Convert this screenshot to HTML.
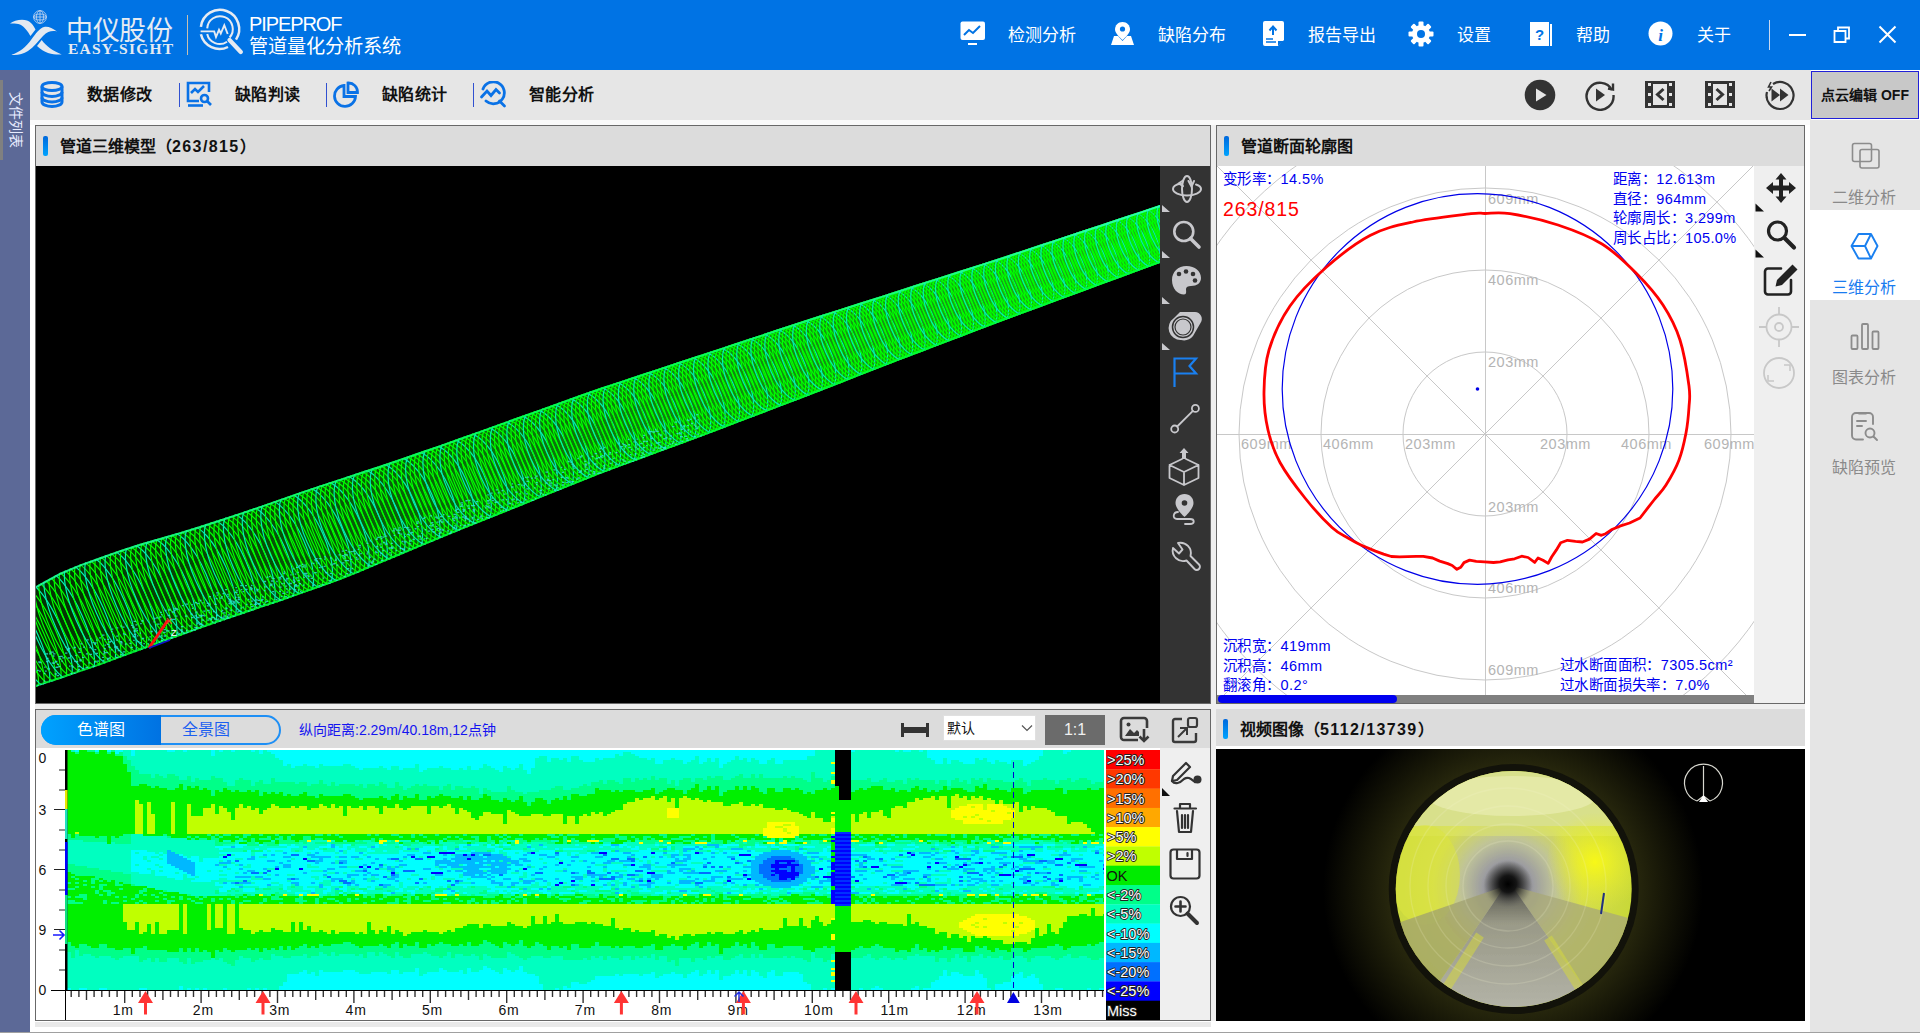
<!DOCTYPE html>
<html lang="zh-CN"><head><meta charset="utf-8">
<style>
*{margin:0;padding:0;box-sizing:border-box}
html,body{width:1920px;height:1033px;overflow:hidden;background:#ffffff;font-family:"Liberation Sans",sans-serif}
.a{position:absolute}
#hdr{left:0;top:0;width:1920px;height:70px;background:#0073e4}
.ht{color:#fff;font-size:17px;line-height:20px;top:25.5px;margin-left:1px}
#side{left:0;top:70px;width:30px;height:962px;background:#5c6997}
#tb{left:30px;top:70px;width:1781px;height:50px;background:#e6e6e6}
.tt{font-size:16px;font-weight:bold;color:#111;top:85px;line-height:20px;letter-spacing:0.3px}
.sep{width:1px;height:24px;top:83px;background:#3050d0}
.pnl{border:1px solid #686868}
.ttl{background:#dcdcdc}
.acc{width:5px;height:20px;border-radius:2px;background:linear-gradient(#0068dc,#00a4ff)}
.pt{font-size:16px;font-weight:bold;color:#111;line-height:20px}
.bl{color:#0000f0;font-size:14.5px;line-height:19.5px;letter-spacing:0.4px}
.gl{color:#b0b0b0;font-size:14px;line-height:16px}
#rs{left:1810px;top:120px;width:110px;height:912px;background:#e5e5e5}
.ri{color:#8a8a8a;font-size:16px;line-height:20px;width:110px;text-align:center}
</style></head><body>
<!-- header -->
<div id="hdr" class="a"></div>

<!-- logo -->
<svg class="a" style="left:0;top:0" width="70" height="60" viewBox="0 0 70 60">
 <g fill="#e3e9f1">
  <path d="M10 23.6 C15 19.5 26 17.5 31 23 C33 25 34.5 27.5 35.5 29.5 L30.5 36 C28 32 25 27 20 24.5 C17 23.5 13 23.3 10 23.6Z"/>
  <path d="M41.7 40 C46 46 53 51 61.7 54.5 C55 55 45 54 37 46 Z"/>
  <path d="M11.4 54.8 C20 52 26 47 31 40 C36 33 40 28 44 27 C48 26 52 28 57 31.4 C52 30.5 48 31 43 36 C38 41 34 47 28 51 C23 54 17 55.5 11.4 54.8Z" stroke="#0073e4" stroke-width="1.4" paint-order="stroke"/>
 </g>
 <g fill="none" stroke="#c8d8f0" stroke-width="0.8">
  <circle cx="40" cy="17" r="6.4"/>
  <ellipse cx="40" cy="17" rx="3.5" ry="6.4"/>
  <ellipse cx="40" cy="17" rx="6.4" ry="3"/>
  <path d="M34 17 H46 M40 11 V23"/>
 </g>
</svg>
<div class="a" style="left:66px;top:15px;font-size:27px;line-height:32px;color:#e6ebf2;letter-spacing:-0.3px">中仪股份</div>
<div class="a" style="left:68px;top:42px;font-family:'Liberation Serif',serif;font-weight:bold;font-size:15.5px;line-height:14px;color:#e6ebf2;letter-spacing:1.2px">EASY-SIGHT</div>
<div class="a" style="left:187px;top:15px;width:1px;height:40px;background:#c8c0b0"></div>
<svg class="a" style="left:195px;top:5px" width="55" height="55" viewBox="0 0 55 55">
 <g fill="none" stroke="#e6ebf2" stroke-linecap="butt">
  <path d="M5.9 21.8 A19.2 19.2 0 1 1 41 34.6" stroke-width="2.5"/>
  <path d="M5.9 29.3 A19.2 19.2 0 0 0 33 42" stroke-width="2.5"/>
  <path d="M12.2 23.4 A12.8 12.8 0 1 1 34.6 32.5" stroke-width="2"/>
  <path d="M12.2 29 A12.8 12.8 0 0 0 32 36.7" stroke-width="2"/>
  <path d="M5.6 26.4 H19.2 L21 32 L24 24.8 L25.8 28.5 L29.3 20.2 L32.7 29" stroke-width="1.9" stroke-linejoin="miter"/>
  <path d="M34.5 35 L45.8 46.9" stroke-width="4.3" stroke-linecap="round"/>
 </g>
</svg>
<div class="a" style="left:249px;top:13px;font-size:20px;line-height:22px;color:#fff;letter-spacing:-1.1px">PIPEPROF</div>
<div class="a" style="left:249px;top:35.5px;font-size:19.2px;line-height:22px;color:#fff">管道量化分析系统</div>

<!-- header menu -->
<svg class="a" style="left:960px;top:21px" width="26" height="25" viewBox="0 0 26 25"><rect x="0.5" y="0.5" width="24.5" height="18.5" rx="2" fill="#fff"/><path d="M4 14 L9 9 L13 12 L20 5" fill="none" stroke="#0073e4" stroke-width="2"/><rect x="8" y="22" width="9" height="2" fill="#fff"/></svg>
<div class="a ht" style="left:1007px">检测分析</div>
<svg class="a" style="left:1110px;top:21px" width="25" height="25" viewBox="0 0 25 25"><path d="M12.5 1 C8 1 5 4.5 5 8.5 C5 13 12.5 19 12.5 19 C12.5 19 20 13 20 8.5 C20 4.5 17 1 12.5 1Z" fill="#fff"/><circle cx="12.5" cy="8" r="2.6" fill="#0073e4"/><path d="M4 15 L8 15 L12.5 20 L17 15 L21 15 L24 24 L1 24Z" fill="#fff"/></svg>
<div class="a ht" style="left:1157px">缺陷分布</div>
<svg class="a" style="left:1263px;top:21px" width="21" height="25" viewBox="0 0 21 25"><path d="M2 0 H19 A2 2 0 0 1 21 2 V19 L15 25 H2 A2 2 0 0 1 0 23 V2 A2 2 0 0 1 2 0Z" fill="#fff"/><path d="M10 14 V6 M6.5 9.5 L10 5.5 L13.5 9.5" fill="none" stroke="#0073e4" stroke-width="2"/><path d="M3 18 H10 M3 21 H13" stroke="#0073e4" stroke-width="1.5"/><path d="M15 25 V20 H21" fill="#0073e4"/></svg>
<div class="a ht" style="left:1307px">报告导出</div>
<svg class="a" style="left:1408px;top:21px" width="26" height="26" viewBox="0 0 26 26"><g fill="#fff"><circle cx="13" cy="13" r="9"/><g id="teeth"><rect x="10.5" y="0.5" width="5" height="6" rx="1"/><rect x="10.5" y="19.5" width="5" height="6" rx="1"/></g><use href="#teeth" transform="rotate(45 13 13)"/><use href="#teeth" transform="rotate(90 13 13)"/><use href="#teeth" transform="rotate(135 13 13)"/></g><circle cx="13" cy="13" r="4" fill="#0073e4"/></svg>
<div class="a ht" style="left:1456px">设置</div>
<svg class="a" style="left:1529px;top:21px" width="24" height="26" viewBox="0 0 24 26"><path d="M1 1 H20 V25 H1Z" fill="#fff"/><path d="M21 3 H23 V25 H21" fill="#fff"/><text x="10.5" y="19" font-size="15" font-weight="bold" text-anchor="middle" fill="#0073e4" font-family="Liberation Sans">?</text></svg>
<div class="a ht" style="left:1575px">帮助</div>
<svg class="a" style="left:1648px;top:21px" width="25" height="25" viewBox="0 0 25 25"><circle cx="12.5" cy="12.5" r="12" fill="#fff"/><text x="12.5" y="19.5" font-size="17" font-weight="bold" font-style="italic" text-anchor="middle" fill="#0073e4" font-family="Liberation Serif">i</text></svg>
<div class="a ht" style="left:1696px">关于</div>
<div class="a" style="left:1769px;top:20px;width:1px;height:30px;background:#c8d8f0"></div>
<div class="a" style="left:1789px;top:34px;width:17px;height:2px;background:#fff"></div>
<svg class="a" style="left:1833px;top:26px" width="18" height="18" viewBox="0 0 18 18"><path d="M1.5 5 H12.5 V16 H1.5Z M5 5 V1.5 H16 V12.5 H12.5" fill="none" stroke="#fff" stroke-width="1.8"/></svg>
<svg class="a" style="left:1878px;top:25px" width="19" height="19" viewBox="0 0 19 19"><path d="M1.5 1.5 L17.5 17.5 M17.5 1.5 L1.5 17.5" stroke="#fff" stroke-width="2"/></svg>

<div id="side" class="a"></div>
<div class="a" style="left:0;top:80px;width:3px;height:80px;background:#808080"></div>
<div class="a" style="left:-14px;top:112px;width:60px;height:16px;color:#e8ecff;font-size:14px;line-height:16px;transform:rotate(90deg);text-align:center">文件列表</div>
<div class="a" style="left:0;top:1032px;width:1920px;height:1px;background:#a0a0a0"></div>

<!-- toolbar -->
<div id="tb" class="a"></div>
<div class="a" style="left:30px;top:120px;width:1780px;height:5px;background:#fafafa"></div>
<!-- toolbar items -->
<svg class="a" style="left:40px;top:81px" width="25" height="27" viewBox="0 0 25 27"><g fill="none" stroke="#0a72e6" stroke-width="3"><ellipse cx="12" cy="5.5" rx="10" ry="4"/><path d="M2 5.5 V21 C2 23.5 6.5 25.5 12 25.5 C17.5 25.5 22 23.5 22 21 V5.5"/><path d="M2 11 C2 13.5 6.5 15.5 12 15.5 C17.5 15.5 22 13.5 22 11 M2 16.5 C2 19 6.5 21 12 21 C17.5 21 22 19 22 16.5"/></g></svg>
<div class="a tt" style="left:87px">数据修改</div>
<div class="a sep" style="left:179px"></div>
<svg class="a" style="left:186px;top:81px" width="28" height="27" viewBox="0 0 28 27"><g fill="none" stroke="#0a72e6" stroke-width="2.6"><path d="M13 20 H2 V2 H23 V11"/><path d="M5 12 L9 8 L12 11 L18 5"/><circle cx="18.5" cy="17.5" r="3.5"/><path d="M21 20 L25 24"/><path d="M2 24.5 H17"/></g></svg>
<div class="a tt" style="left:235px">缺陷判读</div>
<div class="a sep" style="left:326px"></div>
<svg class="a" style="left:333px;top:81px" width="27" height="27" viewBox="0 0 27 27"><g fill="none" stroke="#0a72e6" stroke-width="2.8"><path d="M11 4.5 A10.5 10.5 0 1 0 22.5 15.5 H11Z"/><path d="M15 2 A9 9 0 0 1 24.5 11.5 H15Z"/></g></svg>
<div class="a tt" style="left:382px">缺陷统计</div>
<div class="a sep" style="left:473px"></div>
<svg class="a" style="left:479px;top:81px" width="28" height="27" viewBox="0 0 28 27"><g fill="none" stroke="#0a72e6" stroke-width="2.8" stroke-linecap="round"><path d="M4 8 A11 11 0 1 1 7 20"/><path d="M2.5 16 L8 10 L12 14.5 L17 8.5 L20.5 12"/><path d="M20.5 20 L25.5 25"/></g></svg>
<div class="a tt" style="left:529px">智能分析</div>

<svg class="a" style="left:1524px;top:79px" width="32" height="32" viewBox="0 0 32 32"><circle cx="16" cy="16" r="15.3" fill="#333"/><path d="M12 9.5 L22.5 16 L12 22.5Z" fill="#e6e6e6"/></svg>
<svg class="a" style="left:1584px;top:79px" width="32" height="32" viewBox="0 0 32 32"><path d="M28 11 A13.5 13.5 0 1 0 29.5 16" fill="none" stroke="#333" stroke-width="2.4"/><path d="M24 9.5 L29 10.5 L29 4.5" fill="none" stroke="#333" stroke-width="2.4"/><path d="M12 9.5 L21 16 L12 22.5Z" fill="#333"/></svg>
<svg class="a" style="left:1645px;top:81px" width="30" height="27" viewBox="0 0 30 27"><path d="M0 0 H30 V27 H0Z M3 2 V5 H6 V2Z M3 12 V15 H6 V12Z M3 22 V25 H6 V22Z M24 2 V5 H27 V2Z M24 12 V15 H27 V12Z M24 22 V25 H27 V22Z M8 3 V24 H22 V3Z" fill="#333" fill-rule="evenodd"/><path d="M18.5 8 L12.5 13.5 L18.5 19" fill="none" stroke="#333" stroke-width="3"/></svg>
<svg class="a" style="left:1705px;top:81px" width="30" height="27" viewBox="0 0 30 27"><path d="M0 0 H30 V27 H0Z M3 2 V5 H6 V2Z M3 12 V15 H6 V12Z M3 22 V25 H6 V22Z M24 2 V5 H27 V2Z M24 12 V15 H27 V12Z M24 22 V25 H27 V22Z M8 3 V24 H22 V3Z" fill="#333" fill-rule="evenodd"/><path d="M11.5 8 L17.5 13.5 L11.5 19" fill="none" stroke="#333" stroke-width="3"/></svg>
<svg class="a" style="left:1764px;top:79px" width="32" height="32" viewBox="0 0 32 32"><path d="M9 5 A13.5 13.5 0 1 1 3 13" fill="none" stroke="#333" stroke-width="2.2"/><path d="M2.5 18 A13.5 13.5 0 0 0 3 19" fill="none" stroke="#333" stroke-width="2"/><path d="M7 3 L4.5 8 L7.5 8 L5 12" fill="none" stroke="#333" stroke-width="1.6"/><path d="M7.5 9.5 L16 16 L7.5 22.5Z M16 9.5 L24.5 16 L16 22.5Z" fill="#333"/></svg>
<div class="a" style="left:1811px;top:71px;width:108px;height:48px;background:#c8c8c8;border:1px solid #2020d8;font-size:14px;font-weight:bold;color:#111;text-align:center;line-height:46px">点云编辑 OFF</div>



<!-- ===== 3D panel ===== -->
<div class="a" style="left:35px;top:704px;width:1770px;height:5px;background:#efefef"></div>
<div class="a" style="left:1211px;top:125px;width:5px;height:896px;background:#efefef"></div>
<div class="a pnl" style="left:35px;top:125px;width:1176px;height:579px;background:#000"></div>
<div class="a ttl" style="left:36px;top:126px;width:1174px;height:40px"></div>
<div class="a acc" style="left:43px;top:136px"></div>
<div class="a pt" style="left:60px;top:137px">管道三维模型（<span style="letter-spacing:1.4px">263/815</span>）</div>
<!--PIPE--><svg class="a" style="left:36px;top:166px" width="1124" height="537" viewBox="36 166 1124 537">
<defs><clipPath id="pc"><polygon points="20,594.8 40,583.8 60,572.8 80,564.4 100,557.3 120,550.2 140,543.8 160,538.0 180,532.2 200,526.0 220,519.5 240,512.9 260,506.2 280,499.2 300,492.2 320,485.4 340,478.9 360,472.3 380,465.8 400,458.9 420,452.1 440,445.2 460,438.0 480,430.9 500,423.7 520,416.6 540,409.4 560,402.3 580,395.1 600,388.0 620,381.4 640,374.8 660,368.2 680,361.6 700,355.0 720,348.4 740,341.8 760,335.2 780,328.6 800,322.0 820,315.6 840,309.2 860,302.8 880,296.4 900,290.0 920,283.6 940,277.2 960,270.8 980,264.4 1000,258.0 1020,251.4 1040,244.8 1060,238.2 1080,231.6 1100,225.0 1120,218.3 1140,211.7 1160,205.0 1180,198.3 1180,255.7 1160,263.0 1140,270.3 1120,277.7 1100,285.0 1080,292.4 1060,299.8 1040,307.2 1020,314.6 1000,322.0 980,329.6 960,337.2 940,344.8 920,352.4 900,360.0 880,367.8 860,375.6 840,383.4 820,391.2 800,399.0 780,406.6 760,414.2 740,421.8 720,429.4 700,437.0 680,444.4 660,451.8 640,459.2 620,466.6 600,474.0 580,482.0 560,490.1 540,498.1 520,506.2 500,514.2 480,522.3 460,530.3 440,538.4 420,546.8 400,555.2 380,563.6 360,572.1 340,580.1 320,587.2 300,594.3 280,601.4 260,608.1 240,614.9 220,621.7 200,628.8 180,635.9 160,643.0 140,650.4 120,657.8 100,665.3 80,672.1 60,678.9 40,685.6 20,692.4"/></clipPath></defs>
<g clip-path="url(#pc)">
<defs><linearGradient id="pg" x1="36" y1="0" x2="1160" y2="0" gradientUnits="userSpaceOnUse"><stop offset="0" stop-color="#043004"/><stop offset="0.4" stop-color="#0c6c0c"/><stop offset="1" stop-color="#18b818"/></linearGradient></defs><rect x="0" y="150" width="1200" height="600" fill="url(#pg)"/>
<g fill="none" stroke="#00ff00" stroke-width="1.2" stroke-opacity="1"><ellipse cx="0.0" cy="652.5" rx="11.2" ry="46.6" transform="rotate(-23.7 0.0 652.5)"/><ellipse stroke="#00f0b0" cx="5.4" cy="650.1" rx="11.4" ry="47.2" transform="rotate(-23.7 5.4 650.1)"/><ellipse cx="10.8" cy="647.7" rx="11.7" ry="47.8" transform="rotate(-23.7 10.8 647.7)"/><ellipse cx="16.2" cy="645.3" rx="11.9" ry="48.3" transform="rotate(-23.7 16.2 645.3)"/><ellipse cx="21.5" cy="642.9" rx="12.2" ry="48.9" transform="rotate(-23.7 21.5 642.9)"/><ellipse stroke="#00f0b0" cx="26.9" cy="640.6" rx="12.4" ry="49.4" transform="rotate(-23.7 26.9 640.6)"/><ellipse cx="32.2" cy="638.2" rx="12.6" ry="50.0" transform="rotate(-23.7 32.2 638.2)"/><ellipse cx="37.5" cy="635.8" rx="12.9" ry="50.6" transform="rotate(-23.7 37.5 635.8)"/><ellipse cx="42.8" cy="633.5" rx="13.1" ry="51.1" transform="rotate(-23.7 42.8 633.5)"/><ellipse stroke="#00f0b0" cx="48.1" cy="631.1" rx="13.4" ry="51.7" transform="rotate(-23.7 48.1 631.1)"/><ellipse cx="53.4" cy="628.8" rx="13.6" ry="52.2" transform="rotate(-23.7 53.4 628.8)"/><ellipse cx="58.7" cy="626.4" rx="13.9" ry="52.8" transform="rotate(-23.7 58.7 626.4)"/><ellipse cx="63.9" cy="624.1" rx="14.2" ry="53.3" transform="rotate(-23.7 63.9 624.1)"/><ellipse stroke="#00f0b0" cx="69.2" cy="622.0" rx="14.4" ry="53.7" transform="rotate(-23.7 69.2 622.0)"/><ellipse cx="74.4" cy="620.2" rx="14.5" ry="53.7" transform="rotate(-23.7 74.4 620.2)"/><ellipse cx="79.6" cy="618.4" rx="14.6" ry="53.7" transform="rotate(-23.7 79.6 618.4)"/><ellipse cx="84.8" cy="616.6" rx="14.7" ry="53.8" transform="rotate(-23.7 84.8 616.6)"/><ellipse stroke="#00f0b0" cx="90.0" cy="614.8" rx="14.9" ry="53.8" transform="rotate(-23.7 90.0 614.8)"/><ellipse cx="95.2" cy="613.0" rx="15.0" ry="53.9" transform="rotate(-23.7 95.2 613.0)"/><ellipse cx="100.3" cy="611.2" rx="15.1" ry="53.9" transform="rotate(-23.7 100.3 611.2)"/><ellipse cx="105.5" cy="609.3" rx="15.2" ry="53.8" transform="rotate(-23.7 105.5 609.3)"/><ellipse stroke="#00f0b0" cx="110.6" cy="607.4" rx="15.3" ry="53.8" transform="rotate(-23.7 110.6 607.4)"/><ellipse cx="115.7" cy="605.6" rx="15.4" ry="53.8" transform="rotate(-23.7 115.7 605.6)"/><ellipse cx="120.8" cy="603.7" rx="15.5" ry="53.7" transform="rotate(-23.7 120.8 603.7)"/><ellipse cx="125.9" cy="601.9" rx="15.6" ry="53.7" transform="rotate(-23.7 125.9 601.9)"/><ellipse stroke="#00f0b0" cx="131.0" cy="600.1" rx="15.7" ry="53.6" transform="rotate(-23.7 131.0 600.1)"/><ellipse cx="136.1" cy="598.4" rx="15.7" ry="53.4" transform="rotate(-23.7 136.1 598.4)"/><ellipse cx="141.2" cy="596.7" rx="15.8" ry="53.2" transform="rotate(-23.7 141.2 596.7)"/><ellipse cx="146.2" cy="595.1" rx="15.8" ry="53.0" transform="rotate(-23.7 146.2 595.1)"/><ellipse stroke="#00f0b0" cx="151.2" cy="593.4" rx="15.9" ry="52.8" transform="rotate(-23.7 151.2 593.4)"/><ellipse cx="156.3" cy="591.7" rx="15.9" ry="52.5" transform="rotate(-23.7 156.3 591.7)"/><ellipse cx="161.3" cy="590.1" rx="15.9" ry="52.4" transform="rotate(-23.7 161.3 590.1)"/><ellipse cx="166.3" cy="588.5" rx="16.0" ry="52.2" transform="rotate(-23.7 166.3 588.5)"/><ellipse stroke="#00f0b0" cx="171.3" cy="586.9" rx="16.1" ry="52.0" transform="rotate(-23.7 171.3 586.9)"/><ellipse cx="176.2" cy="585.3" rx="16.1" ry="51.9" transform="rotate(-23.7 176.2 585.3)"/><ellipse cx="181.2" cy="583.7" rx="16.2" ry="51.7" transform="rotate(-23.7 181.2 583.7)"/><ellipse cx="186.1" cy="582.1" rx="16.2" ry="51.6" transform="rotate(-23.7 186.1 582.1)"/><ellipse stroke="#00f0b0" cx="191.1" cy="580.5" rx="16.3" ry="51.4" transform="rotate(-23.7 191.1 580.5)"/><ellipse cx="196.0" cy="578.8" rx="16.3" ry="51.3" transform="rotate(-23.7 196.0 578.8)"/><ellipse cx="200.9" cy="577.1" rx="16.4" ry="51.3" transform="rotate(-23.7 200.9 577.1)"/><ellipse cx="205.8" cy="575.4" rx="16.5" ry="51.2" transform="rotate(-23.7 205.8 575.4)"/><ellipse stroke="#00f0b0" cx="210.7" cy="573.8" rx="16.6" ry="51.1" transform="rotate(-23.7 210.7 573.8)"/><ellipse cx="215.6" cy="572.1" rx="16.7" ry="51.1" transform="rotate(-23.7 215.6 572.1)"/><ellipse cx="220.4" cy="570.4" rx="16.7" ry="51.0" transform="rotate(-23.7 220.4 570.4)"/><ellipse cx="225.3" cy="568.8" rx="16.8" ry="51.0" transform="rotate(-23.7 225.3 568.8)"/><ellipse stroke="#00f0b0" cx="230.1" cy="567.2" rx="16.9" ry="51.0" transform="rotate(-23.7 230.1 567.2)"/><ellipse cx="234.9" cy="565.6" rx="17.0" ry="50.9" transform="rotate(-23.7 234.9 565.6)"/><ellipse cx="239.7" cy="564.0" rx="17.1" ry="50.9" transform="rotate(-23.7 239.7 564.0)"/><ellipse cx="244.5" cy="562.4" rx="17.2" ry="50.9" transform="rotate(-23.7 244.5 562.4)"/><ellipse stroke="#00f0b0" cx="249.3" cy="560.8" rx="17.3" ry="50.9" transform="rotate(-23.7 249.3 560.8)"/><ellipse cx="254.1" cy="559.2" rx="17.4" ry="50.9" transform="rotate(-23.7 254.1 559.2)"/><ellipse cx="258.9" cy="557.5" rx="17.5" ry="50.9" transform="rotate(-23.7 258.9 557.5)"/><ellipse cx="263.6" cy="555.9" rx="17.6" ry="50.9" transform="rotate(-23.7 263.6 555.9)"/><ellipse stroke="#00f0b0" cx="268.4" cy="554.3" rx="17.7" ry="50.9" transform="rotate(-23.7 268.4 554.3)"/><ellipse cx="273.1" cy="552.6" rx="17.8" ry="50.9" transform="rotate(-23.7 273.1 552.6)"/><ellipse cx="277.8" cy="551.0" rx="17.9" ry="51.0" transform="rotate(-23.7 277.8 551.0)"/><ellipse cx="282.5" cy="549.4" rx="18.0" ry="51.0" transform="rotate(-23.7 282.5 549.4)"/><ellipse stroke="#00f0b0" cx="287.2" cy="547.8" rx="18.1" ry="51.0" transform="rotate(-23.7 287.2 547.8)"/><ellipse cx="291.9" cy="546.1" rx="18.2" ry="51.0" transform="rotate(-23.7 291.9 546.1)"/><ellipse cx="296.6" cy="544.5" rx="18.3" ry="51.0" transform="rotate(-23.7 296.6 544.5)"/><ellipse cx="301.2" cy="542.8" rx="18.4" ry="50.9" transform="rotate(-23.7 301.2 542.8)"/><ellipse stroke="#00f0b0" cx="305.9" cy="541.2" rx="18.5" ry="50.9" transform="rotate(-23.7 305.9 541.2)"/><ellipse cx="310.5" cy="539.6" rx="18.5" ry="50.9" transform="rotate(-23.7 310.5 539.6)"/><ellipse cx="315.1" cy="538.0" rx="18.6" ry="50.9" transform="rotate(-23.7 315.1 538.0)"/><ellipse cx="319.7" cy="536.4" rx="18.7" ry="50.8" transform="rotate(-23.7 319.7 536.4)"/><ellipse stroke="#00f0b0" cx="324.3" cy="534.8" rx="18.8" ry="50.8" transform="rotate(-23.7 324.3 534.8)"/><ellipse cx="328.9" cy="533.3" rx="18.8" ry="50.7" transform="rotate(-23.7 328.9 533.3)"/><ellipse cx="333.5" cy="531.7" rx="18.9" ry="50.6" transform="rotate(-23.7 333.5 531.7)"/><ellipse cx="338.1" cy="530.1" rx="19.0" ry="50.6" transform="rotate(-23.7 338.1 530.1)"/><ellipse stroke="#00f0b0" cx="342.6" cy="528.6" rx="19.0" ry="50.5" transform="rotate(-23.7 342.6 528.6)"/><ellipse cx="347.2" cy="527.0" rx="19.1" ry="50.4" transform="rotate(-23.7 347.2 527.0)"/><ellipse cx="351.7" cy="525.3" rx="19.1" ry="50.2" transform="rotate(-23.7 351.7 525.3)"/><ellipse cx="356.2" cy="523.6" rx="19.1" ry="50.0" transform="rotate(-23.7 356.2 523.6)"/><ellipse stroke="#00f0b0" cx="360.7" cy="521.9" rx="19.1" ry="49.7" transform="rotate(-23.7 360.7 521.9)"/><ellipse cx="365.2" cy="520.3" rx="19.1" ry="49.5" transform="rotate(-23.7 365.2 520.3)"/><ellipse cx="369.7" cy="518.6" rx="19.1" ry="49.3" transform="rotate(-23.7 369.7 518.6)"/><ellipse cx="374.2" cy="516.9" rx="19.1" ry="49.1" transform="rotate(-23.7 374.2 516.9)"/><ellipse stroke="#00f0b0" cx="378.7" cy="515.2" rx="19.1" ry="48.9" transform="rotate(-23.7 378.7 515.2)"/><ellipse cx="383.1" cy="513.5" rx="19.2" ry="48.7" transform="rotate(-23.7 383.1 513.5)"/><ellipse cx="387.6" cy="511.8" rx="19.2" ry="48.5" transform="rotate(-23.7 387.6 511.8)"/><ellipse cx="392.0" cy="510.1" rx="19.2" ry="48.4" transform="rotate(-23.7 392.0 510.1)"/><ellipse stroke="#00f0b0" cx="396.4" cy="508.4" rx="19.2" ry="48.2" transform="rotate(-23.7 396.4 508.4)"/><ellipse cx="400.8" cy="506.8" rx="19.2" ry="48.0" transform="rotate(-23.7 400.8 506.8)"/><ellipse cx="405.2" cy="505.1" rx="19.2" ry="47.8" transform="rotate(-23.7 405.2 505.1)"/><ellipse cx="409.6" cy="503.4" rx="19.2" ry="47.7" transform="rotate(-23.7 409.6 503.4)"/><ellipse stroke="#00f0b0" cx="414.0" cy="501.7" rx="19.3" ry="47.5" transform="rotate(-23.7 414.0 501.7)"/><ellipse cx="418.3" cy="500.1" rx="19.3" ry="47.3" transform="rotate(-23.7 418.3 500.1)"/><ellipse cx="422.7" cy="498.4" rx="19.3" ry="47.1" transform="rotate(-23.7 422.7 498.4)"/><ellipse cx="427.0" cy="496.7" rx="19.3" ry="47.0" transform="rotate(-23.7 427.0 496.7)"/><ellipse stroke="#00f0b0" cx="431.4" cy="495.1" rx="19.3" ry="46.8" transform="rotate(-23.7 431.4 495.1)"/><ellipse cx="435.7" cy="493.4" rx="19.3" ry="46.6" transform="rotate(-23.7 435.7 493.4)"/><ellipse cx="440.0" cy="491.8" rx="19.4" ry="46.5" transform="rotate(-23.7 440.0 491.8)"/><ellipse cx="444.3" cy="490.1" rx="19.4" ry="46.4" transform="rotate(-23.7 444.3 490.1)"/><ellipse stroke="#00f0b0" cx="448.6" cy="488.5" rx="19.4" ry="46.3" transform="rotate(-23.7 448.6 488.5)"/><ellipse cx="452.9" cy="486.9" rx="19.5" ry="46.2" transform="rotate(-23.7 452.9 486.9)"/><ellipse cx="457.1" cy="485.3" rx="19.5" ry="46.1" transform="rotate(-23.7 457.1 485.3)"/><ellipse cx="461.4" cy="483.7" rx="19.5" ry="46.0" transform="rotate(-23.7 461.4 483.7)"/><ellipse stroke="#00f0b0" cx="465.6" cy="482.0" rx="19.6" ry="45.9" transform="rotate(-23.7 465.6 482.0)"/><ellipse cx="469.9" cy="480.4" rx="19.6" ry="45.8" transform="rotate(-23.7 469.9 480.4)"/><ellipse cx="474.1" cy="478.8" rx="19.7" ry="45.8" transform="rotate(-23.7 474.1 478.8)"/><ellipse cx="478.3" cy="477.2" rx="19.7" ry="45.7" transform="rotate(-23.7 478.3 477.2)"/><ellipse stroke="#00f0b0" cx="482.5" cy="475.6" rx="19.7" ry="45.6" transform="rotate(-23.7 482.5 475.6)"/><ellipse cx="486.7" cy="474.0" rx="19.8" ry="45.5" transform="rotate(-23.7 486.7 474.0)"/><ellipse cx="490.9" cy="472.4" rx="19.8" ry="45.4" transform="rotate(-23.7 490.9 472.4)"/><ellipse cx="495.1" cy="470.9" rx="19.8" ry="45.3" transform="rotate(-23.7 495.1 470.9)"/><ellipse stroke="#00f0b0" cx="499.2" cy="469.3" rx="19.9" ry="45.2" transform="rotate(-23.7 499.2 469.3)"/><ellipse cx="503.4" cy="467.7" rx="19.8" ry="45.1" transform="rotate(-23.7 503.4 467.7)"/><ellipse cx="507.5" cy="466.1" rx="19.8" ry="45.0" transform="rotate(-23.7 507.5 466.1)"/><ellipse cx="511.7" cy="464.6" rx="19.8" ry="44.9" transform="rotate(-23.7 511.7 464.6)"/><ellipse stroke="#00f0b0" cx="515.8" cy="463.0" rx="19.7" ry="44.8" transform="rotate(-23.7 515.8 463.0)"/><ellipse cx="519.9" cy="461.4" rx="19.7" ry="44.7" transform="rotate(-23.7 519.9 461.4)"/><ellipse cx="524.0" cy="459.9" rx="19.6" ry="44.6" transform="rotate(-23.7 524.0 459.9)"/><ellipse cx="528.1" cy="458.3" rx="19.6" ry="44.5" transform="rotate(-23.7 528.1 458.3)"/><ellipse stroke="#00f0b0" cx="532.2" cy="456.8" rx="19.6" ry="44.4" transform="rotate(-23.7 532.2 456.8)"/><ellipse cx="536.2" cy="455.2" rx="19.5" ry="44.4" transform="rotate(-23.7 536.2 455.2)"/><ellipse cx="540.3" cy="453.7" rx="19.5" ry="44.3" transform="rotate(-23.7 540.3 453.7)"/><ellipse cx="544.3" cy="452.1" rx="19.4" ry="44.2" transform="rotate(-23.7 544.3 452.1)"/><ellipse stroke="#00f0b0" cx="548.4" cy="450.6" rx="19.4" ry="44.1" transform="rotate(-23.7 548.4 450.6)"/><ellipse cx="552.4" cy="449.1" rx="19.4" ry="44.0" transform="rotate(-23.7 552.4 449.1)"/><ellipse cx="556.4" cy="447.6" rx="19.3" ry="43.9" transform="rotate(-23.7 556.4 447.6)"/><ellipse cx="560.4" cy="446.0" rx="19.3" ry="43.8" transform="rotate(-23.7 560.4 446.0)"/><ellipse stroke="#00f0b0" cx="564.4" cy="444.5" rx="19.2" ry="43.7" transform="rotate(-23.7 564.4 444.5)"/><ellipse cx="568.4" cy="443.0" rx="19.2" ry="43.6" transform="rotate(-23.7 568.4 443.0)"/><ellipse cx="572.4" cy="441.5" rx="19.2" ry="43.5" transform="rotate(-23.7 572.4 441.5)"/><ellipse cx="576.4" cy="440.0" rx="19.1" ry="43.4" transform="rotate(-23.7 576.4 440.0)"/><ellipse stroke="#00f0b0" cx="580.3" cy="438.5" rx="19.1" ry="43.4" transform="rotate(-23.7 580.3 438.5)"/><ellipse cx="584.3" cy="437.0" rx="19.0" ry="43.3" transform="rotate(-23.7 584.3 437.0)"/><ellipse cx="588.2" cy="435.5" rx="19.0" ry="43.2" transform="rotate(-23.7 588.2 435.5)"/><ellipse cx="592.1" cy="434.0" rx="19.0" ry="43.1" transform="rotate(-23.7 592.1 434.0)"/><ellipse stroke="#00f0b0" cx="596.1" cy="432.5" rx="18.9" ry="43.0" transform="rotate(-23.7 596.1 432.5)"/><ellipse cx="600.0" cy="431.0" rx="18.9" ry="42.9" transform="rotate(-23.7 600.0 431.0)"/><ellipse cx="603.9" cy="429.6" rx="18.8" ry="42.8" transform="rotate(-23.7 603.9 429.6)"/><ellipse cx="607.8" cy="428.3" rx="18.8" ry="42.8" transform="rotate(-23.7 607.8 428.3)"/><ellipse stroke="#00f0b0" cx="611.6" cy="426.9" rx="18.8" ry="42.7" transform="rotate(-23.7 611.6 426.9)"/><ellipse cx="615.5" cy="425.6" rx="18.7" ry="42.6" transform="rotate(-23.7 615.5 425.6)"/><ellipse cx="619.4" cy="424.2" rx="18.7" ry="42.5" transform="rotate(-23.7 619.4 424.2)"/><ellipse cx="623.2" cy="422.9" rx="18.7" ry="42.5" transform="rotate(-23.7 623.2 422.9)"/><ellipse stroke="#00f0b0" cx="627.1" cy="421.5" rx="18.6" ry="42.4" transform="rotate(-23.7 627.1 421.5)"/><ellipse cx="630.9" cy="420.2" rx="18.6" ry="42.3" transform="rotate(-23.7 630.9 420.2)"/><ellipse cx="634.7" cy="418.8" rx="18.6" ry="42.2" transform="rotate(-23.7 634.7 418.8)"/><ellipse cx="638.5" cy="417.5" rx="18.5" ry="42.1" transform="rotate(-23.7 638.5 417.5)"/><ellipse stroke="#00f0b0" cx="642.3" cy="416.2" rx="18.5" ry="42.1" transform="rotate(-23.7 642.3 416.2)"/><ellipse cx="646.1" cy="414.9" rx="18.5" ry="42.0" transform="rotate(-23.7 646.1 414.9)"/><ellipse cx="649.9" cy="413.5" rx="18.4" ry="41.9" transform="rotate(-23.7 649.9 413.5)"/><ellipse cx="653.7" cy="412.2" rx="18.4" ry="41.8" transform="rotate(-23.7 653.7 412.2)"/><ellipse stroke="#00f0b0" cx="657.5" cy="410.9" rx="18.4" ry="41.8" transform="rotate(-23.7 657.5 410.9)"/><ellipse cx="661.2" cy="409.6" rx="18.3" ry="41.7" transform="rotate(-23.7 661.2 409.6)"/><ellipse cx="665.0" cy="408.3" rx="18.3" ry="41.6" transform="rotate(-23.7 665.0 408.3)"/><ellipse cx="668.7" cy="407.0" rx="18.3" ry="41.5" transform="rotate(-23.7 668.7 407.0)"/><ellipse stroke="#00f0b0" cx="672.4" cy="405.6" rx="18.2" ry="41.5" transform="rotate(-23.7 672.4 405.6)"/><ellipse cx="676.2" cy="404.3" rx="18.2" ry="41.4" transform="rotate(-23.7 676.2 404.3)"/><ellipse cx="679.9" cy="403.0" rx="18.2" ry="41.3" transform="rotate(-23.7 679.9 403.0)"/><ellipse cx="683.6" cy="401.8" rx="18.1" ry="41.2" transform="rotate(-23.7 683.6 401.8)"/><ellipse stroke="#00f0b0" cx="687.3" cy="400.5" rx="18.1" ry="41.2" transform="rotate(-23.7 687.3 400.5)"/><ellipse cx="690.9" cy="399.2" rx="18.1" ry="41.1" transform="rotate(-23.7 690.9 399.2)"/><ellipse cx="694.6" cy="397.9" rx="18.1" ry="41.0" transform="rotate(-23.7 694.6 397.9)"/><ellipse cx="698.3" cy="396.6" rx="18.0" ry="41.0" transform="rotate(-23.7 698.3 396.6)"/><ellipse stroke="#00f0b0" cx="701.9" cy="395.3" rx="18.0" ry="40.9" transform="rotate(-23.7 701.9 395.3)"/><ellipse cx="705.6" cy="394.0" rx="17.9" ry="40.8" transform="rotate(-23.7 705.6 394.0)"/><ellipse cx="709.2" cy="392.7" rx="17.9" ry="40.7" transform="rotate(-23.7 709.2 392.7)"/><ellipse cx="712.8" cy="391.4" rx="17.9" ry="40.6" transform="rotate(-23.7 712.8 391.4)"/><ellipse stroke="#00f0b0" cx="716.5" cy="390.2" rx="17.8" ry="40.5" transform="rotate(-23.7 716.5 390.2)"/><ellipse cx="720.1" cy="388.9" rx="17.8" ry="40.4" transform="rotate(-23.7 720.1 388.9)"/><ellipse cx="723.7" cy="387.6" rx="17.7" ry="40.3" transform="rotate(-23.7 723.7 387.6)"/><ellipse cx="727.3" cy="386.3" rx="17.7" ry="40.2" transform="rotate(-23.7 727.3 386.3)"/><ellipse stroke="#00f0b0" cx="730.8" cy="385.1" rx="17.7" ry="40.2" transform="rotate(-23.7 730.8 385.1)"/><ellipse cx="734.4" cy="383.8" rx="17.6" ry="40.1" transform="rotate(-23.7 734.4 383.8)"/><ellipse cx="738.0" cy="382.5" rx="17.6" ry="40.0" transform="rotate(-23.7 738.0 382.5)"/><ellipse cx="741.5" cy="381.3" rx="17.5" ry="39.9" transform="rotate(-23.7 741.5 381.3)"/><ellipse stroke="#00f0b0" cx="745.1" cy="380.0" rx="17.5" ry="39.8" transform="rotate(-23.7 745.1 380.0)"/><ellipse cx="748.6" cy="378.7" rx="17.5" ry="39.7" transform="rotate(-23.7 748.6 378.7)"/><ellipse cx="752.1" cy="377.5" rx="17.4" ry="39.6" transform="rotate(-23.7 752.1 377.5)"/><ellipse cx="755.7" cy="376.2" rx="17.4" ry="39.5" transform="rotate(-23.7 755.7 376.2)"/><ellipse stroke="#00f0b0" cx="759.2" cy="375.0" rx="17.4" ry="39.4" transform="rotate(-23.7 759.2 375.0)"/><ellipse cx="762.7" cy="373.8" rx="17.3" ry="39.4" transform="rotate(-23.7 762.7 373.8)"/><ellipse cx="766.2" cy="372.5" rx="17.3" ry="39.3" transform="rotate(-23.7 766.2 372.5)"/><ellipse cx="769.6" cy="371.3" rx="17.2" ry="39.2" transform="rotate(-23.7 769.6 371.3)"/><ellipse stroke="#00f0b0" cx="773.1" cy="370.0" rx="17.2" ry="39.1" transform="rotate(-23.7 773.1 370.0)"/><ellipse cx="776.6" cy="368.8" rx="17.2" ry="39.0" transform="rotate(-23.7 776.6 368.8)"/><ellipse cx="780.0" cy="367.6" rx="17.1" ry="38.9" transform="rotate(-23.7 780.0 367.6)"/><ellipse cx="783.5" cy="366.4" rx="17.1" ry="38.8" transform="rotate(-23.7 783.5 366.4)"/><ellipse stroke="#00f0b0" cx="786.9" cy="365.1" rx="17.1" ry="38.8" transform="rotate(-23.7 786.9 365.1)"/><ellipse cx="790.4" cy="363.9" rx="17.0" ry="38.7" transform="rotate(-23.7 790.4 363.9)"/><ellipse cx="793.8" cy="362.7" rx="17.0" ry="38.6" transform="rotate(-23.7 793.8 362.7)"/><ellipse cx="797.2" cy="361.5" rx="16.9" ry="38.5" transform="rotate(-23.7 797.2 361.5)"/><ellipse stroke="#00f0b0" cx="800.6" cy="360.3" rx="16.9" ry="38.4" transform="rotate(-23.7 800.6 360.3)"/><ellipse cx="804.0" cy="359.1" rx="16.8" ry="38.3" transform="rotate(-23.7 804.0 359.1)"/><ellipse cx="807.4" cy="357.9" rx="16.8" ry="38.2" transform="rotate(-23.7 807.4 357.9)"/><ellipse cx="810.8" cy="356.7" rx="16.7" ry="38.0" transform="rotate(-23.7 810.8 356.7)"/><ellipse stroke="#00f0b0" cx="814.2" cy="355.5" rx="16.7" ry="37.9" transform="rotate(-23.7 814.2 355.5)"/><ellipse cx="817.5" cy="354.3" rx="16.6" ry="37.8" transform="rotate(-23.7 817.5 354.3)"/><ellipse cx="820.9" cy="353.1" rx="16.6" ry="37.7" transform="rotate(-23.7 820.9 353.1)"/><ellipse cx="824.2" cy="351.9" rx="16.5" ry="37.6" transform="rotate(-23.7 824.2 351.9)"/><ellipse stroke="#00f0b0" cx="827.6" cy="350.7" rx="16.5" ry="37.5" transform="rotate(-23.7 827.6 350.7)"/><ellipse cx="830.9" cy="349.5" rx="16.4" ry="37.3" transform="rotate(-23.7 830.9 349.5)"/><ellipse cx="834.2" cy="348.4" rx="16.4" ry="37.2" transform="rotate(-23.7 834.2 348.4)"/><ellipse cx="837.5" cy="347.2" rx="16.3" ry="37.1" transform="rotate(-23.7 837.5 347.2)"/><ellipse stroke="#00f0b0" cx="840.8" cy="346.0" rx="16.3" ry="37.0" transform="rotate(-23.7 840.8 346.0)"/><ellipse cx="844.1" cy="344.8" rx="16.2" ry="36.9" transform="rotate(-23.7 844.1 344.8)"/><ellipse cx="847.4" cy="343.7" rx="16.2" ry="36.8" transform="rotate(-23.7 847.4 343.7)"/><ellipse cx="850.7" cy="342.5" rx="16.1" ry="36.7" transform="rotate(-23.7 850.7 342.5)"/><ellipse stroke="#00f0b0" cx="854.0" cy="341.3" rx="16.1" ry="36.5" transform="rotate(-23.7 854.0 341.3)"/><ellipse cx="857.3" cy="340.2" rx="16.0" ry="36.4" transform="rotate(-23.7 857.3 340.2)"/><ellipse cx="860.5" cy="339.0" rx="16.0" ry="36.3" transform="rotate(-23.7 860.5 339.0)"/><ellipse cx="863.8" cy="337.9" rx="15.9" ry="36.2" transform="rotate(-23.7 863.8 337.9)"/><ellipse stroke="#00f0b0" cx="867.0" cy="336.7" rx="15.9" ry="36.1" transform="rotate(-23.7 867.0 336.7)"/><ellipse cx="870.2" cy="335.6" rx="15.8" ry="36.0" transform="rotate(-23.7 870.2 335.6)"/><ellipse cx="873.5" cy="334.4" rx="15.8" ry="35.9" transform="rotate(-23.7 873.5 334.4)"/><ellipse cx="876.7" cy="333.3" rx="15.7" ry="35.7" transform="rotate(-23.7 876.7 333.3)"/><ellipse stroke="#00f0b0" cx="879.9" cy="332.1" rx="15.7" ry="35.6" transform="rotate(-23.7 879.9 332.1)"/><ellipse cx="883.1" cy="331.0" rx="15.6" ry="35.5" transform="rotate(-23.7 883.1 331.0)"/><ellipse cx="886.3" cy="329.9" rx="15.6" ry="35.4" transform="rotate(-23.7 886.3 329.9)"/><ellipse cx="889.5" cy="328.7" rx="15.5" ry="35.3" transform="rotate(-23.7 889.5 328.7)"/><ellipse stroke="#00f0b0" cx="892.6" cy="327.6" rx="15.5" ry="35.2" transform="rotate(-23.7 892.6 327.6)"/><ellipse cx="895.8" cy="326.5" rx="15.4" ry="35.1" transform="rotate(-23.7 895.8 326.5)"/><ellipse cx="899.0" cy="325.4" rx="15.4" ry="35.0" transform="rotate(-23.7 899.0 325.4)"/><ellipse cx="902.1" cy="324.3" rx="15.3" ry="34.9" transform="rotate(-23.7 902.1 324.3)"/><ellipse stroke="#00f0b0" cx="905.3" cy="323.2" rx="15.3" ry="34.8" transform="rotate(-23.7 905.3 323.2)"/><ellipse cx="908.4" cy="322.1" rx="15.3" ry="34.7" transform="rotate(-23.7 908.4 322.1)"/><ellipse cx="911.5" cy="321.0" rx="15.2" ry="34.6" transform="rotate(-23.7 911.5 321.0)"/><ellipse cx="914.6" cy="319.9" rx="15.2" ry="34.5" transform="rotate(-23.7 914.6 319.9)"/><ellipse stroke="#00f0b0" cx="917.8" cy="318.8" rx="15.1" ry="34.4" transform="rotate(-23.7 917.8 318.8)"/><ellipse cx="920.9" cy="317.7" rx="15.1" ry="34.3" transform="rotate(-23.7 920.9 317.7)"/><ellipse cx="924.0" cy="316.6" rx="15.1" ry="34.2" transform="rotate(-23.7 924.0 316.6)"/><ellipse cx="927.1" cy="315.5" rx="15.0" ry="34.1" transform="rotate(-23.7 927.1 315.5)"/><ellipse stroke="#00f0b0" cx="930.1" cy="314.5" rx="15.0" ry="34.0" transform="rotate(-23.7 930.1 314.5)"/><ellipse cx="933.2" cy="313.4" rx="14.9" ry="33.9" transform="rotate(-23.7 933.2 313.4)"/><ellipse cx="936.3" cy="312.3" rx="14.9" ry="33.8" transform="rotate(-23.7 936.3 312.3)"/><ellipse cx="939.3" cy="311.2" rx="14.9" ry="33.8" transform="rotate(-23.7 939.3 311.2)"/><ellipse stroke="#00f0b0" cx="942.4" cy="310.2" rx="14.8" ry="33.7" transform="rotate(-23.7 942.4 310.2)"/><ellipse cx="945.4" cy="309.1" rx="14.8" ry="33.6" transform="rotate(-23.7 945.4 309.1)"/><ellipse cx="948.5" cy="308.0" rx="14.7" ry="33.5" transform="rotate(-23.7 948.5 308.0)"/><ellipse cx="951.5" cy="307.0" rx="14.7" ry="33.4" transform="rotate(-23.7 951.5 307.0)"/><ellipse stroke="#00f0b0" cx="954.5" cy="305.9" rx="14.7" ry="33.3" transform="rotate(-23.7 954.5 305.9)"/><ellipse cx="957.5" cy="304.9" rx="14.6" ry="33.2" transform="rotate(-23.7 957.5 304.9)"/><ellipse cx="960.5" cy="303.8" rx="14.6" ry="33.1" transform="rotate(-23.7 960.5 303.8)"/><ellipse cx="963.5" cy="302.8" rx="14.5" ry="33.0" transform="rotate(-23.7 963.5 302.8)"/><ellipse stroke="#00f0b0" cx="966.5" cy="301.7" rx="14.5" ry="32.9" transform="rotate(-23.7 966.5 301.7)"/><ellipse cx="969.5" cy="300.7" rx="14.5" ry="32.9" transform="rotate(-23.7 969.5 300.7)"/><ellipse cx="972.5" cy="299.6" rx="14.4" ry="32.8" transform="rotate(-23.7 972.5 299.6)"/><ellipse cx="975.5" cy="298.6" rx="14.4" ry="32.7" transform="rotate(-23.7 975.5 298.6)"/><ellipse stroke="#00f0b0" cx="978.4" cy="297.6" rx="14.3" ry="32.6" transform="rotate(-23.7 978.4 297.6)"/><ellipse cx="981.4" cy="296.5" rx="14.3" ry="32.5" transform="rotate(-23.7 981.4 296.5)"/><ellipse cx="984.3" cy="295.5" rx="14.3" ry="32.4" transform="rotate(-23.7 984.3 295.5)"/><ellipse cx="987.3" cy="294.5" rx="14.2" ry="32.3" transform="rotate(-23.7 987.3 294.5)"/><ellipse stroke="#00f0b0" cx="990.2" cy="293.4" rx="14.2" ry="32.2" transform="rotate(-23.7 990.2 293.4)"/><ellipse cx="993.1" cy="292.4" rx="14.1" ry="32.1" transform="rotate(-23.7 993.1 292.4)"/><ellipse cx="996.0" cy="291.4" rx="14.1" ry="32.1" transform="rotate(-23.7 996.0 291.4)"/><ellipse cx="998.9" cy="290.4" rx="14.1" ry="32.0" transform="rotate(-23.7 998.9 290.4)"/><ellipse stroke="#00f0b0" cx="1001.8" cy="289.4" rx="14.0" ry="31.9" transform="rotate(-23.7 1001.8 289.4)"/><ellipse cx="1004.7" cy="288.3" rx="14.0" ry="31.8" transform="rotate(-23.7 1004.7 288.3)"/><ellipse cx="1007.6" cy="287.3" rx="14.0" ry="31.8" transform="rotate(-23.7 1007.6 287.3)"/><ellipse cx="1010.5" cy="286.3" rx="14.0" ry="31.7" transform="rotate(-23.7 1010.5 286.3)"/><ellipse stroke="#00f0b0" cx="1013.4" cy="285.3" rx="13.9" ry="31.7" transform="rotate(-23.7 1013.4 285.3)"/><ellipse cx="1016.2" cy="284.3" rx="13.9" ry="31.6" transform="rotate(-23.7 1016.2 284.3)"/><ellipse cx="1019.1" cy="283.3" rx="13.9" ry="31.6" transform="rotate(-23.7 1019.1 283.3)"/><ellipse cx="1022.0" cy="282.3" rx="13.9" ry="31.5" transform="rotate(-23.7 1022.0 282.3)"/><ellipse stroke="#00f0b0" cx="1024.8" cy="281.3" rx="13.8" ry="31.4" transform="rotate(-23.7 1024.8 281.3)"/><ellipse cx="1027.6" cy="280.3" rx="13.8" ry="31.4" transform="rotate(-23.7 1027.6 280.3)"/><ellipse cx="1030.5" cy="279.3" rx="13.8" ry="31.3" transform="rotate(-23.7 1030.5 279.3)"/><ellipse cx="1033.3" cy="278.3" rx="13.8" ry="31.3" transform="rotate(-23.7 1033.3 278.3)"/><ellipse stroke="#00f0b0" cx="1036.1" cy="277.4" rx="13.7" ry="31.2" transform="rotate(-23.7 1036.1 277.4)"/><ellipse cx="1038.9" cy="276.4" rx="13.7" ry="31.2" transform="rotate(-23.7 1038.9 276.4)"/><ellipse cx="1041.7" cy="275.4" rx="13.7" ry="31.1" transform="rotate(-23.7 1041.7 275.4)"/><ellipse cx="1044.5" cy="274.4" rx="13.7" ry="31.0" transform="rotate(-23.7 1044.5 274.4)"/><ellipse stroke="#00f0b0" cx="1047.3" cy="273.4" rx="13.6" ry="31.0" transform="rotate(-23.7 1047.3 273.4)"/><ellipse cx="1050.1" cy="272.5" rx="13.6" ry="30.9" transform="rotate(-23.7 1050.1 272.5)"/><ellipse cx="1052.9" cy="271.5" rx="13.6" ry="30.9" transform="rotate(-23.7 1052.9 271.5)"/><ellipse cx="1055.6" cy="270.5" rx="13.6" ry="30.8" transform="rotate(-23.7 1055.6 270.5)"/><ellipse stroke="#00f0b0" cx="1058.4" cy="269.6" rx="13.5" ry="30.8" transform="rotate(-23.7 1058.4 269.6)"/><ellipse cx="1061.2" cy="268.6" rx="13.5" ry="30.7" transform="rotate(-23.7 1061.2 268.6)"/><ellipse cx="1063.9" cy="267.6" rx="13.5" ry="30.7" transform="rotate(-23.7 1063.9 267.6)"/><ellipse cx="1066.6" cy="266.7" rx="13.5" ry="30.6" transform="rotate(-23.7 1066.6 266.7)"/><ellipse stroke="#00f0b0" cx="1069.4" cy="265.7" rx="13.4" ry="30.6" transform="rotate(-23.7 1069.4 265.7)"/><ellipse cx="1072.1" cy="264.8" rx="13.4" ry="30.5" transform="rotate(-23.7 1072.1 264.8)"/><ellipse cx="1074.8" cy="263.8" rx="13.4" ry="30.4" transform="rotate(-23.7 1074.8 263.8)"/><ellipse cx="1077.5" cy="262.9" rx="13.4" ry="30.4" transform="rotate(-23.7 1077.5 262.9)"/><ellipse stroke="#00f0b0" cx="1080.2" cy="261.9" rx="13.3" ry="30.3" transform="rotate(-23.7 1080.2 261.9)"/><ellipse cx="1082.9" cy="261.0" rx="13.3" ry="30.3" transform="rotate(-23.7 1082.9 261.0)"/><ellipse cx="1085.6" cy="260.0" rx="13.3" ry="30.2" transform="rotate(-23.7 1085.6 260.0)"/><ellipse cx="1088.3" cy="259.1" rx="13.3" ry="30.2" transform="rotate(-23.7 1088.3 259.1)"/><ellipse stroke="#00f0b0" cx="1091.0" cy="258.2" rx="13.3" ry="30.1" transform="rotate(-23.7 1091.0 258.2)"/><ellipse cx="1093.7" cy="257.2" rx="13.2" ry="30.1" transform="rotate(-23.7 1093.7 257.2)"/><ellipse cx="1096.3" cy="256.3" rx="13.2" ry="30.0" transform="rotate(-23.7 1096.3 256.3)"/><ellipse cx="1099.0" cy="255.4" rx="13.2" ry="30.0" transform="rotate(-23.7 1099.0 255.4)"/><ellipse stroke="#00f0b0" cx="1101.6" cy="254.4" rx="13.2" ry="29.9" transform="rotate(-23.7 1101.6 254.4)"/><ellipse cx="1104.3" cy="253.5" rx="13.1" ry="29.9" transform="rotate(-23.7 1104.3 253.5)"/><ellipse cx="1106.9" cy="252.6" rx="13.1" ry="29.8" transform="rotate(-23.7 1106.9 252.6)"/><ellipse cx="1109.6" cy="251.7" rx="13.1" ry="29.8" transform="rotate(-23.7 1109.6 251.7)"/><ellipse stroke="#00f0b0" cx="1112.2" cy="250.7" rx="13.1" ry="29.7" transform="rotate(-23.7 1112.2 250.7)"/><ellipse cx="1114.8" cy="249.8" rx="13.1" ry="29.7" transform="rotate(-23.7 1114.8 249.8)"/><ellipse cx="1117.4" cy="248.9" rx="13.0" ry="29.7" transform="rotate(-23.7 1117.4 248.9)"/><ellipse cx="1120.0" cy="248.0" rx="13.0" ry="29.6" transform="rotate(-23.7 1120.0 248.0)"/><ellipse stroke="#00f0b0" cx="1122.6" cy="247.1" rx="13.0" ry="29.6" transform="rotate(-23.7 1122.6 247.1)"/><ellipse cx="1125.2" cy="246.2" rx="13.0" ry="29.5" transform="rotate(-23.7 1125.2 246.2)"/><ellipse cx="1127.8" cy="245.3" rx="13.0" ry="29.5" transform="rotate(-23.7 1127.8 245.3)"/><ellipse cx="1130.4" cy="244.4" rx="13.0" ry="29.4" transform="rotate(-23.7 1130.4 244.4)"/><ellipse stroke="#00f0b0" cx="1133.0" cy="243.5" rx="12.9" ry="29.4" transform="rotate(-23.7 1133.0 243.5)"/><ellipse cx="1135.5" cy="242.6" rx="12.9" ry="29.4" transform="rotate(-23.7 1135.5 242.6)"/><ellipse cx="1138.1" cy="241.7" rx="12.9" ry="29.3" transform="rotate(-23.7 1138.1 241.7)"/><ellipse cx="1140.6" cy="240.8" rx="12.9" ry="29.3" transform="rotate(-23.7 1140.6 240.8)"/><ellipse stroke="#00f0b0" cx="1143.2" cy="239.9" rx="12.9" ry="29.2" transform="rotate(-23.7 1143.2 239.9)"/><ellipse cx="1145.7" cy="239.0" rx="12.8" ry="29.2" transform="rotate(-23.7 1145.7 239.0)"/><ellipse cx="1148.3" cy="238.1" rx="12.8" ry="29.1" transform="rotate(-23.7 1148.3 238.1)"/><ellipse cx="1150.8" cy="237.2" rx="12.8" ry="29.1" transform="rotate(-23.7 1150.8 237.2)"/><ellipse stroke="#00f0b0" cx="1153.3" cy="236.3" rx="12.8" ry="29.1" transform="rotate(-23.7 1153.3 236.3)"/><ellipse cx="1155.8" cy="235.5" rx="12.8" ry="29.0" transform="rotate(-23.7 1155.8 235.5)"/><ellipse cx="1158.4" cy="234.6" rx="12.7" ry="29.0" transform="rotate(-23.7 1158.4 234.6)"/><ellipse cx="1160.9" cy="233.7" rx="12.7" ry="28.9" transform="rotate(-23.7 1160.9 233.7)"/><ellipse stroke="#00f0b0" cx="1163.4" cy="232.8" rx="12.7" ry="28.9" transform="rotate(-23.7 1163.4 232.8)"/><ellipse cx="1165.8" cy="232.0" rx="12.7" ry="28.8" transform="rotate(-23.7 1165.8 232.0)"/><ellipse cx="1168.3" cy="231.1" rx="12.7" ry="28.8" transform="rotate(-23.7 1168.3 231.1)"/><ellipse cx="1170.8" cy="230.2" rx="12.7" ry="28.8" transform="rotate(-23.7 1170.8 230.2)"/><ellipse stroke="#00f0b0" cx="1173.3" cy="229.4" rx="12.6" ry="28.7" transform="rotate(-23.7 1173.3 229.4)"/><ellipse cx="1175.7" cy="228.5" rx="12.6" ry="28.7" transform="rotate(-23.7 1175.7 228.5)"/><ellipse cx="1178.2" cy="227.6" rx="12.6" ry="28.6" transform="rotate(-23.7 1178.2 227.6)"/><ellipse cx="1180.7" cy="226.8" rx="12.6" ry="28.6" transform="rotate(-23.7 1180.7 226.8)"/><ellipse stroke="#00f0b0" cx="1183.1" cy="225.9" rx="12.6" ry="28.6" transform="rotate(-23.7 1183.1 225.9)"/><ellipse cx="1185.6" cy="225.1" rx="12.5" ry="28.5" transform="rotate(-23.7 1185.6 225.1)"/><ellipse cx="1188.0" cy="224.2" rx="12.5" ry="28.5" transform="rotate(-23.7 1188.0 224.2)"/><ellipse cx="1190.4" cy="223.4" rx="12.5" ry="28.4" transform="rotate(-23.7 1190.4 223.4)"/><ellipse stroke="#00f0b0" cx="1192.8" cy="222.5" rx="12.5" ry="28.4" transform="rotate(-23.7 1192.8 222.5)"/><ellipse cx="1195.3" cy="221.7" rx="12.5" ry="28.4" transform="rotate(-23.7 1195.3 221.7)"/><ellipse cx="1197.7" cy="220.8" rx="12.5" ry="28.3" transform="rotate(-23.7 1197.7 220.8)"/></g>
<defs><linearGradient id="tg" x1="36" y1="0" x2="1160" y2="0" gradientUnits="userSpaceOnUse"><stop offset="0" stop-color="#20ffa0"/><stop offset="0.5" stop-color="#00ff50"/><stop offset="1" stop-color="#30ffc0"/></linearGradient></defs>
<polyline points="20,594.8 40,583.8 60,572.8 80,564.4 100,557.3 120,550.2 140,543.8 160,538.0 180,532.2 200,526.0 220,519.5 240,512.9 260,506.2 280,499.2 300,492.2 320,485.4 340,478.9 360,472.3 380,465.8 400,458.9 420,452.1 440,445.2 460,438.0 480,430.9 500,423.7 520,416.6 540,409.4 560,402.3 580,395.1 600,388.0 620,381.4 640,374.8 660,368.2 680,361.6 700,355.0 720,348.4 740,341.8 760,335.2 780,328.6 800,322.0 820,315.6 840,309.2 860,302.8 880,296.4 900,290.0 920,283.6 940,277.2 960,270.8 980,264.4 1000,258.0 1020,251.4 1040,244.8 1060,238.2 1080,231.6 1100,225.0 1120,218.3 1140,211.7 1160,205.0 1180,198.3" fill="none" stroke="url(#tg)" stroke-width="4" stroke-opacity="0.9"/>
<polyline points="1180,255.7 1160,263.0 1140,270.3 1120,277.7 1100,285.0 1080,292.4 1060,299.8 1040,307.2 1020,314.6 1000,322.0 980,329.6 960,337.2 940,344.8 920,352.4 900,360.0 880,367.8 860,375.6 840,383.4 820,391.2 800,399.0 780,406.6 760,414.2 740,421.8 720,429.4 700,437.0 680,444.4 660,451.8 640,459.2 620,466.6 600,474.0 580,482.0 560,490.1 540,498.1 520,506.2 500,514.2 480,522.3 460,530.3 440,538.4 420,546.8 400,555.2 380,563.6 360,572.1 340,580.1 320,587.2 300,594.3 280,601.4 260,608.1 240,614.9 220,621.7 200,628.8 180,635.9 160,643.0 140,650.4 120,657.8 100,665.3 80,672.1 60,678.9 40,685.6 20,692.4" fill="none" stroke="#00ff40" stroke-width="4" stroke-opacity="0.8"/>
<path d="M251.0 606.6h2.5M68.1 649.6h1.5M278.8 600.0h2.5M178.6 633.7h2M82.4 668.4h2M75.2 655.4h1.5M454.7 516.3h1.5M419.2 535.8h1.5M66.9 648.8h2M314.3 572.7h2.5M240.8 589.6h1.5M104.4 645.1h1.5M283.3 583.5h1.5M410.7 532.9h2M487.8 507.5h2M345.2 550.3h2M235.0 592.3h2.5M553.8 490.4h2M384.7 536.1h2.5M334.0 563.7h1.5M114.4 646.4h2M136.9 635.9h1.5M674.8 444.4h2.5M416.5 523.3h2M261.8 596.8h2M421.1 533.4h1.5M663.3 438.7h2.5M79.2 648.8h2M465.7 500.6h2M225.0 608.2h2.5M266.4 577.2h2M147.6 643.9h1.5M180.9 626.6h2.5M200.4 616.6h2M89.5 654.3h2.5M220.5 617.3h2M609.7 463.3h2M691.0 423.5h2M671.9 443.6h1.5M136.5 630.6h1.5M358.0 555.3h2M223.2 616.1h2.5M281.2 583.6h1.5M494.5 502.4h2.5M470.9 505.6h2M633.3 441.9h2.5M565.8 477.5h2M297.7 580.4h2M77.3 670.8h1.5M328.6 580.8h2.5M70.9 675.2h1.5M392.3 530.9h2.5M52.9 653.8h2.5M285.8 579.9h2M435.9 526.7h1.5M599.7 448.5h2M355.0 564.8h1.5M103.9 652.7h2M353.8 553.9h2.5M51.3 652.1h2.5M276.2 581.5h1.5M539.4 490.4h2.5M609.2 452.7h2M380.2 536.9h2M548.6 480.6h2.5M254.9 603.0h1.5M571.2 464.1h2.5M569.4 481.1h2M272.1 603.1h1.5M560.6 477.4h1.5M495.8 489.9h2M572.9 466.0h2M670.1 439.0h1.5M103.8 648.6h2M171.7 619.3h2.5M594.0 464.0h2.5M264.4 586.9h2.5M115.6 646.9h2.5M534.1 487.8h1.5M324.1 566.4h1.5M567.7 461.5h2M343.5 556.3h1.5M517.3 502.7h1.5M54.3 662.2h2M571.5 481.6h2.5M686.9 425.6h2M139.5 633.1h1.5M45.5 653.8h2.5M104.2 639.4h1.5M324.0 559.2h1.5M54.6 674.0h2.5M195.7 612.2h2M397.5 532.1h1.5M640.3 450.2h2M475.9 501.6h2.5M315.3 560.8h2.5M122.8 651.9h2.5M48.4 669.1h1.5M440.1 516.7h1.5M150.4 631.5h2.5M115.9 657.4h2.5M380.2 547.3h1.5M622.5 464.2h1.5M219.9 598.1h2.5M336.2 580.6h1.5M330.3 564.9h2.5M438.5 533.4h2M336.4 565.2h2M373.1 559.2h2.5M618.0 443.2h2M648.7 433.5h1.5M593.8 473.0h1.5M296.5 585.9h2.5M195.8 628.0h2.5M237.0 612.2h1.5M659.8 435.7h2M130.9 625.4h2M181.8 605.7h2M623.6 461.1h2.5M588.7 474.3h2M696.1 428.5h2M166.0 630.9h2.5M279.0 591.3h2M328.5 583.7h2M379.6 555.1h1.5M110.9 631.5h1.5M681.2 441.4h2M216.6 595.1h1.5M215.6 619.3h2M600.1 456.5h2M305.5 575.9h2.5M414.9 528.9h1.5M221.3 596.7h1.5M318.4 585.6h1.5M457.3 509.2h1.5M439.8 532.2h2M608.9 459.1h2M696.2 428.1h2M448.8 533.6h2.5M194.3 627.4h1.5M209.9 619.7h2M453.4 518.2h1.5M228.5 603.5h1.5M215.6 598.6h2M60.5 678.1h2.5M401.9 548.9h2M199.1 615.3h2.5M579.8 470.9h2M398.5 530.1h2.5M240.4 608.2h1.5M263.6 581.5h2.5M520.0 502.5h2M688.0 420.7h1.5M83.0 647.1h2M322.0 584.8h2.5M594.6 453.6h2.5M680.7 429.3h2.5M230.6 604.0h1.5M214.6 623.5h2M674.6 422.2h2.5M250.8 610.2h2M180.7 630.0h2M289.4 583.5h2.5M471.6 518.8h1.5M96.3 640.1h1.5M301.3 592.6h1.5M235.0 597.3h1.5M424.8 529.7h1.5M472.6 505.6h2.5M294.6 586.2h2M135.2 628.9h2.5M132.1 626.8h2.5M628.2 447.6h2.5M501.5 499.9h2.5M535.9 484.6h1.5M584.7 465.0h2.5M489.4 499.6h1.5M92.5 666.5h2.5M275.5 599.7h2M406.9 534.3h2.5M388.9 552.8h2M38.2 662.0h2.5M655.2 431.0h1.5M473.8 523.0h2.5M350.6 551.6h2M191.9 608.3h1.5M527.2 477.1h2M597.4 473.1h2.5M226.8 617.9h2.5M462.8 527.1h1.5M256.3 589.5h2.5M238.1 598.2h1.5M356.3 559.1h2.5M102.1 657.4h2M229.1 602.8h2M345.4 555.0h2.5M168.3 609.4h2M47.6 668.8h2.5M678.8 433.7h2M292.9 568.8h1.5M85.5 667.3h2.5M384.0 534.1h1.5M436.6 522.1h2M624.9 446.9h1.5M366.6 543.3h2M52.5 681.3h2M488.6 507.8h2.5M129.4 643.3h2M116.3 648.5h2M534.5 478.0h1.5M660.1 446.9h1.5M634.6 453.8h2M79.1 659.8h2.5M86.7 639.9h2M603.2 465.6h1.5M590.2 470.5h1.5M201.6 620.1h2.5M245.6 589.4h2M623.2 444.7h2.5M301.6 566.9h2.5M400.7 534.1h1.5M655.8 443.0h2.5M535.8 482.7h2M358.4 545.4h2.5M120.5 642.4h2M223.1 612.8h2.5M684.3 436.4h2.5M194.5 615.9h2.5M297.9 590.0h1.5M85.9 653.9h2M401.5 541.5h2M697.7 426.8h1.5M399.7 548.3h1.5M263.1 604.3h1.5M280.6 576.4h1.5M625.1 445.6h2M290.2 574.9h1.5M286.2 588.8h1.5M366.8 552.2h2M119.6 641.7h2.5M560.8 467.4h1.5M216.0 615.5h2M464.8 516.5h2M599.5 451.7h1.5M120.5 643.9h2M678.9 432.6h1.5M296.0 567.4h2.5M604.0 447.5h1.5M556.0 485.8h1.5M382.9 542.5h2.5M501.5 490.7h2M92.4 642.7h1.5M555.4 485.8h1.5M464.6 520.1h1.5M452.0 518.9h2M499.9 511.3h1.5M235.4 587.6h1.5M293.7 589.7h2.5M36.8 670.4h2M221.0 611.7h1.5M351.6 568.6h1.5M55.4 667.4h2.5M240.1 614.2h2M623.5 448.8h1.5M206.8 605.8h2M186.6 632.5h2M513.0 499.2h2M167.5 615.3h2.5M597.2 473.4h2M680.0 436.7h1.5M189.3 625.8h2M108.4 642.0h2.5M160.4 635.8h2M640.5 457.6h2.5M133.2 640.3h1.5M51.7 663.0h2M70.4 673.4h2M334.6 560.4h2M522.5 478.4h1.5M254.6 604.3h2.5M531.5 500.7h2.5M517.7 484.6h2M329.8 580.4h1.5M221.8 610.3h1.5M408.6 529.8h2M272.8 578.6h2M94.3 644.4h1.5M283.5 572.0h1.5M250.7 588.7h2M56.1 667.2h2.5M545.1 495.0h1.5M344.1 554.3h1.5M206.7 603.4h2.5M261.1 599.4h2.5M64.9 653.2h2.5M246.1 604.4h1.5M515.1 492.1h2.5M664.5 448.5h1.5M107.2 639.4h2M669.4 438.7h2M642.6 437.6h1.5M652.3 450.1h2.5M237.4 594.6h1.5M439.2 529.5h2M342.0 555.6h2.5M88.5 662.8h1.5M200.2 626.7h1.5M355.8 557.5h1.5M686.9 420.0h1.5M211.9 622.0h1.5M315.6 558.6h2M151.0 642.1h2M447.9 516.4h2.5M393.6 535.4h1.5M553.8 484.8h2M412.4 539.3h2.5M208.9 612.1h1.5M198.9 624.5h2.5M161.0 640.6h2M695.0 426.3h1.5M467.4 524.6h2M694.0 436.7h2M622.2 459.9h2M643.1 457.0h2M190.6 630.6h2.5M682.0 429.2h1.5M283.2 573.7h2M436.4 518.1h2.5M663.9 447.7h2.5M507.2 501.9h1.5M280.8 596.7h1.5M699.9 436.1h2.5M468.7 521.2h1.5M579.7 471.5h2M158.9 633.6h1.5M56.9 664.3h2M78.0 669.5h2M476.9 519.3h2.5M96.5 661.2h2.5M216.1 592.8h2.5M240.2 585.6h2M530.9 478.2h2M312.5 563.4h2M463.9 518.0h2M171.2 638.8h1.5M317.4 563.1h2M419.7 536.5h1.5M122.3 655.3h1.5M461.4 504.6h1.5M416.4 521.9h2.5M371.0 563.1h2M143.4 643.7h1.5M108.2 646.3h1.5M236.3 590.5h1.5M683.8 431.0h1.5M439.5 520.8h1.5M636.4 444.8h1.5M461.2 506.2h2.5M304.6 566.8h2M157.5 637.0h2M659.2 448.2h2M117.7 650.7h2.5M577.6 478.0h2.5M595.4 458.5h2.5M592.6 473.9h2.5M338.6 554.8h2M467.0 519.0h1.5M318.7 567.6h2M370.4 562.4h1.5M446.9 522.0h1.5M332.7 563.9h2M591.5 456.4h2M107.1 658.5h2M278.6 577.3h2.5M374.7 564.7h2.5M122.5 627.1h2M552.4 479.6h1.5M535.4 476.1h2.5M667.4 445.7h1.5M697.4 419.9h1.5M164.6 610.5h2M227.2 594.4h1.5M491.6 498.0h1.5M79.5 660.9h2M141.4 621.2h2M637.0 448.8h2M369.5 540.8h1.5M429.0 525.6h1.5M247.9 611.1h1.5M303.9 573.4h2M487.3 494.9h1.5M562.0 482.3h2.5M68.3 648.4h2M404.6 536.6h1.5M203.3 611.1h2M526.0 493.8h2M693.7 425.1h2M255.7 607.1h1.5M153.4 621.9h1.5M232.8 601.5h2M460.5 502.9h2.5M652.5 432.0h2.5M37.2 685.6h1.5M229.2 599.4h2M376.4 538.8h1.5M360.3 553.6h1.5M50.8 681.9h2M237.7 599.7h2.5M184.9 616.1h2.5M124.8 644.2h2M141.3 649.5h1.5M505.8 499.7h1.5M459.8 506.3h2M302.9 585.2h1.5M73.3 647.9h2M430.9 525.9h2.5M658.3 434.0h1.5M145.6 648.3h1.5M388.9 548.0h1.5M141.7 620.7h1.5M44.2 667.2h1.5M130.5 647.5h2.5M462.7 511.3h2M576.1 479.1h2M78.3 652.4h2.5M555.9 472.9h1.5M285.1 586.2h2M89.4 647.7h1.5M186.0 630.5h1.5M463.6 525.5h2.5M650.3 431.6h2M508.6 503.6h2.5M487.0 500.7h2.5M681.3 436.6h1.5M92.7 651.4h1.5M208.9 618.4h2.5M170.6 634.2h2M163.4 629.6h2.5M194.8 602.6h2.5M648.0 431.5h2.5M347.7 551.8h2.5M40.2 684.8h2.5M191.3 604.6h1.5M296.0 577.8h2.5M640.8 455.3h1.5M110.3 641.3h1.5M265.0 602.1h1.5M56.5 675.7h2.5M456.9 512.3h2.5M67.0 648.9h2M168.3 610.1h2.5M627.8 462.0h2.5M663.0 448.0h1.5M170.9 638.1h2.5M94.1 643.0h2.5M226.8 616.3h1.5M561.9 472.3h2M247.9 599.3h1.5M269.0 576.6h1.5M511.3 499.8h2M546.8 479.5h2M601.3 457.6h1.5M559.9 489.3h2.5M549.3 485.2h2.5M67.9 657.9h2.5M608.5 468.5h2M149.1 647.0h1.5M227.5 596.2h1.5M38.9 671.1h2M497.6 492.8h2M429.5 515.8h2.5M209.0 596.6h2M577.3 458.6h1.5M366.9 565.9h2.5M545.2 483.1h2.5M408.7 548.5h2M272.1 591.7h2M628.2 444.6h2M625.9 463.8h1.5M237.3 602.7h2.5M368.8 557.1h2.5M191.1 617.7h2.5M430.5 522.9h2.5M465.1 518.6h2M382.4 537.2h2M475.6 503.7h1.5M343.5 558.0h2M420.6 542.9h2M462.8 510.0h2.5M163.2 632.4h2.5M584.8 464.1h2.5M139.6 642.7h2M436.3 530.1h1.5M253.8 604.4h2.5M696.6 434.2h2.5M103.5 651.5h1.5M563.8 469.3h2M217.8 619.1h1.5M222.5 593.7h2M58.5 666.7h2M496.4 502.1h2.5M232.7 616.7h2M436.9 528.3h2.5M196.9 603.6h2.5M417.1 526.6h2M597.7 457.7h2.5M620.4 446.7h2.5M423.6 538.8h1.5M462.0 517.0h2M208.5 604.2h2M197.0 617.5h2.5M454.1 525.8h2M356.5 573.0h2M380.1 544.2h1.5M629.9 454.6h1.5M294.1 581.4h1.5M61.3 661.1h1.5M511.6 483.9h1.5M380.8 560.4h2.5M339.3 574.1h2M376.1 546.5h2M382.4 550.6h2M175.5 616.1h2M377.2 537.4h2.5M689.7 432.0h1.5M203.6 615.8h1.5M44.8 671.1h2M453.4 514.3h2.5M212.1 617.6h2.5M301.9 564.4h1.5M696.2 414.7h2M176.8 633.0h1.5M573.6 468.1h2M462.4 509.4h1.5M270.5 585.0h2M346.8 568.7h2.5M467.3 505.9h2M271.6 578.2h2M503.6 494.2h2M486.7 506.4h2.5M566.5 478.1h2.5M236.4 601.4h2M449.9 532.0h2M137.4 641.7h2M73.9 647.4h2M556.6 487.8h2M456.4 531.4h1.5M175.3 635.3h2M202.0 625.0h1.5M603.2 468.0h2M266.0 601.4h2M561.7 485.0h2.5M440.0 516.6h2.5M634.7 447.2h2.5M593.0 471.7h2.5M177.5 634.3h2M481.7 518.4h1.5M211.6 617.5h1.5M350.2 559.4h2M346.2 573.6h2M199.7 623.8h2.5M609.0 470.5h2M346.7 560.6h2.5M233.1 603.0h2M314.1 559.9h1.5M155.9 633.1h2.5M54.9 661.4h2.5M525.1 477.4h1.5M375.1 551.4h1.5M58.5 656.6h2.5M120.3 654.7h2.5M279.1 587.1h2.5M403.9 527.3h2M325.0 572.6h2.5M71.0 665.8h2M585.6 469.3h2.5M689.6 419.3h2M683.4 426.9h1.5M255.7 599.9h2M120.7 626.2h1.5M556.7 490.4h2.5M404.1 541.8h2.5M69.0 666.1h1.5M66.8 650.1h2M440.2 519.9h2.5M640.1 443.7h2.5M133.6 631.1h2.5M431.9 522.6h1.5M62.2 657.9h2.5M542.4 494.5h1.5M613.2 458.3h1.5M643.0 441.5h2M615.0 464.9h2M409.2 543.9h2M158.7 642.4h1.5M322.0 566.9h1.5M366.5 553.8h1.5M549.8 483.1h2.5M646.0 445.7h1.5M487.5 503.1h2.5M687.2 430.0h2M400.4 552.6h2M177.0 632.3h1.5M319.5 587.1h2.5M116.8 627.8h1.5M180.9 631.8h2M47.8 660.7h1.5M335.3 559.2h1.5M278.9 578.8h2.5M604.0 453.7h1.5M230.6 601.0h2M341.8 551.2h2M642.6 456.9h1.5M43.6 684.0h2.5M491.9 500.6h2M242.5 591.7h1.5M671.9 426.6h2.5M75.7 661.7h2.5M519.2 493.9h1.5M132.2 627.7h2M669.4 444.2h2M352.7 551.7h2M663.4 430.9h2.5M257.7 600.3h2.5M682.7 426.0h2.5M256.5 590.8h1.5M588.0 463.2h2M424.2 517.3h1.5M286.1 578.3h2.5M548.2 488.6h2M224.1 620.2h2M214.0 619.0h1.5M227.6 614.8h2.5M133.6 621.4h2.5M490.6 493.1h2M390.9 543.3h2M565.5 482.6h2.5M654.7 447.9h2.5M74.2 661.3h2.5M173.2 630.4h1.5M561.7 477.3h1.5M392.0 548.3h1.5M190.6 614.2h2M623.7 451.9h2M372.1 561.0h1.5M163.7 636.0h2.5M228.4 601.1h2M303.3 577.3h1.5M199.5 600.5h2M284.4 596.6h2.5M343.7 576.3h2M432.5 531.8h2.5M439.1 536.1h1.5M693.6 418.0h2M425.6 538.4h2M318.8 558.7h2.5M579.7 457.0h2M596.2 466.8h1.5M287.1 598.0h1.5M406.1 527.6h2M359.3 547.1h1.5M609.0 454.2h1.5M505.0 509.8h2M410.8 532.3h2.5M372.3 561.5h1.5M282.3 593.4h2.5M183.2 633.6h2M660.9 450.0h2.5M636.6 439.2h1.5M207.2 610.4h2.5M465.4 500.9h1.5M103.1 653.8h1.5M659.7 434.9h2M427.6 531.1h2.5M106.0 652.6h2M295.0 584.6h2M147.9 639.9h1.5M643.1 435.5h2M512.2 504.1h1.5M140.2 623.7h1.5M656.2 431.4h2.5M128.8 640.1h1.5M650.8 445.5h1.5M453.2 520.5h2M250.2 604.3h1.5M453.1 529.1h1.5M524.7 499.5h2M403.4 549.6h1.5M212.9 611.6h1.5M52.9 663.4h2M258.1 603.6h2M108.5 647.3h2M111.8 629.2h1.5M455.0 510.5h1.5M407.8 527.9h1.5M207.2 620.1h2M322.9 578.2h1.5M650.3 452.9h2M312.0 585.1h2.5M685.7 438.7h2.5M46.6 658.4h2M375.2 552.6h2.5M226.2 608.6h1.5M641.6 453.1h2.5M156.0 617.8h2.5M547.6 476.2h1.5M434.8 517.2h2.5M521.3 485.2h1.5M172.8 619.3h2.5M453.3 527.7h2M170.3 637.3h2.5M381.0 538.6h1.5M380.3 553.3h2M595.0 453.6h2M96.0 653.4h2M124.5 634.7h1.5M159.5 617.0h2M60.3 656.4h2.5M431.0 542.0h2.5M654.9 429.3h1.5M116.2 636.2h2M553.3 469.8h2.5M534.9 498.6h1.5M669.5 435.9h2.5M53.0 656.0h1.5M49.7 652.2h1.5M447.1 530.9h2M202.3 602.8h1.5M48.9 653.8h2.5M165.5 640.5h2.5M458.9 517.9h1.5M502.6 510.4h1.5M512.2 508.1h1.5M344.7 560.7h2M109.1 658.0h1.5M395.6 550.5h1.5M133.8 634.3h2.5M299.4 565.5h1.5M658.6 442.6h2M432.4 524.6h1.5M298.7 566.0h2M260.8 600.5h2M511.1 487.0h2.5M570.1 462.1h2M598.8 473.1h2.5M133.4 631.0h2M201.5 615.3h2.5M43.7 681.0h1.5M82.0 657.4h2.5M480.3 516.0h2M679.9 425.2h2M456.5 509.3h1.5M58.8 658.9h2M645.5 441.4h2.5M396.1 530.1h2.5M102.7 660.3h1.5M324.0 556.8h2M111.1 649.9h1.5M115.9 640.1h2.5M634.5 459.1h2.5M390.5 554.9h1.5M375.7 539.4h2M419.4 539.2h2.5M94.3 649.6h2M441.0 522.0h2.5M292.7 580.1h2M342.0 562.8h2.5M353.3 550.3h1.5M196.9 623.1h2.5M398.5 527.8h2M43.9 673.5h1.5M251.1 601.2h2M225.1 589.7h2M73.8 673.5h2.5M80.4 643.8h2M472.7 511.0h2M271.1 581.0h2.5M185.5 604.2h2.5M656.1 442.8h2.5M270.0 584.1h2.5M441.5 530.0h2.5M99.1 637.8h2M214.4 604.3h2.5M643.4 454.7h1.5M38.9 662.7h2.5M114.0 647.2h2.5M135.4 624.9h2M615.5 452.7h2M601.5 455.6h2M516.1 499.9h2M385.3 544.0h2.5M249.8 587.5h2M288.8 589.1h2.5M237.9 611.2h2.5M286.3 592.1h2M251.0 585.4h1.5M672.6 442.0h2M627.8 439.4h1.5M67.5 658.1h2M235.1 600.1h2M393.6 528.9h2.5M584.2 461.4h2M294.6 585.3h2.5M485.0 507.9h1.5M485.2 505.8h1.5M307.9 576.2h2.5M408.7 535.1h1.5M676.4 433.6h2M545.5 472.1h2.5M263.9 590.6h1.5M149.4 636.8h1.5M584.5 466.9h1.5M471.5 517.6h2M580.8 455.9h2M455.1 517.8h2.5M174.0 610.1h2M157.1 624.2h2.5M106.8 644.3h2.5M458.6 529.7h2M43.1 684.5h2.5M494.6 516.3h2M300.0 591.3h1.5M479.6 517.1h2M546.6 480.5h2.5M630.7 449.6h1.5M417.4 536.1h1.5M132.5 636.5h2.5M106.8 659.5h1.5M665.4 437.5h2M443.0 514.6h1.5M467.7 508.4h2.5M250.4 589.5h2M218.9 621.1h2.5M102.0 635.2h2.5M77.8 666.6h2.5M292.1 595.5h2M422.9 518.3h2M72.2 667.0h1.5M65.2 647.2h1.5M245.0 585.7h2M237.6 597.3h2M686.4 440.4h2.5M294.8 574.1h1.5M310.6 578.4h2.5M357.6 549.3h1.5M94.1 661.8h2M159.9 612.4h2M299.0 583.6h2M390.4 548.0h2M468.5 500.4h2M584.3 471.2h1.5M293.2 582.4h2M193.5 630.0h2.5M52.8 656.1h1.5M504.7 509.8h2M397.8 533.3h2.5M330.4 558.1h1.5M141.7 638.5h2.5M305.0 573.3h2.5M174.2 608.3h2.5M171.8 612.0h2.5M122.9 633.9h2M431.7 529.4h2M391.0 547.2h2.5M177.1 609.7h1.5M486.1 517.3h2M524.7 483.8h1.5M472.6 509.6h2M46.0 661.6h2.5M153.6 618.5h2M161.0 614.6h1.5M409.2 541.0h2.5M539.6 493.2h2.5M242.7 607.1h1.5M578.4 472.3h2M303.8 565.1h2.5M622.1 443.8h1.5M658.0 448.1h2M487.3 501.2h2M631.6 461.7h2.5M500.3 507.4h2M269.8 585.6h1.5M229.5 610.1h2.5M523.4 485.7h1.5M304.7 574.0h2M167.5 630.8h2M526.2 488.9h2.5M459.8 525.4h1.5M414.6 528.6h2M650.7 438.4h2.5M267.8 605.5h2.5M226.1 618.3h2.5M439.3 537.3h1.5M488.2 518.0h2M175.5 609.0h2.5M642.7 447.7h2.5M297.4 572.4h1.5M222.7 618.0h2M329.9 573.4h2.5M526.4 481.4h2.5" stroke="#30e0e0" stroke-width="1.3" opacity="0.8"/>
</g>
<path d="M149 648 L168 620" stroke="#ff1010" stroke-width="3"/><path d="M149 648 L170 640" stroke="#1010d0" stroke-width="1.5"/>
<text x="166" y="624" font-size="9" fill="#ff4040" font-family="Liberation Sans">X</text><text x="171" y="636" font-size="9" fill="#ffffff" font-family="Liberation Sans">Z</text>
</svg><!--/PIPE-->
<div class="a" style="left:1160px;top:166px;width:50px;height:537px;background:#333"></div>
<!--T3D-->
<svg class="a" style="left:1160px;top:166px" width="50" height="420" viewBox="1160 166 50 420">
 <g fill="none" stroke="#c8c8cc" stroke-width="2" stroke-linecap="round" stroke-linejoin="round">
  <ellipse cx="1187" cy="189" rx="5" ry="13"/>
  <path d="M1181 183.5 C1176 184.5 1173 186.5 1173 189 C1173 192.5 1179.5 195.5 1187 195.5 C1194.5 195.5 1201 192.5 1201 189 C1201 187 1199 185.5 1196 184.5"/>
  <path d="M1188.5 181 L1191.5 186.5 L1194 181"/><path d="M1183 186 L1178.5 183.5 L1183 180.5"/>
  <circle cx="1183.8" cy="231.5" r="9.5" stroke-width="2.6"/><path d="M1190.5 238.5 L1199 247" stroke-width="3.6"/>
  <path d="M1182 459 L1169.5 465 V478 L1184 485 L1198.5 478 V465 L1186 459 M1169.5 465 L1184 472 L1198.5 465 M1184 472 V485" stroke-width="1.8"/>
  <path d="M1177.2 426.5 L1192.9 410.9" stroke-width="1.8"/>
  <circle cx="1174.7" cy="429" r="3.5" stroke-width="1.8"/><circle cx="1195.4" cy="408.4" r="3.5" stroke-width="1.8"/>
  <path d="M1178 512 C1173 512 1172 519 1177 519 H1190 C1195 519 1195 524 1190 524 H1185" stroke-width="1.8"/>
  <path d="M1173 548 A10.5 10.5 0 0 0 1186.5 560.5 L1194.5 569 A3 3 0 0 0 1199 564.5 L1190.5 556 A10.5 10.5 0 0 0 1178 543 L1182.5 549.5 L1179 553.5 Z" stroke-width="1.9"/>
 </g>
 <g fill="#c8c8cc">
  <path d="M1186.5 266 C1178 266 1172 272 1172 280 C1172 289 1178 294.5 1184 294.5 C1187 294.5 1186 291 1186 289 C1186 287 1188 286 1191 286 C1197 286 1201 283 1201 278 C1201 271 1195 266 1186.5 266Z"/>
  <path d="M1180 312 H1195 A7 7 0 0 1 1200.5 323 L1193 336 A12 12 0 0 1 1181 340 A12 12 0 0 1 1174 318Z"/>
  <path d="M1184.5 494 C1179 494 1175.5 498 1175.5 503 C1175.5 509 1184.5 517 1184.5 517 C1184.5 517 1193.5 509 1193.5 503 C1193.5 498 1190 494 1184.5 494Z"/>
  <path d="M1179.5 453 L1184 448 L1188.5 453 H1186 V459 H1182 V453Z"/>
  <path d="M1162 205 L1170 212 H1162Z M1162 251 L1170 258 H1162Z M1162 297 L1170 304 H1162Z M1162 343 L1170 350 H1162Z"/>
 </g>
 <g fill="#333">
  <circle cx="1179" cy="274" r="2.3"/><circle cx="1186" cy="271.5" r="2.3"/><circle cx="1193" cy="274" r="2.3"/><circle cx="1195" cy="280.5" r="2.3"/>
  <circle cx="1184.5" cy="503" r="2.8"/>
 </g>
 <circle cx="1183" cy="327" r="10.5" fill="#c8c8cc" stroke="#333" stroke-width="1.5"/>
 <circle cx="1183" cy="327" r="8" fill="#c8c8cc" stroke="#333" stroke-width="1.2"/>
 <path d="M1174.5 387 V358.5 H1196 L1189.5 366 L1196 373.5 H1174.5" fill="none" stroke="#1a80f0" stroke-width="2.2" stroke-linejoin="miter"/>
</svg>
<!--/T3D-->

<!-- ===== profile panel ===== -->
<div class="a pnl" style="left:1216px;top:125px;width:589px;height:579px;background:#fff"></div>
<div class="a ttl" style="left:1217px;top:126px;width:587px;height:40px"></div>
<div class="a acc" style="left:1224px;top:136px"></div>
<div class="a pt" style="left:1241px;top:137px">管道断面轮廓图</div>

<svg class="a" style="left:1217px;top:166px" width="537" height="529" viewBox="1217 166 537 529">
 <g fill="none" stroke="#c8c8c8" stroke-width="1">
  <circle cx="1485" cy="434" r="82"/><circle cx="1485" cy="434" r="164"/><circle cx="1485" cy="434" r="246"/><circle cx="1485" cy="434" r="328"/>
  <path d="M1217 434.5 H1754 M1485.5 166 V695 M1185 134 L1785 734 M1185 734 L1785 134"/>
 </g>
 <g font-family="Liberation Sans" font-size="14.5" fill="#b4b4b4" letter-spacing="0.5">
  <text x="1241" y="449">609mm</text><text x="1323" y="449">406mm</text><text x="1405" y="449">203mm</text>
  <text x="1540" y="449">203mm</text><text x="1621" y="449">406mm</text><text x="1704" y="449">609mm</text>
  <text x="1488" y="204">609mm</text><text x="1488" y="285">406mm</text><text x="1488" y="367">203mm</text>
  <text x="1488" y="512">203mm</text><text x="1488" y="593">406mm</text><text x="1488" y="675">609mm</text>
 </g>
 <circle cx="1477.5" cy="389" r="195.3" fill="none" stroke="#0000e8" stroke-width="1.2"/>
 <circle cx="1477.5" cy="389" r="1.8" fill="#0000e8"/>
 <path d="M1471 213.7 C1483.0 212.3 1478.5 213.5 1485.0 213.5 C1491.5 213.5 1497.8 211.8 1510.0 213.7 C1522.2 215.6 1542.7 219.9 1558.0 225.0 C1573.3 230.1 1589.0 236.0 1602.0 244.0 C1615.0 252.0 1625.8 262.8 1636.0 273.0 C1646.2 283.2 1655.7 293.8 1663.0 305.0 C1670.3 316.2 1675.7 326.5 1680.0 340.0 C1684.3 353.5 1687.5 374.8 1689.0 386.0 C1690.5 397.2 1689.5 399.2 1689.0 407.0 C1688.5 414.8 1687.7 424.2 1686.0 433.0 C1684.3 441.8 1682.3 451.3 1679.0 460.0 C1675.7 468.7 1670.2 478.3 1666.0 485.0 C1661.8 491.7 1658.3 494.5 1654.0 500.0 C1649.7 505.5 1642.3 515.0 1640.0 518.0 L1629.6 523.0 L1619.8 526.2 L1611.3 529.8 L1605.7 533.7 L1601.4 535.3 L1596.1 533.5 L1589.5 539.1 L1582.5 542.0 L1575.5 541.3 L1567.5 540.3 L1560.7 542.8 L1556.4 549.9 L1551.6 557.0 L1548.2 563.4 L1543.0 560.2 L1538.0 558.0 L1534.7 562.4 L1528.1 557.5 L1521.7 556.2 L1514.6 558.8 L1508.0 559.8 L1500.2 561.8 L1493.5 562.5 L1484.5 561.9 L1476.3 561.3 L1469.6 560.1 L1464.0 562.6 L1460.8 567.3 L1456.9 569.3 L1452.2 565.5 L1447.8 563.6 L1439.7 561.1 L1432.6 558.0 L1423.3 556.3 L1416.4 556.3 L1407.6 556.6 L1399.5 556.9 L1391.3 556.5 L1383.6 554.1 L1375.4 551.1 L1363.2 546.0 C1359.5 544.5 1353.3 541.1 1348.0 538.0 C1342.7 534.9 1339.2 534.3 1332.0 527.6 C1324.8 520.9 1313.7 508.9 1305.0 498.0 C1296.3 487.1 1286.2 473.8 1280.0 462.5 C1273.8 451.2 1270.7 441.8 1268.0 430.0 C1265.3 418.2 1263.8 405.3 1264.0 392.0 C1264.2 378.7 1264.7 364.3 1269.0 350.0 C1273.3 335.7 1280.5 319.8 1290.0 306.0 C1299.5 292.2 1312.7 279.2 1326.0 267.5 C1339.3 255.8 1355.5 243.1 1370.0 235.5 C1384.5 227.9 1396.2 225.6 1413.0 222.0 C1429.8 218.4 1461.3 215.1 1471.0 213.7Z" fill="none" stroke="#ff0000" stroke-width="2.8" stroke-linejoin="round"/>
</svg>
<div class="a bl" style="left:1223px;top:170px">变形率：14.5%</div>
<div class="a" style="left:1223px;top:197px;color:#ff0000;font-size:19.5px;line-height:24px;letter-spacing:0.9px">263/815</div>
<div class="a bl" style="left:1613px;top:170px">距离：12.613m<br>直径：964mm<br>轮廓周长：3.299m<br>周长占比：105.0%</div>
<div class="a bl" style="left:1223px;top:637px">沉积宽：419mm<br>沉积高：46mm<br>翻滚角：0.2°</div>
<div class="a bl" style="left:1560px;top:656px">过水断面面积：7305.5cm²<br>过水断面损失率：7.0%</div>
<div class="a" style="left:1754px;top:166px;width:50px;height:537px;background:#efefef"></div>
<!--PTOOLS-->
<svg class="a" style="left:1754px;top:166px" width="50" height="230" viewBox="1754 166 50 230">
 <path d="M1781 173 L1786.5 179.5 H1783 V185.5 H1789 V182 L1796 188 L1789 194 V190.5 H1783 V196.5 H1786.5 L1781 203 L1775.5 196.5 H1779 V190.5 H1773 V194 L1766 188 L1773 182 V185.5 H1779 V179.5 H1775.5Z" fill="#222"/>
 <g fill="none" stroke="#222" stroke-linecap="round">
  <circle cx="1777.5" cy="231" r="9" stroke-width="3.2"/><path d="M1784.5 238 L1794 247.5" stroke-width="4.2"/>
  <path d="M1781 268.5 H1768 A3 3 0 0 0 1765 271.5 V291.5 A3 3 0 0 0 1768 294.5 H1788 A3 3 0 0 0 1791 291.5 V280" stroke-width="2.6"/>
 </g>
 <path d="M1792.5 264.5 L1797.5 269.5 L1782 285 L1775.5 286.5 L1777 280Z" fill="#222"/>
 <path d="M1755.5 203.5 L1764 211.5 H1755.5Z M1755.5 249.5 L1764 257.5 H1755.5Z" fill="#111"/>
 <g fill="none" stroke="#c8c8c8" stroke-width="1.8">
  <circle cx="1779" cy="327" r="12.5"/><circle cx="1779" cy="327" r="4"/><path d="M1779 307 V315 M1779 339 V347 M1759 327 H1767 M1791 327 H1799"/>
  <circle cx="1779" cy="373" r="15"/><path d="M1784 365 H1790 V371 M1768 375 V381 H1774" stroke-width="1.5"/>
 </g>
</svg>
<!--/PTOOLS-->
<div class="a" style="left:1217px;top:695px;width:537px;height:8px;background:#808080"></div>
<div class="a" style="left:1218px;top:695px;width:179px;height:8px;background:#0000f0;border-radius:4px"></div>

<!-- ===== colormap panel ===== -->
<div class="a pnl" style="left:35px;top:709px;width:1176px;height:312px;background:#fff"></div>
<div class="a ttl" style="left:36px;top:710px;width:1174px;height:38px"></div>
<div class="a" style="left:1160px;top:748px;width:50px;height:272px;background:#efefef"></div>
<!--CMAP--><!--HEAT--><svg class="a" style="left:36px;top:748px" width="1124" height="272" viewBox="36 748 1124 272" shape-rendering="crispEdges">
<rect x="67" y="750" width="1037" height="240" fill="#00ffc0"/>
<path fill="#00f000" d="M67 750h4v2h-4zM79 750h8v2h-8zM99 750h8v2h-8zM67 752h8v2h-8zM79 752h16v2h-16zM99 752h8v2h-8zM111 752h4v2h-4zM67 754h48v2h-48zM67 756h56v2h-56zM67 758h56v2h-56zM67 760h56v2h-56zM67 762h56v2h-56zM67 764h60v2h-60zM67 766h60v2h-60zM67 768h60v2h-60zM67 770h60v2h-60zM67 772h64v2h-64zM67 774h64v2h-64zM67 776h64v2h-64zM67 778h64v2h-64zM67 780h64v2h-64zM67 782h64v2h-64zM67 784h64v2h-64zM139 784h8v2h-8zM179 784h4v2h-4zM695 784h4v2h-4zM983 784h4v2h-4zM67 786h84v2h-84zM155 786h4v2h-4zM179 786h4v2h-4zM187 786h4v2h-4zM195 786h4v2h-4zM695 786h4v2h-4zM707 786h4v2h-4zM715 786h4v2h-4zM735 786h4v2h-4zM743 786h4v2h-4zM751 786h4v2h-4zM835 786h4v2h-4zM871 786h12v2h-12zM915 786h4v2h-4zM943 786h4v2h-4zM975 786h4v2h-4zM983 786h4v2h-4zM67 788h100v2h-100zM175 788h8v2h-8zM187 788h12v2h-12zM203 788h4v2h-4zM223 788h4v2h-4zM595 788h4v2h-4zM651 788h4v2h-4zM667 788h8v2h-8zM691 788h8v2h-8zM707 788h4v2h-4zM715 788h4v2h-4zM735 788h4v2h-4zM743 788h4v2h-4zM751 788h8v2h-8zM767 788h8v2h-8zM783 788h8v2h-8zM795 788h4v2h-4zM823 788h4v2h-4zM831 788h8v2h-8zM859 788h4v2h-4zM867 788h16v2h-16zM891 788h4v2h-4zM911 788h8v2h-8zM923 788h4v2h-4zM943 788h4v2h-4zM951 788h12v2h-12zM975 788h12v2h-12zM995 788h4v2h-4zM1011 788h12v2h-12zM1055 788h8v2h-8zM1087 788h4v2h-4zM1099 788h5v2h-5zM67 790h144v2h-144zM215 790h4v2h-4zM223 790h8v2h-8zM235 790h4v2h-4zM247 790h4v2h-4zM255 790h4v2h-4zM595 790h16v2h-16zM615 790h4v2h-4zM623 790h12v2h-12zM643 790h12v2h-12zM663 790h20v2h-20zM687 790h12v2h-12zM703 790h16v2h-16zM727 790h32v2h-32zM767 790h8v2h-8zM783 790h20v2h-20zM815 790h24v2h-24zM855 790h40v2h-40zM899 790h8v2h-8zM911 790h16v2h-16zM931 790h4v2h-4zM939 790h28v2h-28zM975 790h32v2h-32zM1011 790h12v2h-12zM1031 790h32v2h-32zM1067 790h37v2h-37zM67 792h144v2h-144zM215 792h44v2h-44zM263 792h4v2h-4zM271 792h4v2h-4zM279 792h4v2h-4zM303 792h4v2h-4zM595 792h60v2h-60zM659 792h24v2h-24zM687 792h32v2h-32zM723 792h40v2h-40zM767 792h36v2h-36zM807 792h4v2h-4zM815 792h24v2h-24zM851 792h172v2h-172zM1027 792h36v2h-36zM1067 792h37v2h-37zM67 794h144v2h-144zM215 794h44v2h-44zM263 794h20v2h-20zM287 794h4v2h-4zM299 794h8v2h-8zM319 794h4v2h-4zM343 794h8v2h-8zM395 794h4v2h-4zM415 794h4v2h-4zM439 794h4v2h-4zM483 794h4v2h-4zM571 794h8v2h-8zM587 794h132v2h-132zM723 794h116v2h-116zM851 794h104v2h-104zM959 794h145v2h-145zM67 796h248v2h-248zM319 796h36v2h-36zM379 796h4v2h-4zM391 796h8v2h-8zM403 796h4v2h-4zM415 796h4v2h-4zM427 796h4v2h-4zM435 796h16v2h-16zM459 796h4v2h-4zM467 796h4v2h-4zM483 796h8v2h-8zM519 796h4v2h-4zM563 796h4v2h-4zM571 796h80v2h-80zM655 796h8v2h-8zM667 796h16v2h-16zM687 796h152v2h-152zM851 796h80v2h-80zM935 796h4v2h-4zM947 796h4v2h-4zM959 796h4v2h-4zM967 796h4v2h-4zM975 796h4v2h-4zM983 796h121v2h-121zM67 798h292v2h-292zM363 798h24v2h-24zM391 798h8v2h-8zM403 798h16v2h-16zM427 798h36v2h-36zM467 798h4v2h-4zM479 798h12v2h-12zM503 798h4v2h-4zM519 798h4v2h-4zM535 798h8v2h-8zM555 798h4v2h-4zM563 798h4v2h-4zM571 798h64v2h-64zM639 798h4v2h-4zM655 798h4v2h-4zM667 798h4v2h-4zM675 798h4v2h-4zM691 798h4v2h-4zM699 798h140v2h-140zM851 798h64v2h-64zM919 798h4v2h-4zM935 798h4v2h-4zM947 798h4v2h-4zM967 798h4v2h-4zM983 798h4v2h-4zM991 798h113v2h-113zM67 800h68v2h-68zM139 800h360v2h-360zM503 800h8v2h-8zM515 800h8v2h-8zM535 800h12v2h-12zM551 800h84v2h-84zM667 800h4v2h-4zM675 800h4v2h-4zM703 800h4v2h-4zM711 800h204v2h-204zM947 800h4v2h-4zM995 800h4v2h-4zM1003 800h101v2h-101zM67 802h68v2h-68zM139 802h8v2h-8zM151 802h20v2h-20zM175 802h352v2h-352zM531 802h16v2h-16zM551 802h76v2h-76zM675 802h4v2h-4zM723 802h16v2h-16zM743 802h164v2h-164zM947 802h4v2h-4zM995 802h4v2h-4zM1003 802h12v2h-12zM1019 802h85v2h-85zM67 804h68v2h-68zM143 804h4v2h-4zM151 804h20v2h-20zM175 804h12v2h-12zM191 804h20v2h-20zM215 804h24v2h-24zM243 804h28v2h-28zM275 804h44v2h-44zM323 804h8v2h-8zM335 804h60v2h-60zM399 804h48v2h-48zM451 804h76v2h-76zM531 804h92v2h-92zM675 804h4v2h-4zM723 804h8v2h-8zM743 804h8v2h-8zM755 804h4v2h-4zM763 804h144v2h-144zM947 804h4v2h-4zM1019 804h85v2h-85zM67 806h68v2h-68zM143 806h4v2h-4zM151 806h20v2h-20zM175 806h12v2h-12zM191 806h20v2h-20zM215 806h4v2h-4zM223 806h16v2h-16zM243 806h4v2h-4zM251 806h20v2h-20zM279 806h12v2h-12zM295 806h4v2h-4zM307 806h12v2h-12zM327 806h4v2h-4zM335 806h4v2h-4zM343 806h4v2h-4zM351 806h8v2h-8zM363 806h4v2h-4zM375 806h8v2h-8zM387 806h8v2h-8zM399 806h12v2h-12zM427 806h4v2h-4zM439 806h4v2h-4zM451 806h172v2h-172zM675 806h4v2h-4zM763 806h132v2h-132zM903 806h4v2h-4zM947 806h4v2h-4zM1019 806h4v2h-4zM1027 806h4v2h-4zM1035 806h69v2h-69zM67 808h68v2h-68zM143 808h4v2h-4zM151 808h20v2h-20zM175 808h12v2h-12zM191 808h12v2h-12zM215 808h4v2h-4zM227 808h8v2h-8zM251 808h4v2h-4zM259 808h8v2h-8zM307 808h4v2h-4zM343 808h4v2h-4zM363 808h4v2h-4zM379 808h4v2h-4zM403 808h4v2h-4zM427 808h4v2h-4zM455 808h4v2h-4zM463 808h160v2h-160zM775 808h8v2h-8zM787 808h104v2h-104zM1019 808h4v2h-4zM1027 808h4v2h-4zM1047 808h57v2h-57zM67 810h68v2h-68zM143 810h4v2h-4zM151 810h20v2h-20zM175 810h12v2h-12zM191 810h12v2h-12zM215 810h4v2h-4zM227 810h8v2h-8zM259 810h4v2h-4zM343 810h4v2h-4zM379 810h4v2h-4zM427 810h4v2h-4zM455 810h4v2h-4zM467 810h40v2h-40zM511 810h104v2h-104zM791 810h88v2h-88zM883 810h8v2h-8zM1019 810h4v2h-4zM1051 810h53v2h-53zM67 812h68v2h-68zM143 812h4v2h-4zM151 812h20v2h-20zM175 812h12v2h-12zM191 812h12v2h-12zM215 812h4v2h-4zM231 812h4v2h-4zM259 812h4v2h-4zM343 812h4v2h-4zM379 812h4v2h-4zM427 812h4v2h-4zM455 812h4v2h-4zM471 812h12v2h-12zM491 812h16v2h-16zM515 812h76v2h-76zM595 812h4v2h-4zM603 812h8v2h-8zM799 812h12v2h-12zM815 812h16v2h-16zM835 812h28v2h-28zM867 812h4v2h-4zM883 812h8v2h-8zM1055 812h49v2h-49zM67 814h68v2h-68zM143 814h4v2h-4zM155 814h16v2h-16zM175 814h12v2h-12zM191 814h12v2h-12zM231 814h4v2h-4zM343 814h4v2h-4zM471 814h12v2h-12zM503 814h4v2h-4zM519 814h12v2h-12zM543 814h8v2h-8zM563 814h20v2h-20zM587 814h4v2h-4zM603 814h4v2h-4zM803 814h8v2h-8zM815 814h36v2h-36zM855 814h4v2h-4zM867 814h4v2h-4zM883 814h8v2h-8zM1055 814h49v2h-49zM67 816h68v2h-68zM143 816h4v2h-4zM155 816h16v2h-16zM175 816h12v2h-12zM231 816h4v2h-4zM471 816h8v2h-8zM503 816h4v2h-4zM563 816h4v2h-4zM575 816h4v2h-4zM807 816h4v2h-4zM815 816h16v2h-16zM835 816h16v2h-16zM855 816h4v2h-4zM867 816h4v2h-4zM887 816h4v2h-4zM1067 816h37v2h-37zM67 818h68v2h-68zM143 818h4v2h-4zM155 818h16v2h-16zM175 818h12v2h-12zM231 818h4v2h-4zM475 818h4v2h-4zM503 818h4v2h-4zM563 818h4v2h-4zM575 818h4v2h-4zM823 818h8v2h-8zM835 818h16v2h-16zM855 818h4v2h-4zM1067 818h37v2h-37zM67 820h68v2h-68zM143 820h4v2h-4zM155 820h16v2h-16zM175 820h12v2h-12zM503 820h4v2h-4zM563 820h4v2h-4zM575 820h4v2h-4zM823 820h8v2h-8zM835 820h16v2h-16zM855 820h4v2h-4zM1067 820h37v2h-37zM67 822h68v2h-68zM143 822h4v2h-4zM155 822h16v2h-16zM175 822h12v2h-12zM503 822h4v2h-4zM563 822h4v2h-4zM575 822h4v2h-4zM835 822h16v2h-16zM1067 822h4v2h-4zM1083 822h21v2h-21zM67 824h68v2h-68zM143 824h4v2h-4zM155 824h16v2h-16zM175 824h12v2h-12zM835 824h16v2h-16zM1087 824h17v2h-17zM67 826h68v2h-68zM143 826h4v2h-4zM155 826h16v2h-16zM175 826h12v2h-12zM835 826h16v2h-16zM1087 826h17v2h-17zM67 828h68v2h-68zM143 828h4v2h-4zM155 828h16v2h-16zM175 828h12v2h-12zM835 828h16v2h-16zM1091 828h13v2h-13zM67 830h68v2h-68zM143 830h4v2h-4zM155 830h16v2h-16zM175 830h12v2h-12zM835 830h16v2h-16zM1091 830h13v2h-13zM67 832h8v2h-8zM79 832h56v2h-56zM143 832h4v2h-4zM155 832h16v2h-16zM175 832h12v2h-12zM1095 832h9v2h-9zM71 834h4v2h-4zM79 834h44v2h-44zM143 834h20v2h-20zM167 834h40v2h-40zM211 834h4v2h-4zM219 834h4v2h-4zM231 834h12v2h-12zM251 834h8v2h-8zM263 834h12v2h-12zM279 834h12v2h-12zM295 834h20v2h-20zM323 834h4v2h-4zM331 834h4v2h-4zM339 834h28v2h-28zM371 834h4v2h-4zM379 834h12v2h-12zM399 834h12v2h-12zM415 834h4v2h-4zM423 834h12v2h-12zM439 834h24v2h-24zM467 834h28v2h-28zM499 834h4v2h-4zM507 834h12v2h-12zM523 834h24v2h-24zM555 834h4v2h-4zM563 834h4v2h-4zM579 834h12v2h-12zM595 834h20v2h-20zM619 834h40v2h-40zM667 834h24v2h-24zM695 834h16v2h-16zM715 834h16v2h-16zM735 834h20v2h-20zM759 834h4v2h-4zM799 834h12v2h-12zM815 834h4v2h-4zM827 834h4v2h-4zM851 834h4v2h-4zM859 834h20v2h-20zM883 834h8v2h-8zM895 834h8v2h-8zM907 834h20v2h-20zM931 834h4v2h-4zM947 834h4v2h-4zM955 834h8v2h-8zM967 834h28v2h-28zM999 834h8v2h-8zM1011 834h12v2h-12zM1027 834h4v2h-4zM1035 834h4v2h-4zM1051 834h4v2h-4zM1059 834h12v2h-12zM1079 834h12v2h-12zM1095 834h4v2h-4zM1103 834h1v2h-1zM71 836h4v2h-4zM95 836h4v2h-4zM107 836h4v2h-4zM115 836h4v2h-4zM171 836h16v2h-16zM191 836h4v2h-4zM199 836h12v2h-12zM215 836h4v2h-4zM223 836h12v2h-12zM239 836h4v2h-4zM247 836h20v2h-20zM271 836h8v2h-8zM283 836h4v2h-4zM291 836h12v2h-12zM311 836h28v2h-28zM343 836h56v2h-56zM403 836h8v2h-8zM415 836h8v2h-8zM427 836h20v2h-20zM451 836h4v2h-4zM459 836h12v2h-12zM479 836h8v2h-8zM491 836h8v2h-8zM503 836h4v2h-4zM511 836h40v2h-40zM559 836h4v2h-4zM567 836h48v2h-48zM627 836h4v2h-4zM635 836h8v2h-8zM651 836h12v2h-12zM667 836h12v2h-12zM691 836h12v2h-12zM707 836h4v2h-4zM715 836h20v2h-20zM739 836h24v2h-24zM799 836h4v2h-4zM807 836h24v2h-24zM855 836h4v2h-4zM863 836h8v2h-8zM875 836h20v2h-20zM899 836h4v2h-4zM907 836h44v2h-44zM955 836h8v2h-8zM967 836h8v2h-8zM979 836h20v2h-20zM1003 836h8v2h-8zM1019 836h12v2h-12zM1039 836h4v2h-4zM1047 836h12v2h-12zM1063 836h41v2h-41zM107 838h4v2h-4zM187 838h4v2h-4zM195 838h4v2h-4zM207 838h4v2h-4zM219 838h20v2h-20zM243 838h8v2h-8zM255 838h4v2h-4zM271 838h4v2h-4zM283 838h4v2h-4zM291 838h12v2h-12zM311 838h4v2h-4zM323 838h48v2h-48zM375 838h4v2h-4zM383 838h60v2h-60zM447 838h12v2h-12zM463 838h12v2h-12zM479 838h8v2h-8zM491 838h12v2h-12zM507 838h8v2h-8zM523 838h12v2h-12zM539 838h4v2h-4zM547 838h16v2h-16zM567 838h4v2h-4zM575 838h16v2h-16zM595 838h8v2h-8zM615 838h4v2h-4zM627 838h8v2h-8zM639 838h4v2h-4zM647 838h4v2h-4zM655 838h16v2h-16zM683 838h12v2h-12zM699 838h12v2h-12zM715 838h24v2h-24zM747 838h4v2h-4zM755 838h16v2h-16zM775 838h4v2h-4zM783 838h12v2h-12zM803 838h20v2h-20zM831 838h4v2h-4zM851 838h12v2h-12zM867 838h8v2h-8zM879 838h8v2h-8zM891 838h24v2h-24zM919 838h56v2h-56zM979 838h4v2h-4zM991 838h12v2h-12zM1019 838h4v2h-4zM1031 838h20v2h-20zM1055 838h44v2h-44zM1103 838h1v2h-1zM107 840h4v2h-4zM219 840h4v2h-4zM231 840h4v2h-4zM247 840h4v2h-4zM255 840h16v2h-16zM275 840h4v2h-4zM295 840h4v2h-4zM335 840h8v2h-8zM347 840h8v2h-8zM375 840h4v2h-4zM411 840h4v2h-4zM419 840h8v2h-8zM435 840h4v2h-4zM443 840h4v2h-4zM479 840h8v2h-8zM495 840h4v2h-4zM527 840h4v2h-4zM559 840h4v2h-4zM579 840h8v2h-8zM615 840h12v2h-12zM631 840h4v2h-4zM671 840h12v2h-12zM695 840h4v2h-4zM707 840h4v2h-4zM723 840h4v2h-4zM731 840h4v2h-4zM775 840h4v2h-4zM787 840h4v2h-4zM827 840h4v2h-4zM863 840h8v2h-8zM887 840h8v2h-8zM923 840h4v2h-4zM939 840h4v2h-4zM947 840h4v2h-4zM967 840h4v2h-4zM983 840h4v2h-4zM999 840h4v2h-4zM1055 840h4v2h-4zM1075 840h4v2h-4zM1083 840h4v2h-4zM1091 840h4v2h-4zM1103 840h1v2h-1zM107 842h4v2h-4zM239 842h8v2h-8zM259 842h4v2h-4zM275 842h4v2h-4zM399 842h4v2h-4zM427 842h4v2h-4zM435 842h4v2h-4zM467 842h4v2h-4zM495 842h4v2h-4zM507 842h4v2h-4zM555 842h8v2h-8zM567 842h4v2h-4zM591 842h4v2h-4zM599 842h4v2h-4zM611 842h12v2h-12zM671 842h4v2h-4zM683 842h8v2h-8zM723 842h4v2h-4zM763 842h4v2h-4zM795 842h8v2h-8zM831 842h4v2h-4zM875 842h4v2h-4zM927 842h4v2h-4zM951 842h4v2h-4zM967 842h4v2h-4zM975 842h4v2h-4zM1035 842h4v2h-4zM1071 842h8v2h-8zM831 844h4v2h-4zM831 846h4v2h-4zM831 848h4v2h-4zM831 852h4v2h-4zM831 854h4v2h-4zM831 858h4v2h-4zM831 860h4v2h-4zM831 870h4v2h-4zM67 872h4v2h-4zM67 874h8v2h-8zM67 876h4v2h-4zM75 876h20v2h-20zM67 878h8v2h-8zM79 878h12v2h-12zM99 878h4v2h-4zM67 880h16v2h-16zM87 880h4v2h-4zM95 880h4v2h-4zM103 880h4v2h-4zM111 880h4v2h-4zM71 882h4v2h-4zM79 882h12v2h-12zM95 882h20v2h-20zM119 882h4v2h-4zM67 884h16v2h-16zM87 884h12v2h-12zM107 884h8v2h-8zM123 884h8v2h-8zM67 886h8v2h-8zM79 886h12v2h-12zM95 886h4v2h-4zM103 886h44v2h-44zM831 886h4v2h-4zM75 888h24v2h-24zM103 888h16v2h-16zM123 888h20v2h-20zM147 888h8v2h-8zM831 888h4v2h-4zM67 890h28v2h-28zM99 890h4v2h-4zM111 890h28v2h-28zM147 890h16v2h-16zM67 892h28v2h-28zM99 892h8v2h-8zM115 892h24v2h-24zM143 892h16v2h-16zM163 892h16v2h-16zM67 894h12v2h-12zM87 894h12v2h-12zM103 894h4v2h-4zM111 894h24v2h-24zM139 894h4v2h-4zM147 894h4v2h-4zM155 894h8v2h-8zM167 894h20v2h-20zM243 894h4v2h-4zM255 894h4v2h-4zM271 894h4v2h-4zM339 894h4v2h-4zM347 894h8v2h-8zM359 894h4v2h-4zM375 894h8v2h-8zM403 894h4v2h-4zM415 894h8v2h-8zM427 894h4v2h-4zM499 894h4v2h-4zM515 894h4v2h-4zM531 894h4v2h-4zM539 894h8v2h-8zM555 894h4v2h-4zM575 894h8v2h-8zM599 894h4v2h-4zM623 894h4v2h-4zM699 894h4v2h-4zM719 894h4v2h-4zM791 894h8v2h-8zM811 894h4v2h-4zM851 894h4v2h-4zM927 894h4v2h-4zM987 894h4v2h-4zM1015 894h4v2h-4zM1039 894h4v2h-4zM1079 894h4v2h-4zM1095 894h8v2h-8zM71 896h4v2h-4zM87 896h28v2h-28zM119 896h4v2h-4zM127 896h8v2h-8zM139 896h16v2h-16zM159 896h12v2h-12zM175 896h4v2h-4zM183 896h12v2h-12zM199 896h4v2h-4zM207 896h28v2h-28zM239 896h4v2h-4zM247 896h24v2h-24zM279 896h20v2h-20zM303 896h16v2h-16zM323 896h40v2h-40zM367 896h4v2h-4zM375 896h8v2h-8zM387 896h16v2h-16zM411 896h4v2h-4zM419 896h12v2h-12zM435 896h48v2h-48zM495 896h8v2h-8zM511 896h4v2h-4zM523 896h12v2h-12zM539 896h8v2h-8zM551 896h4v2h-4zM559 896h16v2h-16zM583 896h4v2h-4zM599 896h4v2h-4zM607 896h8v2h-8zM619 896h8v2h-8zM631 896h12v2h-12zM647 896h16v2h-16zM671 896h8v2h-8zM683 896h12v2h-12zM699 896h16v2h-16zM719 896h4v2h-4zM727 896h24v2h-24zM763 896h4v2h-4zM779 896h48v2h-48zM851 896h8v2h-8zM863 896h4v2h-4zM871 896h12v2h-12zM887 896h16v2h-16zM907 896h12v2h-12zM923 896h20v2h-20zM947 896h12v2h-12zM967 896h8v2h-8zM979 896h16v2h-16zM999 896h16v2h-16zM1019 896h16v2h-16zM1039 896h12v2h-12zM1059 896h12v2h-12zM1075 896h4v2h-4zM1087 896h16v2h-16zM67 898h16v2h-16zM87 898h44v2h-44zM135 898h28v2h-28zM167 898h12v2h-12zM183 898h4v2h-4zM191 898h8v2h-8zM203 898h8v2h-8zM215 898h4v2h-4zM223 898h4v2h-4zM231 898h32v2h-32zM267 898h4v2h-4zM283 898h12v2h-12zM303 898h12v2h-12zM319 898h8v2h-8zM335 898h12v2h-12zM351 898h4v2h-4zM359 898h20v2h-20zM383 898h12v2h-12zM399 898h8v2h-8zM411 898h4v2h-4zM419 898h12v2h-12zM439 898h4v2h-4zM447 898h8v2h-8zM459 898h12v2h-12zM475 898h36v2h-36zM515 898h8v2h-8zM527 898h32v2h-32zM571 898h36v2h-36zM615 898h4v2h-4zM623 898h40v2h-40zM667 898h8v2h-8zM679 898h24v2h-24zM707 898h4v2h-4zM715 898h8v2h-8zM731 898h12v2h-12zM751 898h16v2h-16zM771 898h8v2h-8zM783 898h20v2h-20zM815 898h16v2h-16zM851 898h12v2h-12zM867 898h4v2h-4zM875 898h40v2h-40zM919 898h12v2h-12zM935 898h4v2h-4zM943 898h16v2h-16zM963 898h32v2h-32zM1011 898h16v2h-16zM1031 898h4v2h-4zM1043 898h8v2h-8zM1063 898h16v2h-16zM1087 898h8v2h-8zM1103 898h1v2h-1zM75 900h28v2h-28zM107 900h16v2h-16zM127 900h12v2h-12zM143 900h12v2h-12zM159 900h8v2h-8zM175 900h16v2h-16zM195 900h16v2h-16zM215 900h16v2h-16zM235 900h8v2h-8zM251 900h12v2h-12zM267 900h28v2h-28zM307 900h8v2h-8zM319 900h16v2h-16zM339 900h8v2h-8zM351 900h20v2h-20zM375 900h20v2h-20zM399 900h4v2h-4zM411 900h12v2h-12zM431 900h28v2h-28zM463 900h4v2h-4zM475 900h8v2h-8zM487 900h4v2h-4zM495 900h4v2h-4zM503 900h4v2h-4zM511 900h4v2h-4zM519 900h4v2h-4zM527 900h36v2h-36zM567 900h16v2h-16zM591 900h8v2h-8zM603 900h8v2h-8zM615 900h4v2h-4zM623 900h8v2h-8zM647 900h4v2h-4zM667 900h4v2h-4zM675 900h4v2h-4zM683 900h12v2h-12zM699 900h4v2h-4zM707 900h4v2h-4zM715 900h20v2h-20zM739 900h24v2h-24zM767 900h4v2h-4zM779 900h4v2h-4zM787 900h28v2h-28zM819 900h12v2h-12zM851 900h4v2h-4zM859 900h4v2h-4zM867 900h4v2h-4zM875 900h20v2h-20zM899 900h8v2h-8zM911 900h32v2h-32zM951 900h8v2h-8zM963 900h4v2h-4zM971 900h20v2h-20zM999 900h8v2h-8zM1011 900h8v2h-8zM1023 900h20v2h-20zM1047 900h12v2h-12zM1067 900h4v2h-4zM1075 900h4v2h-4zM1083 900h4v2h-4zM1095 900h4v2h-4zM1103 900h1v2h-1zM83 902h20v2h-20zM107 902h4v2h-4zM119 902h16v2h-16zM139 902h4v2h-4zM147 902h20v2h-20zM171 902h24v2h-24zM203 902h28v2h-28zM235 902h4v2h-4zM243 902h16v2h-16zM263 902h16v2h-16zM283 902h16v2h-16zM303 902h12v2h-12zM319 902h4v2h-4zM327 902h12v2h-12zM343 902h20v2h-20zM367 902h20v2h-20zM399 902h8v2h-8zM411 902h32v2h-32zM451 902h16v2h-16zM471 902h4v2h-4zM479 902h4v2h-4zM487 902h4v2h-4zM499 902h8v2h-8zM511 902h12v2h-12zM527 902h52v2h-52zM587 902h40v2h-40zM631 902h4v2h-4zM643 902h8v2h-8zM659 902h12v2h-12zM675 902h8v2h-8zM687 902h4v2h-4zM695 902h4v2h-4zM703 902h20v2h-20zM731 902h4v2h-4zM739 902h28v2h-28zM771 902h4v2h-4zM791 902h16v2h-16zM823 902h8v2h-8zM851 902h4v2h-4zM863 902h4v2h-4zM871 902h4v2h-4zM879 902h8v2h-8zM891 902h20v2h-20zM915 902h20v2h-20zM939 902h8v2h-8zM955 902h8v2h-8zM967 902h4v2h-4zM975 902h8v2h-8zM991 902h8v2h-8zM1003 902h8v2h-8zM1015 902h28v2h-28zM1047 902h16v2h-16zM1067 902h8v2h-8zM1079 902h16v2h-16zM67 904h56v2h-56zM179 904h4v2h-4zM187 904h20v2h-20zM211 904h4v2h-4zM223 904h4v2h-4zM235 904h4v2h-4zM67 906h56v2h-56zM179 906h4v2h-4zM187 906h20v2h-20zM211 906h4v2h-4zM223 906h4v2h-4zM235 906h4v2h-4zM835 906h16v2h-16zM67 908h56v2h-56zM179 908h4v2h-4zM187 908h20v2h-20zM211 908h4v2h-4zM223 908h4v2h-4zM235 908h4v2h-4zM835 908h16v2h-16zM1091 908h4v2h-4zM67 910h56v2h-56zM179 910h4v2h-4zM187 910h20v2h-20zM211 910h4v2h-4zM223 910h4v2h-4zM235 910h4v2h-4zM835 910h16v2h-16zM1091 910h4v2h-4zM67 912h56v2h-56zM179 912h4v2h-4zM187 912h20v2h-20zM211 912h4v2h-4zM223 912h4v2h-4zM235 912h4v2h-4zM835 912h16v2h-16zM1091 912h4v2h-4zM67 914h56v2h-56zM179 914h4v2h-4zM187 914h20v2h-20zM211 914h4v2h-4zM223 914h4v2h-4zM235 914h4v2h-4zM555 914h4v2h-4zM835 914h16v2h-16zM907 914h4v2h-4zM1079 914h8v2h-8zM1091 914h4v2h-4zM1103 914h1v2h-1zM67 916h56v2h-56zM179 916h4v2h-4zM187 916h20v2h-20zM211 916h4v2h-4zM223 916h4v2h-4zM235 916h4v2h-4zM531 916h4v2h-4zM543 916h4v2h-4zM555 916h4v2h-4zM815 916h4v2h-4zM835 916h16v2h-16zM907 916h4v2h-4zM1067 916h37v2h-37zM67 918h56v2h-56zM179 918h4v2h-4zM187 918h20v2h-20zM211 918h4v2h-4zM223 918h4v2h-4zM235 918h4v2h-4zM531 918h4v2h-4zM543 918h4v2h-4zM555 918h4v2h-4zM611 918h4v2h-4zM783 918h4v2h-4zM799 918h4v2h-4zM815 918h4v2h-4zM835 918h16v2h-16zM907 918h4v2h-4zM1067 918h37v2h-37zM67 920h56v2h-56zM179 920h4v2h-4zM187 920h20v2h-20zM211 920h4v2h-4zM223 920h4v2h-4zM235 920h4v2h-4zM531 920h4v2h-4zM543 920h4v2h-4zM555 920h4v2h-4zM611 920h4v2h-4zM783 920h4v2h-4zM799 920h4v2h-4zM811 920h8v2h-8zM831 920h20v2h-20zM863 920h8v2h-8zM907 920h4v2h-4zM1067 920h37v2h-37zM67 922h60v2h-60zM135 922h4v2h-4zM155 922h4v2h-4zM179 922h4v2h-4zM187 922h20v2h-20zM211 922h4v2h-4zM223 922h4v2h-4zM235 922h4v2h-4zM291 922h4v2h-4zM299 922h4v2h-4zM367 922h4v2h-4zM507 922h4v2h-4zM531 922h4v2h-4zM543 922h4v2h-4zM551 922h12v2h-12zM575 922h12v2h-12zM591 922h4v2h-4zM611 922h4v2h-4zM783 922h4v2h-4zM799 922h4v2h-4zM811 922h12v2h-12zM831 922h44v2h-44zM879 922h8v2h-8zM907 922h4v2h-4zM915 922h4v2h-4zM1063 922h41v2h-41zM67 924h60v2h-60zM135 924h4v2h-4zM147 924h4v2h-4zM155 924h4v2h-4zM179 924h4v2h-4zM187 924h20v2h-20zM211 924h4v2h-4zM223 924h4v2h-4zM235 924h4v2h-4zM291 924h4v2h-4zM299 924h4v2h-4zM367 924h4v2h-4zM467 924h12v2h-12zM483 924h8v2h-8zM507 924h8v2h-8zM531 924h72v2h-72zM611 924h4v2h-4zM783 924h4v2h-4zM799 924h4v2h-4zM811 924h12v2h-12zM827 924h76v2h-76zM907 924h12v2h-12zM1047 924h4v2h-4zM1063 924h41v2h-41zM67 926h60v2h-60zM135 926h4v2h-4zM147 926h4v2h-4zM155 926h4v2h-4zM179 926h4v2h-4zM187 926h20v2h-20zM211 926h4v2h-4zM223 926h4v2h-4zM235 926h4v2h-4zM291 926h4v2h-4zM299 926h4v2h-4zM307 926h4v2h-4zM367 926h4v2h-4zM387 926h4v2h-4zM463 926h16v2h-16zM483 926h40v2h-40zM527 926h88v2h-88zM783 926h24v2h-24zM811 926h116v2h-116zM1047 926h4v2h-4zM1063 926h41v2h-41zM67 928h60v2h-60zM135 928h4v2h-4zM147 928h4v2h-4zM155 928h4v2h-4zM179 928h4v2h-4zM187 928h20v2h-20zM211 928h16v2h-16zM235 928h8v2h-8zM271 928h4v2h-4zM291 928h4v2h-4zM299 928h4v2h-4zM307 928h4v2h-4zM367 928h4v2h-4zM387 928h4v2h-4zM455 928h164v2h-164zM623 928h8v2h-8zM759 928h4v2h-4zM779 928h156v2h-156zM1035 928h4v2h-4zM1047 928h4v2h-4zM1059 928h45v2h-45zM67 930h72v2h-72zM147 930h4v2h-4zM155 930h4v2h-4zM167 930h16v2h-16zM187 930h40v2h-40zM235 930h16v2h-16zM259 930h4v2h-4zM271 930h12v2h-12zM291 930h4v2h-4zM299 930h12v2h-12zM319 930h4v2h-4zM331 930h4v2h-4zM367 930h8v2h-8zM379 930h4v2h-4zM387 930h4v2h-4zM395 930h4v2h-4zM423 930h4v2h-4zM447 930h4v2h-4zM455 930h176v2h-176zM635 930h4v2h-4zM651 930h4v2h-4zM739 930h4v2h-4zM751 930h4v2h-4zM759 930h176v2h-176zM1035 930h4v2h-4zM1047 930h4v2h-4zM1059 930h45v2h-45zM67 932h72v2h-72zM143 932h8v2h-8zM155 932h4v2h-4zM167 932h16v2h-16zM187 932h40v2h-40zM235 932h16v2h-16zM255 932h72v2h-72zM331 932h4v2h-4zM339 932h16v2h-16zM359 932h4v2h-4zM367 932h8v2h-8zM379 932h12v2h-12zM395 932h8v2h-8zM411 932h28v2h-28zM443 932h212v2h-212zM707 932h4v2h-4zM715 932h8v2h-8zM735 932h8v2h-8zM747 932h188v2h-188zM939 932h8v2h-8zM1035 932h4v2h-4zM1047 932h8v2h-8zM1059 932h45v2h-45zM67 934h336v2h-336zM407 934h248v2h-248zM659 934h8v2h-8zM683 934h8v2h-8zM695 934h136v2h-136zM835 934h112v2h-112zM951 934h8v2h-8zM1035 934h4v2h-4zM1043 934h61v2h-61zM67 936h600v2h-600zM671 936h4v2h-4zM679 936h152v2h-152zM835 936h112v2h-112zM951 936h8v2h-8zM963 936h4v2h-4zM971 936h4v2h-4zM983 936h4v2h-4zM1035 936h69v2h-69zM67 938h608v2h-608zM679 938h152v2h-152zM835 938h132v2h-132zM971 938h20v2h-20zM1031 938h73v2h-73zM67 940h416v2h-416zM487 940h32v2h-32zM523 940h444v2h-444zM971 940h32v2h-32zM1031 940h73v2h-73zM71 942h272v2h-272zM351 942h44v2h-44zM399 942h16v2h-16zM419 942h20v2h-20zM443 942h24v2h-24zM471 942h12v2h-12zM491 942h12v2h-12zM507 942h12v2h-12zM523 942h12v2h-12zM539 942h56v2h-56zM599 942h96v2h-96zM699 942h8v2h-8zM711 942h24v2h-24zM739 942h12v2h-12zM755 942h248v2h-248zM1015 942h12v2h-12zM1031 942h68v2h-68zM71 944h8v2h-8zM87 944h12v2h-12zM107 944h196v2h-196zM307 944h12v2h-12zM323 944h8v2h-8zM355 944h24v2h-24zM383 944h8v2h-8zM399 944h4v2h-4zM407 944h8v2h-8zM419 944h8v2h-8zM431 944h4v2h-4zM451 944h8v2h-8zM463 944h4v2h-4zM471 944h8v2h-8zM495 944h8v2h-8zM511 944h4v2h-4zM523 944h12v2h-12zM543 944h28v2h-28zM579 944h16v2h-16zM599 944h52v2h-52zM655 944h16v2h-16zM675 944h16v2h-16zM699 944h8v2h-8zM711 944h4v2h-4zM719 944h16v2h-16zM739 944h4v2h-4zM747 944h4v2h-4zM755 944h12v2h-12zM775 944h100v2h-100zM879 944h36v2h-36zM919 944h136v2h-136zM1059 944h28v2h-28zM1091 944h4v2h-4zM75 946h4v2h-4zM91 946h8v2h-8zM107 946h36v2h-36zM147 946h132v2h-132zM283 946h4v2h-4zM291 946h8v2h-8zM307 946h4v2h-4zM315 946h4v2h-4zM359 946h4v2h-4zM387 946h4v2h-4zM399 946h4v2h-4zM419 946h8v2h-8zM499 946h4v2h-4zM527 946h4v2h-4zM547 946h4v2h-4zM559 946h4v2h-4zM567 946h4v2h-4zM579 946h12v2h-12zM611 946h4v2h-4zM619 946h4v2h-4zM635 946h8v2h-8zM655 946h8v2h-8zM683 946h4v2h-4zM699 946h4v2h-4zM719 946h12v2h-12zM747 946h4v2h-4zM759 946h8v2h-8zM775 946h8v2h-8zM803 946h20v2h-20zM827 946h4v2h-4zM835 946h24v2h-24zM863 946h8v2h-8zM883 946h32v2h-32zM919 946h24v2h-24zM947 946h28v2h-28zM979 946h4v2h-4zM987 946h60v2h-60zM1063 946h8v2h-8zM115 948h8v2h-8zM131 948h4v2h-4zM147 948h32v2h-32zM183 948h4v2h-4zM191 948h4v2h-4zM199 948h24v2h-24zM227 948h20v2h-20zM251 948h4v2h-4zM259 948h4v2h-4zM267 948h4v2h-4zM275 948h4v2h-4zM283 948h4v2h-4zM291 948h4v2h-4zM547 948h4v2h-4zM567 948h4v2h-4zM655 948h8v2h-8zM683 948h4v2h-4zM719 948h4v2h-4zM759 948h8v2h-8zM803 948h12v2h-12zM835 948h20v2h-20zM895 948h16v2h-16zM919 948h4v2h-4zM927 948h16v2h-16zM947 948h4v2h-4zM963 948h12v2h-12zM987 948h8v2h-8zM999 948h12v2h-12zM1023 948h8v2h-8zM1063 948h4v2h-4zM131 950h4v2h-4zM167 950h12v2h-12zM183 950h4v2h-4zM191 950h4v2h-4zM199 950h4v2h-4zM207 950h8v2h-8zM219 950h4v2h-4zM231 950h4v2h-4zM259 950h4v2h-4zM719 950h4v2h-4zM811 950h4v2h-4zM835 950h16v2h-16zM895 950h4v2h-4zM907 950h4v2h-4zM927 950h4v2h-4zM935 950h4v2h-4zM963 950h12v2h-12zM991 950h4v2h-4zM1007 950h4v2h-4zM1023 950h4v2h-4zM131 952h4v2h-4zM211 952h4v2h-4zM719 952h4v2h-4zM211 954h4v2h-4zM211 956h4v2h-4z"/>
<path fill="#00ffff" d="M75 750h4v2h-4zM95 750h4v2h-4zM107 750h4v2h-4zM115 750h8v2h-8zM131 750h4v2h-4zM167 750h8v2h-8zM183 750h4v2h-4zM211 750h4v2h-4zM219 750h4v2h-4zM231 750h4v2h-4zM251 750h4v2h-4zM259 750h4v2h-4zM267 750h548v2h-548zM851 750h4v2h-4zM895 750h4v2h-4zM903 750h8v2h-8zM919 750h4v2h-4zM927 750h116v2h-116zM1063 750h8v2h-8zM115 752h4v2h-4zM131 752h4v2h-4zM211 752h4v2h-4zM259 752h4v2h-4zM271 752h352v2h-352zM631 752h184v2h-184zM927 752h116v2h-116zM1063 752h4v2h-4zM131 754h4v2h-4zM211 754h4v2h-4zM275 754h340v2h-340zM619 754h4v2h-4zM635 754h180v2h-180zM927 754h116v2h-116zM275 756h264v2h-264zM547 756h24v2h-24zM579 756h36v2h-36zM639 756h56v2h-56zM699 756h36v2h-36zM739 756h68v2h-68zM927 756h112v2h-112zM279 758h256v2h-256zM547 758h4v2h-4zM559 758h4v2h-4zM567 758h4v2h-4zM579 758h16v2h-16zM599 758h4v2h-4zM647 758h4v2h-4zM655 758h16v2h-16zM675 758h20v2h-20zM699 758h8v2h-8zM711 758h4v2h-4zM719 758h16v2h-16zM739 758h4v2h-4zM747 758h4v2h-4zM755 758h16v2h-16zM775 758h32v2h-32zM931 758h12v2h-12zM947 758h28v2h-28zM979 758h4v2h-4zM987 758h52v2h-52zM283 760h252v2h-252zM547 760h4v2h-4zM567 760h4v2h-4zM583 760h12v2h-12zM655 760h8v2h-8zM683 760h8v2h-8zM699 760h8v2h-8zM711 760h4v2h-4zM719 760h12v2h-12zM747 760h4v2h-4zM759 760h8v2h-8zM775 760h8v2h-8zM935 760h8v2h-8zM947 760h4v2h-4zM959 760h16v2h-16zM987 760h8v2h-8zM999 760h12v2h-12zM1023 760h12v2h-12zM283 762h252v2h-252zM655 762h8v2h-8zM683 762h4v2h-4zM699 762h4v2h-4zM719 762h8v2h-8zM759 762h8v2h-8zM775 762h8v2h-8zM935 762h8v2h-8zM947 762h4v2h-4zM963 762h12v2h-12zM991 762h4v2h-4zM1007 762h4v2h-4zM1023 762h8v2h-8zM283 764h4v2h-4zM291 764h12v2h-12zM307 764h12v2h-12zM323 764h20v2h-20zM351 764h64v2h-64zM419 764h64v2h-64zM487 764h32v2h-32zM523 764h12v2h-12zM719 764h4v2h-4zM1023 764h4v2h-4zM291 766h4v2h-4zM315 766h4v2h-4zM355 766h24v2h-24zM383 766h8v2h-8zM399 766h16v2h-16zM419 766h20v2h-20zM443 766h24v2h-24zM471 766h12v2h-12zM491 766h12v2h-12zM507 766h12v2h-12zM523 766h12v2h-12zM719 766h4v2h-4zM359 768h4v2h-4zM387 768h4v2h-4zM399 768h4v2h-4zM419 768h8v2h-8zM451 768h8v2h-8zM463 768h4v2h-4zM471 768h8v2h-8zM495 768h8v2h-8zM511 768h4v2h-4zM523 768h8v2h-8zM419 770h4v2h-4zM499 770h4v2h-4zM527 770h4v2h-4zM527 772h4v2h-4zM235 844h12v2h-12zM259 844h4v2h-4zM279 844h8v2h-8zM291 844h4v2h-4zM327 844h4v2h-4zM343 844h8v2h-8zM375 844h4v2h-4zM383 844h4v2h-4zM399 844h4v2h-4zM459 844h8v2h-8zM471 844h8v2h-8zM487 844h4v2h-4zM495 844h4v2h-4zM503 844h8v2h-8zM527 844h4v2h-4zM575 844h4v2h-4zM603 844h8v2h-8zM619 844h8v2h-8zM655 844h4v2h-4zM663 844h4v2h-4zM723 844h16v2h-16zM755 844h4v2h-4zM771 844h4v2h-4zM783 844h16v2h-16zM859 844h16v2h-16zM887 844h8v2h-8zM907 844h8v2h-8zM935 844h4v2h-4zM1003 844h32v2h-32zM1043 844h12v2h-12zM1103 844h1v2h-1zM215 846h16v2h-16zM235 846h8v2h-8zM287 846h12v2h-12zM319 846h12v2h-12zM335 846h4v2h-4zM343 846h4v2h-4zM359 846h8v2h-8zM375 846h4v2h-4zM403 846h4v2h-4zM423 846h16v2h-16zM443 846h4v2h-4zM459 846h4v2h-4zM487 846h8v2h-8zM543 846h4v2h-4zM583 846h4v2h-4zM599 846h4v2h-4zM611 846h4v2h-4zM619 846h4v2h-4zM627 846h4v2h-4zM635 846h4v2h-4zM667 846h4v2h-4zM683 846h12v2h-12zM699 846h4v2h-4zM719 846h8v2h-8zM747 846h4v2h-4zM755 846h12v2h-12zM771 846h8v2h-8zM803 846h12v2h-12zM827 846h4v2h-4zM915 846h4v2h-4zM959 846h4v2h-4zM967 846h8v2h-8zM1043 846h4v2h-4zM1095 846h9v2h-9zM219 848h4v2h-4zM255 848h4v2h-4zM267 848h24v2h-24zM303 848h4v2h-4zM315 848h4v2h-4zM335 848h12v2h-12zM351 848h4v2h-4zM367 848h4v2h-4zM403 848h4v2h-4zM419 848h16v2h-16zM443 848h4v2h-4zM459 848h8v2h-8zM495 848h8v2h-8zM531 848h4v2h-4zM555 848h4v2h-4zM563 848h20v2h-20zM631 848h8v2h-8zM647 848h4v2h-4zM659 848h4v2h-4zM667 848h4v2h-4zM695 848h4v2h-4zM703 848h12v2h-12zM779 848h8v2h-8zM823 848h4v2h-4zM851 848h4v2h-4zM875 848h4v2h-4zM883 848h8v2h-8zM903 848h12v2h-12zM943 848h20v2h-20zM979 848h4v2h-4zM1043 848h4v2h-4zM1063 848h8v2h-8zM1075 848h4v2h-4zM1087 848h12v2h-12zM1103 848h1v2h-1zM131 850h16v2h-16zM247 850h4v2h-4zM263 850h4v2h-4zM271 850h4v2h-4zM283 850h8v2h-8zM303 850h20v2h-20zM335 850h4v2h-4zM347 850h8v2h-8zM367 850h8v2h-8zM383 850h4v2h-4zM399 850h4v2h-4zM419 850h8v2h-8zM431 850h4v2h-4zM447 850h8v2h-8zM471 850h4v2h-4zM495 850h4v2h-4zM503 850h20v2h-20zM539 850h16v2h-16zM599 850h12v2h-12zM639 850h12v2h-12zM675 850h4v2h-4zM691 850h4v2h-4zM711 850h8v2h-8zM723 850h24v2h-24zM751 850h4v2h-4zM791 850h4v2h-4zM799 850h8v2h-8zM823 850h4v2h-4zM871 850h4v2h-4zM939 850h4v2h-4zM955 850h8v2h-8zM979 850h4v2h-4zM995 850h16v2h-16zM1023 850h12v2h-12zM1043 850h12v2h-12zM1059 850h4v2h-4zM1067 850h4v2h-4zM1087 850h4v2h-4zM1099 850h4v2h-4zM131 852h4v2h-4zM139 852h16v2h-16zM159 852h4v2h-4zM219 852h32v2h-32zM255 852h28v2h-28zM287 852h20v2h-20zM311 852h4v2h-4zM319 852h16v2h-16zM339 852h4v2h-4zM347 852h12v2h-12zM363 852h4v2h-4zM399 852h24v2h-24zM431 852h8v2h-8zM455 852h16v2h-16zM491 852h8v2h-8zM507 852h8v2h-8zM519 852h8v2h-8zM535 852h20v2h-20zM559 852h8v2h-8zM571 852h8v2h-8zM587 852h4v2h-4zM607 852h16v2h-16zM631 852h20v2h-20zM655 852h8v2h-8zM667 852h12v2h-12zM683 852h12v2h-12zM703 852h8v2h-8zM719 852h4v2h-4zM727 852h4v2h-4zM739 852h24v2h-24zM799 852h4v2h-4zM819 852h12v2h-12zM851 852h32v2h-32zM887 852h20v2h-20zM915 852h4v2h-4zM931 852h4v2h-4zM947 852h8v2h-8zM959 852h16v2h-16zM979 852h12v2h-12zM1007 852h56v2h-56zM1067 852h28v2h-28zM1103 852h1v2h-1zM131 854h28v2h-28zM163 854h4v2h-4zM179 854h4v2h-4zM235 854h16v2h-16zM255 854h8v2h-8zM267 854h4v2h-4zM275 854h16v2h-16zM299 854h8v2h-8zM315 854h48v2h-48zM367 854h40v2h-40zM415 854h28v2h-28zM447 854h4v2h-4zM479 854h4v2h-4zM507 854h16v2h-16zM527 854h12v2h-12zM547 854h8v2h-8zM559 854h8v2h-8zM571 854h4v2h-4zM579 854h24v2h-24zM607 854h24v2h-24zM635 854h28v2h-28zM691 854h48v2h-48zM751 854h8v2h-8zM803 854h28v2h-28zM867 854h32v2h-32zM903 854h8v2h-8zM915 854h16v2h-16zM935 854h24v2h-24zM975 854h24v2h-24zM1007 854h12v2h-12zM1023 854h4v2h-4zM1035 854h16v2h-16zM1071 854h8v2h-8zM1083 854h20v2h-20zM131 856h12v2h-12zM147 856h4v2h-4zM159 856h8v2h-8zM183 856h4v2h-4zM191 856h8v2h-8zM219 856h4v2h-4zM227 856h24v2h-24zM255 856h4v2h-4zM267 856h16v2h-16zM291 856h20v2h-20zM331 856h4v2h-4zM347 856h4v2h-4zM359 856h8v2h-8zM371 856h32v2h-32zM407 856h4v2h-4zM415 856h4v2h-4zM423 856h4v2h-4zM435 856h20v2h-20zM483 856h4v2h-4zM511 856h36v2h-36zM555 856h16v2h-16zM579 856h16v2h-16zM603 856h24v2h-24zM635 856h8v2h-8zM647 856h4v2h-4zM655 856h4v2h-4zM663 856h4v2h-4zM675 856h12v2h-12zM691 856h20v2h-20zM715 856h12v2h-12zM735 856h16v2h-16zM827 856h4v2h-4zM851 856h8v2h-8zM871 856h24v2h-24zM911 856h12v2h-12zM931 856h12v2h-12zM947 856h8v2h-8zM959 856h4v2h-4zM967 856h12v2h-12zM987 856h16v2h-16zM1023 856h4v2h-4zM1035 856h24v2h-24zM1063 856h41v2h-41zM131 858h12v2h-12zM147 858h12v2h-12zM163 858h4v2h-4zM187 858h12v2h-12zM203 858h32v2h-32zM243 858h4v2h-4zM255 858h36v2h-36zM295 858h8v2h-8zM311 858h8v2h-8zM323 858h32v2h-32zM363 858h12v2h-12zM379 858h8v2h-8zM399 858h4v2h-4zM407 858h8v2h-8zM423 858h4v2h-4zM431 858h12v2h-12zM447 858h4v2h-4zM511 858h8v2h-8zM527 858h12v2h-12zM543 858h12v2h-12zM559 858h52v2h-52zM619 858h8v2h-8zM639 858h36v2h-36zM679 858h4v2h-4zM691 858h12v2h-12zM707 858h24v2h-24zM735 858h20v2h-20zM807 858h4v2h-4zM815 858h4v2h-4zM859 858h8v2h-8zM875 858h4v2h-4zM883 858h8v2h-8zM895 858h36v2h-36zM943 858h12v2h-12zM971 858h8v2h-8zM983 858h12v2h-12zM1003 858h16v2h-16zM1027 858h8v2h-8zM1043 858h12v2h-12zM1063 858h8v2h-8zM1083 858h21v2h-21zM131 860h16v2h-16zM151 860h16v2h-16zM191 860h8v2h-8zM203 860h16v2h-16zM223 860h4v2h-4zM231 860h4v2h-4zM239 860h28v2h-28zM275 860h12v2h-12zM291 860h16v2h-16zM323 860h12v2h-12zM347 860h48v2h-48zM403 860h32v2h-32zM451 860h4v2h-4zM483 860h4v2h-4zM491 860h4v2h-4zM519 860h4v2h-4zM531 860h28v2h-28zM563 860h8v2h-8zM575 860h4v2h-4zM587 860h20v2h-20zM615 860h4v2h-4zM635 860h4v2h-4zM643 860h4v2h-4zM651 860h24v2h-24zM687 860h48v2h-48zM739 860h8v2h-8zM815 860h4v2h-4zM823 860h4v2h-4zM851 860h4v2h-4zM859 860h4v2h-4zM867 860h12v2h-12zM887 860h8v2h-8zM903 860h64v2h-64zM971 860h52v2h-52zM1055 860h16v2h-16zM1079 860h20v2h-20zM1103 860h1v2h-1zM131 862h36v2h-36zM195 862h24v2h-24zM235 862h44v2h-44zM283 862h32v2h-32zM319 862h12v2h-12zM347 862h24v2h-24zM375 862h60v2h-60zM475 862h4v2h-4zM519 862h24v2h-24zM547 862h12v2h-12zM563 862h28v2h-28zM595 862h8v2h-8zM623 862h24v2h-24zM651 862h4v2h-4zM659 862h12v2h-12zM683 862h8v2h-8zM703 862h4v2h-4zM711 862h24v2h-24zM743 862h8v2h-8zM819 862h12v2h-12zM851 862h8v2h-8zM867 862h60v2h-60zM931 862h4v2h-4zM947 862h16v2h-16zM967 862h4v2h-4zM983 862h4v2h-4zM991 862h8v2h-8zM1011 862h12v2h-12zM1043 862h4v2h-4zM1055 862h12v2h-12zM1071 862h8v2h-8zM1087 862h17v2h-17zM131 864h4v2h-4zM139 864h16v2h-16zM159 864h12v2h-12zM195 864h20v2h-20zM227 864h8v2h-8zM243 864h4v2h-4zM251 864h32v2h-32zM291 864h16v2h-16zM311 864h52v2h-52zM367 864h12v2h-12zM387 864h12v2h-12zM407 864h28v2h-28zM439 864h8v2h-8zM463 864h4v2h-4zM483 864h4v2h-4zM511 864h4v2h-4zM523 864h4v2h-4zM531 864h24v2h-24zM559 864h8v2h-8zM571 864h24v2h-24zM607 864h16v2h-16zM635 864h8v2h-8zM655 864h12v2h-12zM687 864h16v2h-16zM707 864h36v2h-36zM747 864h4v2h-4zM811 864h20v2h-20zM851 864h4v2h-4zM863 864h20v2h-20zM903 864h44v2h-44zM951 864h4v2h-4zM959 864h4v2h-4zM971 864h32v2h-32zM1007 864h12v2h-12zM1023 864h32v2h-32zM1063 864h12v2h-12zM1087 864h16v2h-16zM131 866h28v2h-28zM163 866h12v2h-12zM195 866h28v2h-28zM227 866h16v2h-16zM251 866h24v2h-24zM279 866h4v2h-4zM291 866h16v2h-16zM319 866h20v2h-20zM363 866h4v2h-4zM371 866h8v2h-8zM383 866h4v2h-4zM403 866h32v2h-32zM447 866h4v2h-4zM495 866h4v2h-4zM507 866h20v2h-20zM535 866h8v2h-8zM547 866h40v2h-40zM591 866h12v2h-12zM607 866h16v2h-16zM627 866h12v2h-12zM651 866h4v2h-4zM667 866h4v2h-4zM675 866h28v2h-28zM707 866h4v2h-4zM715 866h4v2h-4zM723 866h4v2h-4zM731 866h12v2h-12zM815 866h12v2h-12zM851 866h8v2h-8zM867 866h4v2h-4zM879 866h12v2h-12zM903 866h24v2h-24zM931 866h12v2h-12zM947 866h4v2h-4zM955 866h4v2h-4zM963 866h28v2h-28zM995 866h4v2h-4zM1007 866h8v2h-8zM1019 866h4v2h-4zM1031 866h12v2h-12zM1047 866h20v2h-20zM1071 866h8v2h-8zM1095 866h8v2h-8zM131 868h16v2h-16zM151 868h28v2h-28zM195 868h32v2h-32zM231 868h8v2h-8zM243 868h20v2h-20zM279 868h20v2h-20zM303 868h24v2h-24zM335 868h28v2h-28zM367 868h8v2h-8zM395 868h28v2h-28zM431 868h8v2h-8zM443 868h8v2h-8zM479 868h12v2h-12zM511 868h8v2h-8zM527 868h12v2h-12zM543 868h20v2h-20zM567 868h36v2h-36zM607 868h40v2h-40zM651 868h28v2h-28zM695 868h28v2h-28zM731 868h20v2h-20zM815 868h4v2h-4zM823 868h8v2h-8zM851 868h4v2h-4zM871 868h8v2h-8zM883 868h44v2h-44zM931 868h16v2h-16zM959 868h4v2h-4zM975 868h8v2h-8zM1003 868h8v2h-8zM1015 868h4v2h-4zM1035 868h8v2h-8zM1051 868h52v2h-52zM131 870h20v2h-20zM155 870h4v2h-4zM163 870h20v2h-20zM195 870h12v2h-12zM211 870h8v2h-8zM223 870h24v2h-24zM255 870h12v2h-12zM271 870h40v2h-40zM327 870h24v2h-24zM367 870h20v2h-20zM395 870h8v2h-8zM415 870h32v2h-32zM451 870h4v2h-4zM463 870h4v2h-4zM507 870h8v2h-8zM519 870h36v2h-36zM567 870h20v2h-20zM591 870h12v2h-12zM607 870h4v2h-4zM627 870h8v2h-8zM643 870h8v2h-8zM671 870h8v2h-8zM683 870h4v2h-4zM695 870h20v2h-20zM727 870h16v2h-16zM747 870h4v2h-4zM819 870h12v2h-12zM851 870h4v2h-4zM867 870h8v2h-8zM883 870h8v2h-8zM919 870h16v2h-16zM951 870h12v2h-12zM975 870h8v2h-8zM987 870h4v2h-4zM995 870h20v2h-20zM1023 870h48v2h-48zM1075 870h4v2h-4zM1087 870h17v2h-17zM139 872h12v2h-12zM155 872h20v2h-20zM179 872h8v2h-8zM195 872h40v2h-40zM239 872h4v2h-4zM247 872h4v2h-4zM267 872h36v2h-36zM307 872h20v2h-20zM339 872h4v2h-4zM347 872h20v2h-20zM371 872h20v2h-20zM399 872h32v2h-32zM443 872h20v2h-20zM487 872h4v2h-4zM507 872h4v2h-4zM519 872h4v2h-4zM527 872h8v2h-8zM543 872h28v2h-28zM579 872h8v2h-8zM595 872h12v2h-12zM611 872h4v2h-4zM619 872h28v2h-28zM655 872h12v2h-12zM675 872h8v2h-8zM711 872h8v2h-8zM723 872h12v2h-12zM739 872h12v2h-12zM815 872h12v2h-12zM851 872h20v2h-20zM875 872h20v2h-20zM899 872h4v2h-4zM911 872h52v2h-52zM979 872h8v2h-8zM991 872h4v2h-4zM1003 872h24v2h-24zM1031 872h4v2h-4zM1051 872h28v2h-28zM1091 872h4v2h-4zM1099 872h4v2h-4zM155 874h28v2h-28zM187 874h4v2h-4zM195 874h24v2h-24zM227 874h40v2h-40zM271 874h4v2h-4zM279 874h8v2h-8zM295 874h28v2h-28zM327 874h20v2h-20zM359 874h4v2h-4zM367 874h4v2h-4zM379 874h12v2h-12zM399 874h12v2h-12zM419 874h16v2h-16zM443 874h16v2h-16zM475 874h4v2h-4zM483 874h4v2h-4zM491 874h8v2h-8zM503 874h20v2h-20zM527 874h4v2h-4zM535 874h48v2h-48zM607 874h12v2h-12zM643 874h8v2h-8zM663 874h72v2h-72zM815 874h12v2h-12zM851 874h8v2h-8zM863 874h24v2h-24zM895 874h4v2h-4zM907 874h16v2h-16zM947 874h32v2h-32zM983 874h12v2h-12zM1023 874h4v2h-4zM1031 874h28v2h-28zM1063 874h32v2h-32zM1099 874h5v2h-5zM167 876h16v2h-16zM187 876h8v2h-8zM199 876h36v2h-36zM263 876h48v2h-48zM319 876h4v2h-4zM331 876h16v2h-16zM351 876h20v2h-20zM375 876h8v2h-8zM399 876h32v2h-32zM435 876h24v2h-24zM463 876h8v2h-8zM487 876h4v2h-4zM495 876h24v2h-24zM527 876h44v2h-44zM587 876h4v2h-4zM595 876h4v2h-4zM607 876h4v2h-4zM623 876h8v2h-8zM643 876h8v2h-8zM663 876h24v2h-24zM691 876h20v2h-20zM723 876h4v2h-4zM731 876h12v2h-12zM747 876h4v2h-4zM819 876h4v2h-4zM855 876h28v2h-28zM887 876h4v2h-4zM899 876h24v2h-24zM931 876h28v2h-28zM963 876h4v2h-4zM971 876h20v2h-20zM995 876h28v2h-28zM1031 876h12v2h-12zM1047 876h20v2h-20zM1087 876h4v2h-4zM1095 876h9v2h-9zM175 878h8v2h-8zM195 878h24v2h-24zM227 878h24v2h-24zM271 878h16v2h-16zM299 878h16v2h-16zM319 878h12v2h-12zM343 878h8v2h-8zM355 878h8v2h-8zM379 878h8v2h-8zM395 878h12v2h-12zM411 878h8v2h-8zM427 878h4v2h-4zM435 878h8v2h-8zM455 878h12v2h-12zM471 878h16v2h-16zM491 878h12v2h-12zM511 878h8v2h-8zM523 878h8v2h-8zM543 878h12v2h-12zM559 878h16v2h-16zM583 878h12v2h-12zM615 878h4v2h-4zM623 878h4v2h-4zM635 878h4v2h-4zM643 878h4v2h-4zM651 878h4v2h-4zM659 878h20v2h-20zM687 878h8v2h-8zM699 878h4v2h-4zM707 878h4v2h-4zM715 878h12v2h-12zM743 878h4v2h-4zM807 878h4v2h-4zM819 878h8v2h-8zM851 878h12v2h-12zM867 878h24v2h-24zM895 878h8v2h-8zM915 878h4v2h-4zM923 878h4v2h-4zM931 878h4v2h-4zM939 878h8v2h-8zM951 878h20v2h-20zM983 878h36v2h-36zM1027 878h20v2h-20zM1051 878h4v2h-4zM1063 878h4v2h-4zM1071 878h8v2h-8zM1083 878h12v2h-12zM1099 878h5v2h-5zM191 880h20v2h-20zM251 880h36v2h-36zM291 880h32v2h-32zM335 880h4v2h-4zM347 880h4v2h-4zM355 880h12v2h-12zM375 880h20v2h-20zM399 880h48v2h-48zM451 880h4v2h-4zM463 880h28v2h-28zM495 880h24v2h-24zM535 880h8v2h-8zM547 880h24v2h-24zM575 880h4v2h-4zM583 880h8v2h-8zM599 880h12v2h-12zM619 880h12v2h-12zM655 880h12v2h-12zM671 880h8v2h-8zM695 880h8v2h-8zM715 880h8v2h-8zM731 880h24v2h-24zM807 880h12v2h-12zM859 880h40v2h-40zM903 880h24v2h-24zM931 880h16v2h-16zM951 880h8v2h-8zM971 880h8v2h-8zM987 880h4v2h-4zM995 880h4v2h-4zM1003 880h20v2h-20zM1031 880h4v2h-4zM1047 880h4v2h-4zM1063 880h16v2h-16zM1083 880h21v2h-21zM215 882h4v2h-4zM227 882h4v2h-4zM255 882h16v2h-16zM279 882h12v2h-12zM299 882h12v2h-12zM315 882h4v2h-4zM331 882h8v2h-8zM355 882h44v2h-44zM403 882h12v2h-12zM419 882h4v2h-4zM427 882h28v2h-28zM475 882h16v2h-16zM503 882h8v2h-8zM519 882h4v2h-4zM531 882h4v2h-4zM539 882h8v2h-8zM551 882h8v2h-8zM567 882h40v2h-40zM611 882h4v2h-4zM627 882h20v2h-20zM655 882h12v2h-12zM671 882h8v2h-8zM703 882h12v2h-12zM727 882h4v2h-4zM735 882h24v2h-24zM803 882h4v2h-4zM811 882h8v2h-8zM823 882h8v2h-8zM863 882h20v2h-20zM887 882h8v2h-8zM911 882h4v2h-4zM927 882h8v2h-8zM951 882h24v2h-24zM979 882h4v2h-4zM987 882h24v2h-24zM1015 882h8v2h-8zM1031 882h4v2h-4zM1039 882h12v2h-12zM1055 882h49v2h-49zM215 884h20v2h-20zM243 884h24v2h-24zM271 884h8v2h-8zM283 884h8v2h-8zM299 884h20v2h-20zM331 884h16v2h-16zM351 884h4v2h-4zM359 884h20v2h-20zM391 884h8v2h-8zM403 884h44v2h-44zM455 884h44v2h-44zM503 884h8v2h-8zM515 884h16v2h-16zM539 884h8v2h-8zM551 884h4v2h-4zM559 884h12v2h-12zM583 884h8v2h-8zM595 884h8v2h-8zM619 884h4v2h-4zM627 884h4v2h-4zM651 884h24v2h-24zM679 884h16v2h-16zM699 884h24v2h-24zM727 884h8v2h-8zM739 884h4v2h-4zM759 884h4v2h-4zM803 884h28v2h-28zM851 884h40v2h-40zM903 884h12v2h-12zM947 884h4v2h-4zM963 884h4v2h-4zM975 884h4v2h-4zM999 884h4v2h-4zM1011 884h20v2h-20zM1035 884h16v2h-16zM1059 884h24v2h-24zM1091 884h13v2h-13zM223 886h16v2h-16zM259 886h8v2h-8zM283 886h4v2h-4zM303 886h4v2h-4zM323 886h8v2h-8zM343 886h4v2h-4zM359 886h8v2h-8zM371 886h4v2h-4zM395 886h4v2h-4zM403 886h4v2h-4zM419 886h4v2h-4zM431 886h8v2h-8zM443 886h4v2h-4zM463 886h4v2h-4zM487 886h8v2h-8zM547 886h4v2h-4zM603 886h8v2h-8zM619 886h12v2h-12zM639 886h8v2h-8zM651 886h4v2h-4zM675 886h20v2h-20zM703 886h4v2h-4zM723 886h8v2h-8zM791 886h12v2h-12zM855 886h4v2h-4zM907 886h12v2h-12zM935 886h32v2h-32zM987 886h4v2h-4zM1055 886h4v2h-4zM1067 886h12v2h-12zM1083 886h16v2h-16zM219 888h12v2h-12zM243 888h12v2h-12zM283 888h4v2h-4zM303 888h12v2h-12zM327 888h4v2h-4zM339 888h8v2h-8zM367 888h8v2h-8zM399 888h4v2h-4zM415 888h4v2h-4zM431 888h4v2h-4zM491 888h28v2h-28zM531 888h8v2h-8zM543 888h4v2h-4zM567 888h8v2h-8zM599 888h12v2h-12zM643 888h4v2h-4zM731 888h8v2h-8zM747 888h4v2h-4zM755 888h4v2h-4zM763 888h4v2h-4zM779 888h4v2h-4zM795 888h4v2h-4zM807 888h8v2h-8zM819 888h4v2h-4zM827 888h4v2h-4zM875 888h4v2h-4zM887 888h8v2h-8zM911 888h4v2h-4zM935 888h4v2h-4zM947 888h12v2h-12zM979 888h4v2h-4zM991 888h4v2h-4zM1075 888h4v2h-4zM219 890h8v2h-8zM243 890h12v2h-12zM287 890h4v2h-4zM311 890h4v2h-4zM323 890h8v2h-8zM343 890h4v2h-4zM351 890h12v2h-12zM395 890h8v2h-8zM407 890h8v2h-8zM443 890h8v2h-8zM455 890h4v2h-4zM487 890h8v2h-8zM499 890h4v2h-4zM507 890h4v2h-4zM519 890h4v2h-4zM539 890h8v2h-8zM579 890h8v2h-8zM639 890h12v2h-12zM663 890h4v2h-4zM671 890h8v2h-8zM687 890h4v2h-4zM743 890h16v2h-16zM771 890h8v2h-8zM787 890h16v2h-16zM851 890h4v2h-4zM883 890h4v2h-4zM895 890h4v2h-4zM919 890h4v2h-4zM939 890h4v2h-4zM959 890h4v2h-4zM983 890h4v2h-4zM1011 890h4v2h-4zM1023 890h4v2h-4zM1099 890h5v2h-5zM295 892h12v2h-12zM323 892h4v2h-4zM339 892h4v2h-4zM359 892h8v2h-8zM383 892h8v2h-8zM411 892h4v2h-4zM443 892h12v2h-12zM463 892h4v2h-4zM499 892h8v2h-8zM511 892h8v2h-8zM527 892h4v2h-4zM543 892h8v2h-8zM559 892h16v2h-16zM619 892h4v2h-4zM655 892h12v2h-12zM687 892h12v2h-12zM723 892h4v2h-4zM731 892h8v2h-8zM743 892h4v2h-4zM751 892h4v2h-4zM763 892h4v2h-4zM815 892h4v2h-4zM827 892h4v2h-4zM859 892h12v2h-12zM887 892h12v2h-12zM907 892h4v2h-4zM991 892h4v2h-4zM1003 892h8v2h-8zM1019 892h4v2h-4zM1055 892h8v2h-8zM1075 892h4v2h-4zM1087 892h17v2h-17zM483 966h4v2h-4zM519 966h4v2h-4zM415 968h4v2h-4zM439 968h4v2h-4zM467 968h4v2h-4zM483 968h8v2h-8zM503 968h4v2h-4zM519 968h4v2h-4zM303 970h4v2h-4zM319 970h4v2h-4zM343 970h12v2h-12zM391 970h8v2h-8zM415 970h4v2h-4zM439 970h8v2h-8zM459 970h4v2h-4zM467 970h4v2h-4zM479 970h16v2h-16zM503 970h8v2h-8zM515 970h8v2h-8zM695 970h4v2h-4zM707 970h4v2h-4zM715 970h4v2h-4zM735 970h4v2h-4zM743 970h4v2h-4zM751 970h4v2h-4zM771 970h4v2h-4zM943 970h4v2h-4zM975 970h4v2h-4zM299 972h8v2h-8zM311 972h4v2h-4zM319 972h40v2h-40zM371 972h16v2h-16zM391 972h8v2h-8zM403 972h16v2h-16zM427 972h36v2h-36zM467 972h32v2h-32zM503 972h24v2h-24zM651 972h4v2h-4zM671 972h4v2h-4zM691 972h8v2h-8zM707 972h4v2h-4zM715 972h4v2h-4zM735 972h4v2h-4zM743 972h4v2h-4zM751 972h8v2h-8zM767 972h8v2h-8zM783 972h16v2h-16zM943 972h4v2h-4zM951 972h8v2h-8zM975 972h4v2h-4zM1019 972h4v2h-4zM287 974h28v2h-28zM319 974h100v2h-100zM423 974h112v2h-112zM615 974h4v2h-4zM623 974h16v2h-16zM643 974h12v2h-12zM663 974h20v2h-20zM687 974h12v2h-12zM703 974h16v2h-16zM731 974h16v2h-16zM751 974h8v2h-8zM767 974h8v2h-8zM783 974h20v2h-20zM943 974h4v2h-4zM951 974h12v2h-12zM975 974h8v2h-8zM1015 974h8v2h-8zM1031 974h4v2h-4zM287 976h252v2h-252zM595 976h60v2h-60zM659 976h24v2h-24zM687 976h32v2h-32zM723 976h40v2h-40zM767 976h36v2h-36zM939 976h44v2h-44zM1011 976h12v2h-12zM1027 976h8v2h-8zM287 978h252v2h-252zM595 978h124v2h-124zM723 978h80v2h-80zM939 978h48v2h-48zM1011 978h28v2h-28zM287 980h252v2h-252zM591 980h212v2h-212zM935 980h52v2h-52zM1011 980h28v2h-28zM283 982h256v2h-256zM571 982h8v2h-8zM587 982h220v2h-220zM931 982h56v2h-56zM1003 982h36v2h-36zM283 984h260v2h-260zM571 984h240v2h-240zM931 984h56v2h-56zM995 984h48v2h-48zM179 986h4v2h-4zM279 986h264v2h-264zM563 986h4v2h-4zM571 986h240v2h-240zM875 986h4v2h-4zM915 986h4v2h-4zM931 986h56v2h-56zM995 986h48v2h-48zM67 988h4v2h-4zM79 988h8v2h-8zM99 988h8v2h-8zM139 988h8v2h-8zM179 988h4v2h-4zM187 988h4v2h-4zM195 988h4v2h-4zM203 988h4v2h-4zM223 988h4v2h-4zM247 988h4v2h-4zM255 988h4v2h-4zM263 988h4v2h-4zM279 988h264v2h-264zM555 988h4v2h-4zM563 988h248v2h-248zM823 988h4v2h-4zM831 988h4v2h-4zM859 988h4v2h-4zM871 988h12v2h-12zM911 988h8v2h-8zM923 988h68v2h-68zM995 988h48v2h-48zM1055 988h8v2h-8zM1087 988h4v2h-4zM1099 988h5v2h-5z"/>
<path fill="#00ff88" d="M87 750h8v2h-8zM111 750h4v2h-4zM75 752h4v2h-4zM95 752h4v2h-4zM107 752h4v2h-4zM119 752h4v2h-4zM115 754h8v2h-8zM123 756h4v2h-4zM123 758h4v2h-4zM123 760h8v2h-8zM123 762h8v2h-8zM127 764h4v2h-4zM127 766h8v2h-8zM127 768h8v2h-8zM127 770h12v2h-12zM131 772h8v2h-8zM811 772h4v2h-4zM131 774h20v2h-20zM155 774h4v2h-4zM167 774h8v2h-8zM739 774h4v2h-4zM751 774h4v2h-4zM759 774h4v2h-4zM811 774h4v2h-4zM131 776h20v2h-20zM155 776h8v2h-8zM167 776h12v2h-12zM187 776h4v2h-4zM211 776h4v2h-4zM651 776h4v2h-4zM707 776h4v2h-4zM715 776h8v2h-8zM735 776h8v2h-8zM751 776h4v2h-4zM759 776h4v2h-4zM783 776h4v2h-4zM791 776h4v2h-4zM811 776h4v2h-4zM831 776h4v2h-4zM131 778h48v2h-48zM187 778h4v2h-4zM195 778h4v2h-4zM211 778h12v2h-12zM239 778h4v2h-4zM271 778h4v2h-4zM623 778h8v2h-8zM635 778h4v2h-4zM643 778h4v2h-4zM651 778h4v2h-4zM659 778h8v2h-8zM683 778h8v2h-8zM695 778h8v2h-8zM707 778h16v2h-16zM731 778h72v2h-72zM811 778h12v2h-12zM831 778h4v2h-4zM867 778h4v2h-4zM883 778h4v2h-4zM907 778h4v2h-4zM915 778h4v2h-4zM955 778h4v2h-4zM971 778h4v2h-4zM979 778h4v2h-4zM987 778h4v2h-4zM1019 778h4v2h-4zM1043 778h4v2h-4zM1067 778h4v2h-4zM1079 778h8v2h-8zM131 780h60v2h-60zM195 780h28v2h-28zM235 780h16v2h-16zM259 780h4v2h-4zM271 780h4v2h-4zM319 780h4v2h-4zM599 780h4v2h-4zM607 780h8v2h-8zM623 780h8v2h-8zM635 780h32v2h-32zM671 780h4v2h-4zM679 780h12v2h-12zM695 780h112v2h-112zM811 780h12v2h-12zM827 780h4v2h-4zM851 780h20v2h-20zM879 780h8v2h-8zM895 780h8v2h-8zM907 780h28v2h-28zM939 780h8v2h-8zM951 780h8v2h-8zM963 780h4v2h-4zM971 780h12v2h-12zM987 780h16v2h-16zM1015 780h8v2h-8zM1031 780h24v2h-24zM1059 780h12v2h-12zM1075 780h16v2h-16zM1103 780h1v2h-1zM131 782h96v2h-96zM235 782h16v2h-16zM255 782h8v2h-8zM271 782h24v2h-24zM299 782h8v2h-8zM319 782h4v2h-4zM331 782h4v2h-4zM379 782h4v2h-4zM395 782h4v2h-4zM591 782h12v2h-12zM607 782h12v2h-12zM623 782h44v2h-44zM671 782h4v2h-4zM679 782h152v2h-152zM851 782h52v2h-52zM907 782h28v2h-28zM939 782h8v2h-8zM951 782h16v2h-16zM971 782h56v2h-56zM1031 782h24v2h-24zM1059 782h32v2h-32zM1095 782h9v2h-9zM131 784h8v2h-8zM147 784h32v2h-32zM183 784h44v2h-44zM235 784h16v2h-16zM255 784h52v2h-52zM311 784h16v2h-16zM331 784h4v2h-4zM339 784h16v2h-16zM359 784h4v2h-4zM367 784h8v2h-8zM379 784h8v2h-8zM395 784h4v2h-4zM415 784h4v2h-4zM423 784h4v2h-4zM447 784h4v2h-4zM583 784h4v2h-4zM591 784h84v2h-84zM679 784h16v2h-16zM699 784h136v2h-136zM851 784h96v2h-96zM951 784h32v2h-32zM987 784h40v2h-40zM1031 784h73v2h-73zM151 786h4v2h-4zM159 786h20v2h-20zM183 786h4v2h-4zM191 786h4v2h-4zM199 786h164v2h-164zM367 786h20v2h-20zM395 786h8v2h-8zM411 786h28v2h-28zM443 786h8v2h-8zM455 786h8v2h-8zM471 786h4v2h-4zM507 786h4v2h-4zM555 786h8v2h-8zM579 786h116v2h-116zM699 786h8v2h-8zM711 786h4v2h-4zM719 786h16v2h-16zM739 786h4v2h-4zM747 786h4v2h-4zM755 786h80v2h-80zM851 786h20v2h-20zM883 786h32v2h-32zM919 786h24v2h-24zM947 786h28v2h-28zM979 786h4v2h-4zM987 786h117v2h-117zM167 788h8v2h-8zM183 788h4v2h-4zM199 788h4v2h-4zM207 788h16v2h-16zM227 788h176v2h-176zM407 788h32v2h-32zM443 788h8v2h-8zM455 788h24v2h-24zM483 788h4v2h-4zM507 788h4v2h-4zM551 788h12v2h-12zM571 788h24v2h-24zM599 788h52v2h-52zM655 788h12v2h-12zM675 788h16v2h-16zM699 788h8v2h-8zM711 788h4v2h-4zM719 788h16v2h-16zM739 788h4v2h-4zM747 788h4v2h-4zM759 788h8v2h-8zM775 788h8v2h-8zM791 788h4v2h-4zM799 788h24v2h-24zM827 788h4v2h-4zM851 788h8v2h-8zM863 788h4v2h-4zM883 788h8v2h-8zM895 788h16v2h-16zM919 788h4v2h-4zM927 788h16v2h-16zM947 788h4v2h-4zM963 788h12v2h-12zM987 788h8v2h-8zM999 788h12v2h-12zM1023 788h32v2h-32zM1063 788h24v2h-24zM1091 788h8v2h-8zM211 790h4v2h-4zM219 790h4v2h-4zM231 790h4v2h-4zM239 790h8v2h-8zM251 790h4v2h-4zM259 790h220v2h-220zM483 790h8v2h-8zM507 790h8v2h-8zM539 790h56v2h-56zM611 790h4v2h-4zM619 790h4v2h-4zM635 790h8v2h-8zM655 790h8v2h-8zM683 790h4v2h-4zM699 790h4v2h-4zM719 790h8v2h-8zM759 790h8v2h-8zM775 790h8v2h-8zM803 790h12v2h-12zM851 790h4v2h-4zM895 790h4v2h-4zM907 790h4v2h-4zM927 790h4v2h-4zM935 790h4v2h-4zM967 790h8v2h-8zM1007 790h4v2h-4zM1023 790h8v2h-8zM1063 790h4v2h-4zM211 792h4v2h-4zM259 792h4v2h-4zM267 792h4v2h-4zM275 792h4v2h-4zM283 792h20v2h-20zM307 792h172v2h-172zM483 792h40v2h-40zM527 792h68v2h-68zM655 792h4v2h-4zM683 792h4v2h-4zM719 792h4v2h-4zM763 792h4v2h-4zM803 792h4v2h-4zM811 792h4v2h-4zM1023 792h4v2h-4zM1063 792h4v2h-4zM211 794h4v2h-4zM259 794h4v2h-4zM283 794h4v2h-4zM291 794h8v2h-8zM307 794h12v2h-12zM323 794h20v2h-20zM351 794h44v2h-44zM399 794h16v2h-16zM419 794h20v2h-20zM443 794h40v2h-40zM487 794h84v2h-84zM579 794h8v2h-8zM719 794h4v2h-4zM315 796h4v2h-4zM355 796h24v2h-24zM383 796h8v2h-8zM399 796h4v2h-4zM407 796h8v2h-8zM419 796h8v2h-8zM431 796h4v2h-4zM451 796h8v2h-8zM463 796h4v2h-4zM471 796h12v2h-12zM491 796h28v2h-28zM523 796h40v2h-40zM567 796h4v2h-4zM359 798h4v2h-4zM387 798h4v2h-4zM399 798h4v2h-4zM419 798h8v2h-8zM463 798h4v2h-4zM471 798h8v2h-8zM491 798h12v2h-12zM507 798h12v2h-12zM523 798h12v2h-12zM543 798h12v2h-12zM559 798h4v2h-4zM567 798h4v2h-4zM499 800h4v2h-4zM511 800h4v2h-4zM523 800h12v2h-12zM547 800h4v2h-4zM527 802h4v2h-4zM547 802h4v2h-4zM527 804h4v2h-4zM67 834h4v2h-4zM75 834h4v2h-4zM123 834h8v2h-8zM163 834h4v2h-4zM207 834h4v2h-4zM215 834h4v2h-4zM223 834h8v2h-8zM243 834h8v2h-8zM259 834h4v2h-4zM275 834h4v2h-4zM291 834h4v2h-4zM315 834h8v2h-8zM327 834h4v2h-4zM335 834h4v2h-4zM367 834h4v2h-4zM375 834h4v2h-4zM391 834h8v2h-8zM411 834h4v2h-4zM419 834h4v2h-4zM435 834h4v2h-4zM463 834h4v2h-4zM495 834h4v2h-4zM503 834h4v2h-4zM519 834h4v2h-4zM547 834h8v2h-8zM559 834h4v2h-4zM567 834h12v2h-12zM591 834h4v2h-4zM615 834h4v2h-4zM659 834h8v2h-8zM691 834h4v2h-4zM711 834h4v2h-4zM731 834h4v2h-4zM755 834h4v2h-4zM811 834h4v2h-4zM819 834h8v2h-8zM831 834h4v2h-4zM855 834h4v2h-4zM879 834h4v2h-4zM891 834h4v2h-4zM903 834h4v2h-4zM927 834h4v2h-4zM935 834h12v2h-12zM951 834h4v2h-4zM963 834h4v2h-4zM995 834h4v2h-4zM1007 834h4v2h-4zM1023 834h4v2h-4zM1031 834h4v2h-4zM1039 834h12v2h-12zM1055 834h4v2h-4zM1071 834h8v2h-8zM1091 834h4v2h-4zM1099 834h4v2h-4zM67 836h4v2h-4zM75 836h20v2h-20zM99 836h8v2h-8zM111 836h4v2h-4zM119 836h12v2h-12zM167 836h4v2h-4zM187 836h4v2h-4zM195 836h4v2h-4zM211 836h4v2h-4zM219 836h4v2h-4zM235 836h4v2h-4zM243 836h4v2h-4zM267 836h4v2h-4zM279 836h4v2h-4zM287 836h4v2h-4zM303 836h8v2h-8zM339 836h4v2h-4zM399 836h4v2h-4zM411 836h4v2h-4zM423 836h4v2h-4zM447 836h4v2h-4zM455 836h4v2h-4zM471 836h8v2h-8zM487 836h4v2h-4zM499 836h4v2h-4zM507 836h4v2h-4zM551 836h8v2h-8zM563 836h4v2h-4zM615 836h12v2h-12zM631 836h4v2h-4zM643 836h8v2h-8zM663 836h4v2h-4zM679 836h12v2h-12zM703 836h4v2h-4zM711 836h4v2h-4zM735 836h4v2h-4zM763 836h4v2h-4zM795 836h4v2h-4zM803 836h4v2h-4zM851 836h4v2h-4zM859 836h4v2h-4zM871 836h4v2h-4zM895 836h4v2h-4zM903 836h4v2h-4zM951 836h4v2h-4zM963 836h4v2h-4zM975 836h4v2h-4zM999 836h4v2h-4zM1011 836h8v2h-8zM1031 836h8v2h-8zM1043 836h4v2h-4zM1059 836h4v2h-4zM67 838h40v2h-40zM111 838h20v2h-20zM191 838h4v2h-4zM199 838h8v2h-8zM211 838h8v2h-8zM239 838h4v2h-4zM251 838h4v2h-4zM259 838h12v2h-12zM275 838h8v2h-8zM287 838h4v2h-4zM303 838h8v2h-8zM315 838h8v2h-8zM371 838h4v2h-4zM379 838h4v2h-4zM443 838h4v2h-4zM459 838h4v2h-4zM475 838h4v2h-4zM487 838h4v2h-4zM503 838h4v2h-4zM515 838h8v2h-8zM535 838h4v2h-4zM543 838h4v2h-4zM563 838h4v2h-4zM571 838h4v2h-4zM591 838h4v2h-4zM603 838h12v2h-12zM619 838h8v2h-8zM635 838h4v2h-4zM643 838h4v2h-4zM651 838h4v2h-4zM671 838h12v2h-12zM695 838h4v2h-4zM711 838h4v2h-4zM739 838h8v2h-8zM751 838h4v2h-4zM771 838h4v2h-4zM779 838h4v2h-4zM795 838h8v2h-8zM823 838h8v2h-8zM863 838h4v2h-4zM875 838h4v2h-4zM887 838h4v2h-4zM915 838h4v2h-4zM975 838h4v2h-4zM983 838h8v2h-8zM1003 838h16v2h-16zM1023 838h8v2h-8zM1051 838h4v2h-4zM1099 838h4v2h-4zM83 840h24v2h-24zM111 840h20v2h-20zM215 840h4v2h-4zM243 840h4v2h-4zM251 840h4v2h-4zM279 840h16v2h-16zM299 840h8v2h-8zM359 840h4v2h-4zM371 840h4v2h-4zM391 840h4v2h-4zM427 840h8v2h-8zM447 840h16v2h-16zM471 840h8v2h-8zM487 840h8v2h-8zM503 840h4v2h-4zM519 840h8v2h-8zM531 840h20v2h-20zM563 840h4v2h-4zM571 840h4v2h-4zM603 840h12v2h-12zM627 840h4v2h-4zM639 840h20v2h-20zM663 840h8v2h-8zM683 840h12v2h-12zM699 840h8v2h-8zM715 840h8v2h-8zM727 840h4v2h-4zM739 840h4v2h-4zM747 840h16v2h-16zM791 840h4v2h-4zM803 840h8v2h-8zM819 840h4v2h-4zM859 840h4v2h-4zM871 840h16v2h-16zM911 840h8v2h-8zM931 840h8v2h-8zM943 840h4v2h-4zM951 840h16v2h-16zM975 840h8v2h-8zM1007 840h12v2h-12zM1043 840h12v2h-12zM1063 840h12v2h-12zM1079 840h4v2h-4zM1095 840h8v2h-8zM115 842h16v2h-16zM215 842h20v2h-20zM247 842h8v2h-8zM263 842h12v2h-12zM279 842h20v2h-20zM303 842h4v2h-4zM315 842h12v2h-12zM331 842h36v2h-36zM383 842h12v2h-12zM403 842h16v2h-16zM423 842h4v2h-4zM455 842h12v2h-12zM471 842h4v2h-4zM487 842h4v2h-4zM499 842h4v2h-4zM511 842h4v2h-4zM519 842h4v2h-4zM527 842h4v2h-4zM547 842h8v2h-8zM563 842h4v2h-4zM571 842h20v2h-20zM595 842h4v2h-4zM643 842h12v2h-12zM659 842h8v2h-8zM675 842h8v2h-8zM711 842h12v2h-12zM727 842h4v2h-4zM735 842h8v2h-8zM747 842h8v2h-8zM759 842h4v2h-4zM775 842h4v2h-4zM787 842h8v2h-8zM807 842h4v2h-4zM819 842h12v2h-12zM855 842h12v2h-12zM883 842h4v2h-4zM895 842h16v2h-16zM915 842h8v2h-8zM931 842h4v2h-4zM939 842h12v2h-12zM963 842h4v2h-4zM971 842h4v2h-4zM979 842h4v2h-4zM995 842h8v2h-8zM1055 842h8v2h-8zM1067 842h4v2h-4zM1079 842h4v2h-4zM1099 842h4v2h-4zM215 844h8v2h-8zM247 844h12v2h-12zM267 844h12v2h-12zM351 844h4v2h-4zM403 844h8v2h-8zM435 844h8v2h-8zM483 844h4v2h-4zM491 844h4v2h-4zM511 844h4v2h-4zM739 844h16v2h-16zM775 844h4v2h-4zM875 844h4v2h-4zM947 844h4v2h-4zM955 844h4v2h-4zM991 844h4v2h-4zM395 846h4v2h-4zM455 846h4v2h-4zM499 846h4v2h-4zM659 846h8v2h-8zM671 846h4v2h-4zM703 846h4v2h-4zM739 846h4v2h-4zM783 846h4v2h-4zM795 846h4v2h-4zM875 846h12v2h-12zM931 846h4v2h-4zM963 846h4v2h-4zM975 846h4v2h-4zM999 846h4v2h-4zM1047 846h4v2h-4zM1055 846h8v2h-8zM1071 846h4v2h-4zM323 848h4v2h-4zM411 848h4v2h-4zM435 848h4v2h-4zM503 848h8v2h-8zM523 848h4v2h-4zM651 848h8v2h-8zM671 848h4v2h-4zM771 848h8v2h-8zM795 848h4v2h-4zM803 848h4v2h-4zM935 848h4v2h-4zM975 848h4v2h-4zM243 850h4v2h-4zM251 850h12v2h-12zM295 850h4v2h-4zM487 850h4v2h-4zM555 850h8v2h-8zM587 850h8v2h-8zM611 850h4v2h-4zM663 850h4v2h-4zM707 850h4v2h-4zM879 850h4v2h-4zM899 850h4v2h-4zM943 850h8v2h-8zM983 850h12v2h-12zM1011 850h4v2h-4zM1063 850h4v2h-4zM67 864h8v2h-8zM67 866h20v2h-20zM67 868h32v2h-32zM67 870h44v2h-44zM71 872h52v2h-52zM75 874h56v2h-56zM71 876h4v2h-4zM95 876h36v2h-36zM75 878h4v2h-4zM91 878h8v2h-8zM103 878h28v2h-28zM83 880h4v2h-4zM91 880h4v2h-4zM99 880h4v2h-4zM107 880h4v2h-4zM115 880h16v2h-16zM67 882h4v2h-4zM75 882h4v2h-4zM91 882h4v2h-4zM115 882h4v2h-4zM123 882h8v2h-8zM83 884h4v2h-4zM99 884h8v2h-8zM115 884h8v2h-8zM131 884h4v2h-4zM75 886h4v2h-4zM91 886h4v2h-4zM99 886h4v2h-4zM291 886h4v2h-4zM339 886h4v2h-4zM427 886h4v2h-4zM447 886h4v2h-4zM471 886h4v2h-4zM511 886h4v2h-4zM543 886h4v2h-4zM563 886h8v2h-8zM583 886h4v2h-4zM655 886h4v2h-4zM743 886h4v2h-4zM851 886h4v2h-4zM875 886h4v2h-4zM919 886h8v2h-8zM1043 886h12v2h-12zM1079 886h4v2h-4zM1103 886h1v2h-1zM67 888h8v2h-8zM99 888h4v2h-4zM119 888h4v2h-4zM143 888h4v2h-4zM231 888h4v2h-4zM255 888h4v2h-4zM263 888h8v2h-8zM279 888h4v2h-4zM351 888h4v2h-4zM359 888h8v2h-8zM375 888h8v2h-8zM419 888h4v2h-4zM435 888h12v2h-12zM519 888h4v2h-4zM611 888h4v2h-4zM707 888h4v2h-4zM803 888h4v2h-4zM815 888h4v2h-4zM823 888h4v2h-4zM879 888h4v2h-4zM943 888h4v2h-4zM963 888h4v2h-4zM999 888h4v2h-4zM1055 888h8v2h-8zM1079 888h4v2h-4zM95 890h4v2h-4zM103 890h8v2h-8zM139 890h8v2h-8zM163 890h4v2h-4zM215 890h4v2h-4zM227 890h4v2h-4zM235 890h4v2h-4zM335 890h8v2h-8zM387 890h4v2h-4zM435 890h8v2h-8zM483 890h4v2h-4zM571 890h4v2h-4zM595 890h16v2h-16zM627 890h4v2h-4zM691 890h8v2h-8zM711 890h4v2h-4zM903 890h12v2h-12zM931 890h4v2h-4zM95 892h4v2h-4zM107 892h8v2h-8zM139 892h4v2h-4zM159 892h4v2h-4zM215 892h4v2h-4zM275 892h4v2h-4zM335 892h4v2h-4zM343 892h4v2h-4zM351 892h4v2h-4zM431 892h4v2h-4zM455 892h4v2h-4zM479 892h8v2h-8zM575 892h4v2h-4zM611 892h4v2h-4zM631 892h8v2h-8zM667 892h4v2h-4zM715 892h8v2h-8zM759 892h4v2h-4zM803 892h12v2h-12zM875 892h4v2h-4zM947 892h4v2h-4zM1035 892h12v2h-12zM79 894h8v2h-8zM99 894h4v2h-4zM107 894h4v2h-4zM135 894h4v2h-4zM143 894h4v2h-4zM151 894h4v2h-4zM163 894h4v2h-4zM187 894h4v2h-4zM227 894h4v2h-4zM235 894h8v2h-8zM247 894h4v2h-4zM263 894h4v2h-4zM275 894h8v2h-8zM287 894h8v2h-8zM327 894h4v2h-4zM335 894h4v2h-4zM363 894h12v2h-12zM383 894h4v2h-4zM391 894h12v2h-12zM407 894h4v2h-4zM423 894h4v2h-4zM451 894h4v2h-4zM459 894h8v2h-8zM471 894h4v2h-4zM487 894h12v2h-12zM503 894h8v2h-8zM519 894h4v2h-4zM527 894h4v2h-4zM551 894h4v2h-4zM563 894h12v2h-12zM583 894h12v2h-12zM603 894h16v2h-16zM631 894h20v2h-20zM659 894h4v2h-4zM679 894h4v2h-4zM687 894h12v2h-12zM711 894h8v2h-8zM723 894h16v2h-16zM743 894h28v2h-28zM779 894h8v2h-8zM799 894h12v2h-12zM823 894h8v2h-8zM855 894h16v2h-16zM875 894h52v2h-52zM931 894h8v2h-8zM947 894h4v2h-4zM955 894h12v2h-12zM975 894h4v2h-4zM991 894h4v2h-4zM999 894h4v2h-4zM1007 894h4v2h-4zM1019 894h4v2h-4zM1027 894h4v2h-4zM1047 894h28v2h-28zM1083 894h4v2h-4zM1091 894h4v2h-4zM1103 894h1v2h-1zM67 896h4v2h-4zM75 896h12v2h-12zM115 896h4v2h-4zM123 896h4v2h-4zM135 896h4v2h-4zM155 896h4v2h-4zM171 896h4v2h-4zM179 896h4v2h-4zM195 896h4v2h-4zM203 896h4v2h-4zM235 896h4v2h-4zM243 896h4v2h-4zM271 896h8v2h-8zM299 896h4v2h-4zM319 896h4v2h-4zM363 896h4v2h-4zM371 896h4v2h-4zM383 896h4v2h-4zM403 896h8v2h-8zM415 896h4v2h-4zM431 896h4v2h-4zM483 896h12v2h-12zM503 896h8v2h-8zM515 896h8v2h-8zM535 896h4v2h-4zM547 896h4v2h-4zM555 896h4v2h-4zM575 896h8v2h-8zM587 896h12v2h-12zM603 896h4v2h-4zM615 896h4v2h-4zM627 896h4v2h-4zM643 896h4v2h-4zM663 896h8v2h-8zM679 896h4v2h-4zM695 896h4v2h-4zM715 896h4v2h-4zM723 896h4v2h-4zM751 896h12v2h-12zM767 896h12v2h-12zM827 896h4v2h-4zM859 896h4v2h-4zM867 896h4v2h-4zM883 896h4v2h-4zM903 896h4v2h-4zM919 896h4v2h-4zM943 896h4v2h-4zM959 896h8v2h-8zM975 896h4v2h-4zM995 896h4v2h-4zM1015 896h4v2h-4zM1035 896h4v2h-4zM1051 896h8v2h-8zM1071 896h4v2h-4zM1079 896h8v2h-8zM1103 896h1v2h-1zM83 898h4v2h-4zM131 898h4v2h-4zM163 898h4v2h-4zM179 898h4v2h-4zM187 898h4v2h-4zM199 898h4v2h-4zM211 898h4v2h-4zM219 898h4v2h-4zM227 898h4v2h-4zM263 898h4v2h-4zM271 898h12v2h-12zM295 898h8v2h-8zM315 898h4v2h-4zM327 898h8v2h-8zM347 898h4v2h-4zM355 898h4v2h-4zM379 898h4v2h-4zM395 898h4v2h-4zM407 898h4v2h-4zM415 898h4v2h-4zM431 898h8v2h-8zM443 898h4v2h-4zM455 898h4v2h-4zM471 898h4v2h-4zM511 898h4v2h-4zM523 898h4v2h-4zM559 898h12v2h-12zM607 898h8v2h-8zM619 898h4v2h-4zM663 898h4v2h-4zM675 898h4v2h-4zM703 898h4v2h-4zM711 898h4v2h-4zM723 898h8v2h-8zM743 898h8v2h-8zM767 898h4v2h-4zM779 898h4v2h-4zM803 898h12v2h-12zM863 898h4v2h-4zM871 898h4v2h-4zM915 898h4v2h-4zM931 898h4v2h-4zM939 898h4v2h-4zM959 898h4v2h-4zM995 898h16v2h-16zM1027 898h4v2h-4zM1035 898h8v2h-8zM1051 898h12v2h-12zM1079 898h8v2h-8zM1095 898h8v2h-8zM67 900h8v2h-8zM103 900h4v2h-4zM123 900h4v2h-4zM139 900h4v2h-4zM155 900h4v2h-4zM167 900h8v2h-8zM191 900h4v2h-4zM211 900h4v2h-4zM231 900h4v2h-4zM243 900h8v2h-8zM263 900h4v2h-4zM295 900h12v2h-12zM315 900h4v2h-4zM335 900h4v2h-4zM347 900h4v2h-4zM371 900h4v2h-4zM395 900h4v2h-4zM403 900h8v2h-8zM423 900h8v2h-8zM459 900h4v2h-4zM467 900h8v2h-8zM483 900h4v2h-4zM491 900h4v2h-4zM499 900h4v2h-4zM507 900h4v2h-4zM515 900h4v2h-4zM523 900h4v2h-4zM563 900h4v2h-4zM583 900h8v2h-8zM599 900h4v2h-4zM611 900h4v2h-4zM619 900h4v2h-4zM631 900h16v2h-16zM651 900h16v2h-16zM671 900h4v2h-4zM679 900h4v2h-4zM695 900h4v2h-4zM703 900h4v2h-4zM711 900h4v2h-4zM735 900h4v2h-4zM763 900h4v2h-4zM771 900h8v2h-8zM783 900h4v2h-4zM815 900h4v2h-4zM855 900h4v2h-4zM863 900h4v2h-4zM871 900h4v2h-4zM895 900h4v2h-4zM907 900h4v2h-4zM943 900h8v2h-8zM959 900h4v2h-4zM967 900h4v2h-4zM991 900h8v2h-8zM1007 900h4v2h-4zM1019 900h4v2h-4zM1043 900h4v2h-4zM1059 900h8v2h-8zM1071 900h4v2h-4zM1079 900h4v2h-4zM1087 900h8v2h-8zM1099 900h4v2h-4zM67 902h16v2h-16zM103 902h4v2h-4zM111 902h8v2h-8zM135 902h4v2h-4zM143 902h4v2h-4zM167 902h4v2h-4zM195 902h8v2h-8zM231 902h4v2h-4zM239 902h4v2h-4zM259 902h4v2h-4zM279 902h4v2h-4zM299 902h4v2h-4zM315 902h4v2h-4zM323 902h4v2h-4zM339 902h4v2h-4zM363 902h4v2h-4zM387 902h12v2h-12zM407 902h4v2h-4zM443 902h8v2h-8zM467 902h4v2h-4zM475 902h4v2h-4zM483 902h4v2h-4zM491 902h8v2h-8zM507 902h4v2h-4zM523 902h4v2h-4zM579 902h8v2h-8zM627 902h4v2h-4zM635 902h8v2h-8zM651 902h8v2h-8zM671 902h4v2h-4zM683 902h4v2h-4zM691 902h4v2h-4zM699 902h4v2h-4zM723 902h8v2h-8zM735 902h4v2h-4zM767 902h4v2h-4zM775 902h16v2h-16zM807 902h16v2h-16zM855 902h8v2h-8zM867 902h4v2h-4zM875 902h4v2h-4zM887 902h4v2h-4zM911 902h4v2h-4zM935 902h4v2h-4zM947 902h8v2h-8zM963 902h4v2h-4zM971 902h4v2h-4zM983 902h8v2h-8zM999 902h4v2h-4zM1011 902h4v2h-4zM1043 902h4v2h-4zM1063 902h4v2h-4zM1075 902h4v2h-4zM1095 902h9v2h-9zM483 940h4v2h-4zM519 940h4v2h-4zM67 942h4v2h-4zM343 942h8v2h-8zM395 942h4v2h-4zM415 942h4v2h-4zM439 942h4v2h-4zM467 942h4v2h-4zM483 942h8v2h-8zM503 942h4v2h-4zM519 942h4v2h-4zM535 942h4v2h-4zM595 942h4v2h-4zM695 942h4v2h-4zM707 942h4v2h-4zM735 942h4v2h-4zM751 942h4v2h-4zM1099 942h5v2h-5zM67 944h4v2h-4zM79 944h8v2h-8zM99 944h8v2h-8zM303 944h4v2h-4zM319 944h4v2h-4zM331 944h24v2h-24zM379 944h4v2h-4zM391 944h8v2h-8zM403 944h4v2h-4zM415 944h4v2h-4zM427 944h4v2h-4zM435 944h16v2h-16zM459 944h4v2h-4zM467 944h4v2h-4zM479 944h16v2h-16zM503 944h8v2h-8zM515 944h8v2h-8zM535 944h8v2h-8zM571 944h8v2h-8zM595 944h4v2h-4zM651 944h4v2h-4zM671 944h4v2h-4zM691 944h8v2h-8zM707 944h4v2h-4zM715 944h4v2h-4zM735 944h4v2h-4zM743 944h4v2h-4zM751 944h4v2h-4zM767 944h8v2h-8zM875 944h4v2h-4zM915 944h4v2h-4zM1055 944h4v2h-4zM1087 944h4v2h-4zM1095 944h9v2h-9zM67 946h8v2h-8zM79 946h12v2h-12zM99 946h8v2h-8zM143 946h4v2h-4zM279 946h4v2h-4zM287 946h4v2h-4zM299 946h8v2h-8zM311 946h4v2h-4zM319 946h40v2h-40zM363 946h24v2h-24zM391 946h8v2h-8zM403 946h16v2h-16zM427 946h72v2h-72zM503 946h24v2h-24zM531 946h16v2h-16zM551 946h8v2h-8zM563 946h4v2h-4zM571 946h8v2h-8zM591 946h20v2h-20zM615 946h4v2h-4zM623 946h12v2h-12zM643 946h12v2h-12zM663 946h20v2h-20zM687 946h12v2h-12zM703 946h16v2h-16zM731 946h16v2h-16zM751 946h8v2h-8zM767 946h8v2h-8zM783 946h20v2h-20zM823 946h4v2h-4zM831 946h4v2h-4zM859 946h4v2h-4zM871 946h12v2h-12zM915 946h4v2h-4zM943 946h4v2h-4zM975 946h4v2h-4zM983 946h4v2h-4zM1047 946h16v2h-16zM1071 946h33v2h-33zM67 948h48v2h-48zM123 948h8v2h-8zM135 948h12v2h-12zM179 948h4v2h-4zM187 948h4v2h-4zM195 948h4v2h-4zM223 948h4v2h-4zM247 948h4v2h-4zM255 948h4v2h-4zM263 948h4v2h-4zM271 948h4v2h-4zM279 948h4v2h-4zM287 948h4v2h-4zM295 948h252v2h-252zM551 948h16v2h-16zM571 948h84v2h-84zM663 948h20v2h-20zM687 948h32v2h-32zM723 948h36v2h-36zM767 948h36v2h-36zM815 948h20v2h-20zM855 948h40v2h-40zM911 948h8v2h-8zM923 948h4v2h-4zM943 948h4v2h-4zM951 948h12v2h-12zM975 948h12v2h-12zM995 948h4v2h-4zM1011 948h12v2h-12zM1031 948h32v2h-32zM1067 948h37v2h-37zM67 950h8v2h-8zM79 950h52v2h-52zM135 950h32v2h-32zM179 950h4v2h-4zM187 950h4v2h-4zM195 950h4v2h-4zM203 950h4v2h-4zM215 950h4v2h-4zM223 950h8v2h-8zM235 950h24v2h-24zM263 950h456v2h-456zM723 950h88v2h-88zM815 950h20v2h-20zM851 950h44v2h-44zM899 950h8v2h-8zM911 950h16v2h-16zM931 950h4v2h-4zM939 950h24v2h-24zM975 950h16v2h-16zM995 950h12v2h-12zM1011 950h12v2h-12zM1027 950h77v2h-77zM71 952h4v2h-4zM79 952h52v2h-52zM135 952h76v2h-76zM215 952h104v2h-104zM323 952h8v2h-8zM335 952h32v2h-32zM375 952h4v2h-4zM383 952h12v2h-12zM399 952h24v2h-24zM427 952h20v2h-20zM451 952h56v2h-56zM511 952h208v2h-208zM723 952h88v2h-88zM815 952h20v2h-20zM851 952h253v2h-253zM71 954h4v2h-4zM79 954h4v2h-4zM91 954h120v2h-120zM215 954h56v2h-56zM275 954h28v2h-28zM307 954h12v2h-12zM327 954h4v2h-4zM335 954h4v2h-4zM355 954h4v2h-4zM363 954h4v2h-4zM375 954h4v2h-4zM387 954h8v2h-8zM399 954h12v2h-12zM431 954h16v2h-16zM451 954h4v2h-4zM463 954h8v2h-8zM475 954h8v2h-8zM487 954h20v2h-20zM515 954h136v2h-136zM655 954h84v2h-84zM743 954h8v2h-8zM755 954h4v2h-4zM763 954h48v2h-48zM815 954h16v2h-16zM851 954h16v2h-16zM871 954h44v2h-44zM919 954h36v2h-36zM959 954h20v2h-20zM983 954h84v2h-84zM1071 954h33v2h-33zM71 956h4v2h-4zM95 956h4v2h-4zM111 956h12v2h-12zM139 956h72v2h-72zM215 956h24v2h-24zM243 956h28v2h-28zM283 956h8v2h-8zM307 956h4v2h-4zM363 956h4v2h-4zM391 956h4v2h-4zM403 956h8v2h-8zM439 956h4v2h-4zM451 956h4v2h-4zM479 956h4v2h-4zM491 956h16v2h-16zM519 956h12v2h-12zM543 956h8v2h-8zM563 956h28v2h-28zM595 956h4v2h-4zM603 956h4v2h-4zM611 956h12v2h-12zM631 956h4v2h-4zM639 956h4v2h-4zM647 956h4v2h-4zM655 956h4v2h-4zM667 956h40v2h-40zM711 956h4v2h-4zM723 956h12v2h-12zM743 956h8v2h-8zM755 956h4v2h-4zM763 956h20v2h-20zM787 956h4v2h-4zM795 956h16v2h-16zM815 956h16v2h-16zM851 956h12v2h-12zM871 956h12v2h-12zM887 956h20v2h-20zM935 956h20v2h-20zM959 956h4v2h-4zM967 956h4v2h-4zM983 956h4v2h-4zM991 956h8v2h-8zM1003 956h12v2h-12zM1023 956h12v2h-12zM1051 956h12v2h-12zM1071 956h8v2h-8zM1087 956h17v2h-17zM115 958h4v2h-4zM139 958h8v2h-8zM151 958h4v2h-4zM159 958h8v2h-8zM179 958h8v2h-8zM191 958h20v2h-20zM215 958h4v2h-4zM223 958h16v2h-16zM251 958h8v2h-8zM263 958h8v2h-8zM479 958h4v2h-4zM523 958h4v2h-4zM563 958h20v2h-20zM587 958h4v2h-4zM603 958h4v2h-4zM619 958h4v2h-4zM631 958h4v2h-4zM655 958h4v2h-4zM667 958h12v2h-12zM691 958h4v2h-4zM703 958h4v2h-4zM723 958h8v2h-8zM803 958h8v2h-8zM823 958h8v2h-8zM875 958h4v2h-4zM891 958h4v2h-4zM903 958h4v2h-4zM935 958h4v2h-4zM947 958h4v2h-4zM967 958h4v2h-4zM1003 958h8v2h-8zM1027 958h4v2h-4zM1055 958h4v2h-4zM1091 958h8v2h-8zM139 960h4v2h-4zM151 960h4v2h-4zM159 960h8v2h-8zM179 960h8v2h-8zM191 960h12v2h-12zM223 960h12v2h-12zM251 960h4v2h-4zM667 960h4v2h-4zM675 960h4v2h-4zM691 960h4v2h-4zM807 960h4v2h-4zM823 960h4v2h-4zM935 960h4v2h-4zM947 960h4v2h-4zM967 960h4v2h-4zM1027 960h4v2h-4zM183 962h4v2h-4zM191 962h4v2h-4zM227 962h8v2h-8zM675 962h4v2h-4zM231 964h4v2h-4zM675 964h4v2h-4z"/>
<path fill="#000000" d="M835 750h16v2h-16zM835 752h16v2h-16zM835 754h16v2h-16zM835 756h16v2h-16zM835 758h16v2h-16zM835 760h16v2h-16zM835 762h16v2h-16zM835 764h16v2h-16zM835 766h16v2h-16zM835 768h16v2h-16zM835 770h16v2h-16zM835 772h16v2h-16zM835 774h16v2h-16zM835 776h16v2h-16zM835 778h16v2h-16zM835 780h16v2h-16zM835 782h16v2h-16zM835 784h16v2h-16zM839 786h12v2h-12zM839 788h12v2h-12zM839 790h12v2h-12zM839 792h12v2h-12zM839 794h12v2h-12zM839 796h12v2h-12zM839 798h12v2h-12zM835 952h16v2h-16zM835 954h16v2h-16zM835 956h16v2h-16zM835 958h16v2h-16zM835 960h16v2h-16zM835 962h16v2h-16zM835 964h16v2h-16zM835 966h16v2h-16zM835 968h16v2h-16zM835 970h16v2h-16zM835 972h16v2h-16zM835 974h16v2h-16zM835 976h16v2h-16zM835 978h16v2h-16zM835 980h16v2h-16zM835 982h16v2h-16zM835 984h16v2h-16zM835 986h16v2h-16zM835 988h16v2h-16z"/>
<path fill="#ffff00" d="M831 762h4v2h-4zM831 772h4v2h-4zM831 780h4v2h-4zM831 782h4v2h-4zM967 804h16v2h-16zM987 804h16v2h-16zM959 806h12v2h-12zM975 806h8v2h-8zM987 806h20v2h-20zM667 808h12v2h-12zM955 808h28v2h-28zM987 808h24v2h-24zM667 810h12v2h-12zM951 810h40v2h-40zM995 810h20v2h-20zM667 812h12v2h-12zM831 812h4v2h-4zM951 812h56v2h-56zM1011 812h4v2h-4zM667 814h12v2h-12zM951 814h24v2h-24zM979 814h36v2h-36zM667 816h12v2h-12zM951 816h12v2h-12zM967 816h4v2h-4zM975 816h40v2h-40zM831 818h4v2h-4zM955 818h24v2h-24zM983 818h28v2h-28zM831 820h4v2h-4zM963 820h24v2h-24zM991 820h12v2h-12zM767 822h28v2h-28zM963 822h40v2h-40zM767 824h16v2h-16zM791 824h4v2h-4zM767 826h8v2h-8zM783 826h16v2h-16zM763 828h20v2h-20zM787 828h12v2h-12zM831 828h4v2h-4zM763 830h20v2h-20zM787 830h12v2h-12zM831 830h4v2h-4zM763 832h24v2h-24zM791 832h8v2h-8zM831 832h4v2h-4zM763 834h36v2h-36zM767 836h28v2h-28zM307 840h4v2h-4zM327 840h4v2h-4zM379 840h8v2h-8zM395 840h4v2h-4zM515 840h4v2h-4zM567 840h4v2h-4zM587 840h12v2h-12zM659 840h4v2h-4zM743 840h4v2h-4zM783 840h4v2h-4zM823 840h4v2h-4zM851 840h8v2h-8zM919 840h4v2h-4zM995 840h4v2h-4zM379 842h4v2h-4zM515 842h4v2h-4zM639 842h4v2h-4zM667 842h4v2h-4zM695 842h12v2h-12zM767 842h8v2h-8zM779 842h8v2h-8zM803 842h4v2h-4zM879 842h4v2h-4zM987 842h4v2h-4zM1003 842h8v2h-8zM1083 842h4v2h-4zM1091 842h8v2h-8zM1103 842h1v2h-1zM259 894h4v2h-4zM283 894h4v2h-4zM299 894h4v2h-4zM307 894h12v2h-12zM355 894h4v2h-4zM435 894h12v2h-12zM455 894h4v2h-4zM523 894h4v2h-4zM535 894h4v2h-4zM619 894h4v2h-4zM683 894h4v2h-4zM703 894h8v2h-8zM739 894h4v2h-4zM871 894h4v2h-4zM939 894h4v2h-4zM967 894h8v2h-8zM979 894h8v2h-8zM995 894h4v2h-4zM1023 894h4v2h-4zM1031 894h8v2h-8zM1043 894h4v2h-4zM1087 894h4v2h-4zM975 914h44v2h-44zM971 916h56v2h-56zM831 918h4v2h-4zM967 918h16v2h-16zM987 918h44v2h-44zM963 920h72v2h-72zM959 922h16v2h-16zM979 922h24v2h-24zM1007 922h12v2h-12zM1023 922h12v2h-12zM959 924h12v2h-12zM975 924h60v2h-60zM959 926h16v2h-16zM979 926h4v2h-4zM987 926h28v2h-28zM1019 926h16v2h-16zM963 928h72v2h-72zM967 930h44v2h-44zM1015 930h16v2h-16zM971 932h56v2h-56zM831 934h4v2h-4zM975 934h44v2h-44zM831 936h4v2h-4zM831 938h4v2h-4zM831 960h4v2h-4zM831 968h4v2h-4zM831 972h4v2h-4zM831 974h4v2h-4zM831 980h4v2h-4z"/>
<path fill="#c0ff00" d="M955 794h4v2h-4zM651 796h4v2h-4zM663 796h4v2h-4zM683 796h4v2h-4zM931 796h4v2h-4zM939 796h8v2h-8zM951 796h8v2h-8zM963 796h4v2h-4zM971 796h4v2h-4zM979 796h4v2h-4zM635 798h4v2h-4zM643 798h12v2h-12zM659 798h8v2h-8zM671 798h4v2h-4zM679 798h12v2h-12zM695 798h4v2h-4zM915 798h4v2h-4zM923 798h12v2h-12zM939 798h8v2h-8zM951 798h16v2h-16zM971 798h12v2h-12zM987 798h4v2h-4zM135 800h4v2h-4zM635 800h32v2h-32zM671 800h4v2h-4zM679 800h24v2h-24zM707 800h4v2h-4zM915 800h32v2h-32zM951 800h44v2h-44zM999 800h4v2h-4zM135 802h4v2h-4zM147 802h4v2h-4zM171 802h4v2h-4zM627 802h48v2h-48zM679 802h44v2h-44zM739 802h4v2h-4zM907 802h40v2h-40zM951 802h44v2h-44zM999 802h4v2h-4zM1015 802h4v2h-4zM135 804h8v2h-8zM147 804h4v2h-4zM171 804h4v2h-4zM187 804h4v2h-4zM211 804h4v2h-4zM239 804h4v2h-4zM271 804h4v2h-4zM319 804h4v2h-4zM331 804h4v2h-4zM395 804h4v2h-4zM447 804h4v2h-4zM623 804h52v2h-52zM679 804h44v2h-44zM731 804h12v2h-12zM751 804h4v2h-4zM759 804h4v2h-4zM907 804h40v2h-40zM951 804h16v2h-16zM983 804h4v2h-4zM1003 804h16v2h-16zM135 806h8v2h-8zM147 806h4v2h-4zM171 806h4v2h-4zM187 806h4v2h-4zM211 806h4v2h-4zM219 806h4v2h-4zM239 806h4v2h-4zM247 806h4v2h-4zM271 806h8v2h-8zM291 806h4v2h-4zM299 806h8v2h-8zM319 806h8v2h-8zM331 806h4v2h-4zM339 806h4v2h-4zM347 806h4v2h-4zM359 806h4v2h-4zM367 806h8v2h-8zM383 806h4v2h-4zM395 806h4v2h-4zM411 806h16v2h-16zM431 806h8v2h-8zM443 806h8v2h-8zM623 806h52v2h-52zM679 806h84v2h-84zM895 806h8v2h-8zM907 806h40v2h-40zM951 806h8v2h-8zM971 806h4v2h-4zM983 806h4v2h-4zM1007 806h12v2h-12zM1023 806h4v2h-4zM1031 806h4v2h-4zM135 808h8v2h-8zM147 808h4v2h-4zM171 808h4v2h-4zM187 808h4v2h-4zM203 808h12v2h-12zM219 808h8v2h-8zM235 808h16v2h-16zM255 808h4v2h-4zM267 808h40v2h-40zM311 808h32v2h-32zM347 808h16v2h-16zM367 808h12v2h-12zM383 808h20v2h-20zM407 808h20v2h-20zM431 808h24v2h-24zM459 808h4v2h-4zM623 808h44v2h-44zM679 808h96v2h-96zM783 808h4v2h-4zM891 808h64v2h-64zM983 808h4v2h-4zM1011 808h8v2h-8zM1023 808h4v2h-4zM1031 808h16v2h-16zM135 810h8v2h-8zM147 810h4v2h-4zM171 810h4v2h-4zM187 810h4v2h-4zM203 810h12v2h-12zM219 810h8v2h-8zM235 810h24v2h-24zM263 810h80v2h-80zM347 810h32v2h-32zM383 810h44v2h-44zM431 810h24v2h-24zM459 810h8v2h-8zM507 810h4v2h-4zM615 810h52v2h-52zM679 810h112v2h-112zM879 810h4v2h-4zM891 810h60v2h-60zM991 810h4v2h-4zM1015 810h4v2h-4zM1023 810h28v2h-28zM135 812h8v2h-8zM147 812h4v2h-4zM171 812h4v2h-4zM187 812h4v2h-4zM203 812h12v2h-12zM219 812h12v2h-12zM235 812h24v2h-24zM263 812h80v2h-80zM347 812h32v2h-32zM383 812h44v2h-44zM431 812h24v2h-24zM459 812h12v2h-12zM483 812h8v2h-8zM507 812h8v2h-8zM591 812h4v2h-4zM599 812h4v2h-4zM611 812h56v2h-56zM679 812h120v2h-120zM811 812h4v2h-4zM863 812h4v2h-4zM871 812h12v2h-12zM891 812h60v2h-60zM1007 812h4v2h-4zM1015 812h40v2h-40zM135 814h8v2h-8zM147 814h8v2h-8zM171 814h4v2h-4zM187 814h4v2h-4zM203 814h28v2h-28zM235 814h108v2h-108zM347 814h124v2h-124zM483 814h20v2h-20zM507 814h12v2h-12zM531 814h12v2h-12zM551 814h12v2h-12zM583 814h4v2h-4zM591 814h12v2h-12zM607 814h60v2h-60zM679 814h124v2h-124zM811 814h4v2h-4zM851 814h4v2h-4zM859 814h8v2h-8zM871 814h12v2h-12zM891 814h60v2h-60zM975 814h4v2h-4zM1015 814h40v2h-40zM135 816h8v2h-8zM147 816h8v2h-8zM171 816h4v2h-4zM187 816h44v2h-44zM235 816h236v2h-236zM479 816h24v2h-24zM507 816h56v2h-56zM567 816h8v2h-8zM579 816h88v2h-88zM679 816h128v2h-128zM811 816h4v2h-4zM831 816h4v2h-4zM851 816h4v2h-4zM859 816h8v2h-8zM871 816h16v2h-16zM891 816h60v2h-60zM963 816h4v2h-4zM971 816h4v2h-4zM1015 816h52v2h-52zM135 818h8v2h-8zM147 818h8v2h-8zM171 818h4v2h-4zM187 818h44v2h-44zM235 818h240v2h-240zM479 818h24v2h-24zM507 818h56v2h-56zM567 818h8v2h-8zM579 818h244v2h-244zM851 818h4v2h-4zM859 818h96v2h-96zM979 818h4v2h-4zM1011 818h56v2h-56zM135 820h8v2h-8zM147 820h8v2h-8zM171 820h4v2h-4zM187 820h316v2h-316zM507 820h56v2h-56zM567 820h8v2h-8zM579 820h244v2h-244zM851 820h4v2h-4zM859 820h104v2h-104zM987 820h4v2h-4zM1003 820h64v2h-64zM135 822h8v2h-8zM147 822h8v2h-8zM171 822h4v2h-4zM187 822h316v2h-316zM507 822h56v2h-56zM567 822h8v2h-8zM579 822h188v2h-188zM795 822h40v2h-40zM851 822h112v2h-112zM1003 822h64v2h-64zM1071 822h12v2h-12zM135 824h8v2h-8zM147 824h8v2h-8zM171 824h4v2h-4zM187 824h580v2h-580zM783 824h8v2h-8zM795 824h40v2h-40zM851 824h236v2h-236zM135 826h8v2h-8zM147 826h8v2h-8zM171 826h4v2h-4zM187 826h580v2h-580zM775 826h8v2h-8zM799 826h36v2h-36zM851 826h236v2h-236zM135 828h8v2h-8zM147 828h8v2h-8zM171 828h4v2h-4zM187 828h576v2h-576zM783 828h4v2h-4zM799 828h32v2h-32zM851 828h240v2h-240zM135 830h8v2h-8zM147 830h8v2h-8zM171 830h4v2h-4zM187 830h576v2h-576zM783 830h4v2h-4zM799 830h32v2h-32zM851 830h240v2h-240zM75 832h4v2h-4zM135 832h8v2h-8zM147 832h8v2h-8zM171 832h4v2h-4zM187 832h576v2h-576zM787 832h4v2h-4zM799 832h32v2h-32zM851 832h244v2h-244zM123 904h56v2h-56zM183 904h4v2h-4zM207 904h4v2h-4zM215 904h8v2h-8zM227 904h8v2h-8zM239 904h596v2h-596zM851 904h253v2h-253zM123 906h56v2h-56zM183 906h4v2h-4zM207 906h4v2h-4zM215 906h8v2h-8zM227 906h8v2h-8zM239 906h596v2h-596zM851 906h253v2h-253zM123 908h56v2h-56zM183 908h4v2h-4zM207 908h4v2h-4zM215 908h8v2h-8zM227 908h8v2h-8zM239 908h596v2h-596zM851 908h240v2h-240zM1095 908h9v2h-9zM123 910h56v2h-56zM183 910h4v2h-4zM207 910h4v2h-4zM215 910h8v2h-8zM227 910h8v2h-8zM239 910h596v2h-596zM851 910h240v2h-240zM1095 910h9v2h-9zM123 912h56v2h-56zM183 912h4v2h-4zM207 912h4v2h-4zM215 912h8v2h-8zM227 912h8v2h-8zM239 912h596v2h-596zM851 912h240v2h-240zM1095 912h9v2h-9zM123 914h56v2h-56zM183 914h4v2h-4zM207 914h4v2h-4zM215 914h8v2h-8zM227 914h8v2h-8zM239 914h316v2h-316zM559 914h276v2h-276zM851 914h56v2h-56zM911 914h64v2h-64zM1019 914h60v2h-60zM1087 914h4v2h-4zM1095 914h8v2h-8zM123 916h56v2h-56zM183 916h4v2h-4zM207 916h4v2h-4zM215 916h8v2h-8zM227 916h8v2h-8zM239 916h292v2h-292zM535 916h8v2h-8zM547 916h8v2h-8zM559 916h256v2h-256zM819 916h16v2h-16zM851 916h56v2h-56zM911 916h60v2h-60zM1027 916h40v2h-40zM123 918h56v2h-56zM183 918h4v2h-4zM207 918h4v2h-4zM215 918h8v2h-8zM227 918h8v2h-8zM239 918h292v2h-292zM535 918h8v2h-8zM547 918h8v2h-8zM559 918h52v2h-52zM615 918h168v2h-168zM787 918h12v2h-12zM803 918h12v2h-12zM819 918h12v2h-12zM851 918h56v2h-56zM911 918h56v2h-56zM983 918h4v2h-4zM1031 918h36v2h-36zM123 920h56v2h-56zM183 920h4v2h-4zM207 920h4v2h-4zM215 920h8v2h-8zM227 920h8v2h-8zM239 920h292v2h-292zM535 920h8v2h-8zM547 920h8v2h-8zM559 920h52v2h-52zM615 920h168v2h-168zM787 920h12v2h-12zM803 920h8v2h-8zM819 920h12v2h-12zM851 920h12v2h-12zM871 920h36v2h-36zM911 920h52v2h-52zM1035 920h32v2h-32zM127 922h8v2h-8zM139 922h16v2h-16zM159 922h20v2h-20zM183 922h4v2h-4zM207 922h4v2h-4zM215 922h8v2h-8zM227 922h8v2h-8zM239 922h52v2h-52zM295 922h4v2h-4zM303 922h64v2h-64zM371 922h136v2h-136zM511 922h20v2h-20zM535 922h8v2h-8zM547 922h4v2h-4zM563 922h12v2h-12zM587 922h4v2h-4zM595 922h16v2h-16zM615 922h168v2h-168zM787 922h12v2h-12zM803 922h8v2h-8zM823 922h8v2h-8zM875 922h4v2h-4zM887 922h20v2h-20zM911 922h4v2h-4zM919 922h40v2h-40zM975 922h4v2h-4zM1003 922h4v2h-4zM1019 922h4v2h-4zM1035 922h28v2h-28zM127 924h8v2h-8zM139 924h8v2h-8zM151 924h4v2h-4zM159 924h20v2h-20zM183 924h4v2h-4zM207 924h4v2h-4zM215 924h8v2h-8zM227 924h8v2h-8zM239 924h52v2h-52zM295 924h4v2h-4zM303 924h64v2h-64zM371 924h96v2h-96zM479 924h4v2h-4zM491 924h16v2h-16zM515 924h16v2h-16zM603 924h8v2h-8zM615 924h168v2h-168zM787 924h12v2h-12zM803 924h8v2h-8zM823 924h4v2h-4zM903 924h4v2h-4zM919 924h40v2h-40zM971 924h4v2h-4zM1035 924h12v2h-12zM1051 924h12v2h-12zM127 926h8v2h-8zM139 926h8v2h-8zM151 926h4v2h-4zM159 926h20v2h-20zM183 926h4v2h-4zM207 926h4v2h-4zM215 926h8v2h-8zM227 926h8v2h-8zM239 926h52v2h-52zM295 926h4v2h-4zM303 926h4v2h-4zM311 926h56v2h-56zM371 926h16v2h-16zM391 926h72v2h-72zM479 926h4v2h-4zM523 926h4v2h-4zM615 926h168v2h-168zM807 926h4v2h-4zM927 926h32v2h-32zM975 926h4v2h-4zM983 926h4v2h-4zM1015 926h4v2h-4zM1035 926h12v2h-12zM1051 926h12v2h-12zM127 928h8v2h-8zM139 928h8v2h-8zM151 928h4v2h-4zM159 928h20v2h-20zM183 928h4v2h-4zM207 928h4v2h-4zM227 928h8v2h-8zM243 928h28v2h-28zM275 928h16v2h-16zM295 928h4v2h-4zM303 928h4v2h-4zM311 928h56v2h-56zM371 928h16v2h-16zM391 928h64v2h-64zM619 928h4v2h-4zM631 928h128v2h-128zM763 928h16v2h-16zM935 928h28v2h-28zM1039 928h8v2h-8zM1051 928h8v2h-8zM139 930h8v2h-8zM151 930h4v2h-4zM159 930h8v2h-8zM183 930h4v2h-4zM227 930h8v2h-8zM251 930h8v2h-8zM263 930h8v2h-8zM283 930h8v2h-8zM295 930h4v2h-4zM311 930h8v2h-8zM323 930h8v2h-8zM335 930h32v2h-32zM375 930h4v2h-4zM383 930h4v2h-4zM391 930h4v2h-4zM399 930h24v2h-24zM427 930h20v2h-20zM451 930h4v2h-4zM631 930h4v2h-4zM639 930h12v2h-12zM655 930h84v2h-84zM743 930h8v2h-8zM755 930h4v2h-4zM935 930h32v2h-32zM1011 930h4v2h-4zM1031 930h4v2h-4zM1039 930h8v2h-8zM1051 930h8v2h-8zM139 932h4v2h-4zM151 932h4v2h-4zM159 932h8v2h-8zM183 932h4v2h-4zM227 932h8v2h-8zM251 932h4v2h-4zM327 932h4v2h-4zM335 932h4v2h-4zM355 932h4v2h-4zM363 932h4v2h-4zM375 932h4v2h-4zM391 932h4v2h-4zM403 932h8v2h-8zM439 932h4v2h-4zM655 932h52v2h-52zM711 932h4v2h-4zM723 932h12v2h-12zM743 932h4v2h-4zM935 932h4v2h-4zM947 932h24v2h-24zM1027 932h8v2h-8zM1039 932h8v2h-8zM1055 932h4v2h-4zM403 934h4v2h-4zM655 934h4v2h-4zM667 934h16v2h-16zM691 934h4v2h-4zM947 934h4v2h-4zM959 934h16v2h-16zM1019 934h16v2h-16zM1039 934h4v2h-4zM667 936h4v2h-4zM675 936h4v2h-4zM947 936h4v2h-4zM959 936h4v2h-4zM967 936h4v2h-4zM975 936h8v2h-8zM987 936h48v2h-48zM675 938h4v2h-4zM967 938h4v2h-4zM991 938h40v2h-40zM967 940h4v2h-4zM1003 940h28v2h-28zM1003 942h12v2h-12zM1027 942h4v2h-4z"/>
<path fill="#0030ff" d="M835 832h16v2h-16zM835 836h16v2h-16zM835 840h16v2h-16zM835 844h16v2h-16zM835 848h16v2h-16zM835 852h16v2h-16zM835 856h16v2h-16zM835 860h16v2h-16zM835 864h16v2h-16zM835 868h16v2h-16zM835 872h16v2h-16zM835 876h16v2h-16zM835 880h16v2h-16zM835 884h16v2h-16zM835 888h16v2h-16zM835 892h16v2h-16zM835 896h16v2h-16zM835 900h16v2h-16zM835 904h16v2h-16z"/>
<path fill="#0000ff" d="M835 834h16v2h-16zM831 836h4v2h-4zM835 838h16v2h-16zM831 840h4v2h-4zM835 842h16v2h-16zM835 846h16v2h-16zM831 850h20v2h-20zM439 852h16v2h-16zM531 852h4v2h-4zM599 852h8v2h-8zM651 852h4v2h-4zM695 852h4v2h-4zM907 852h4v2h-4zM227 854h4v2h-4zM463 854h4v2h-4zM471 854h4v2h-4zM739 854h12v2h-12zM835 854h16v2h-16zM911 854h4v2h-4zM1027 854h8v2h-8zM223 856h4v2h-4zM411 856h4v2h-4zM427 856h8v2h-8zM831 856h4v2h-4zM955 856h4v2h-4zM303 858h4v2h-4zM467 858h4v2h-4zM835 858h16v2h-16zM1055 858h8v2h-8zM775 860h20v2h-20zM559 862h4v2h-4zM775 862h4v2h-4zM787 862h4v2h-4zM831 862h20v2h-20zM935 862h4v2h-4zM979 862h4v2h-4zM631 864h4v2h-4zM771 864h28v2h-28zM831 864h4v2h-4zM963 864h4v2h-4zM1075 864h12v2h-12zM359 866h4v2h-4zM367 866h4v2h-4zM771 866h16v2h-16zM791 866h4v2h-4zM831 866h20v2h-20zM871 866h8v2h-8zM927 866h4v2h-4zM959 866h4v2h-4zM275 868h4v2h-4zM299 868h4v2h-4zM523 868h4v2h-4zM775 868h4v2h-4zM791 868h4v2h-4zM819 868h4v2h-4zM831 868h4v2h-4zM1103 868h1v2h-1zM771 870h16v2h-16zM791 870h4v2h-4zM835 870h16v2h-16zM1015 870h4v2h-4zM391 872h4v2h-4zM431 872h12v2h-12zM647 872h8v2h-8zM775 872h24v2h-24zM831 872h4v2h-4zM743 874h4v2h-4zM771 874h4v2h-4zM779 874h20v2h-20zM831 874h20v2h-20zM999 874h12v2h-12zM779 876h16v2h-16zM823 876h12v2h-12zM747 878h4v2h-4zM779 878h8v2h-8zM791 878h4v2h-4zM831 878h20v2h-20zM571 880h4v2h-4zM647 880h4v2h-4zM727 880h4v2h-4zM831 880h4v2h-4zM855 880h4v2h-4zM1027 880h4v2h-4zM1059 880h4v2h-4zM559 882h4v2h-4zM831 882h20v2h-20zM895 882h12v2h-12zM555 884h4v2h-4zM591 884h4v2h-4zM831 884h4v2h-4zM835 886h16v2h-16zM831 890h20v2h-20zM831 892h4v2h-4zM831 894h20v2h-20zM831 896h4v2h-4zM831 898h20v2h-20zM831 900h4v2h-4zM831 902h20v2h-20z"/>
<path fill="#00b8ff" d="M331 844h4v2h-4zM467 844h4v2h-4zM539 844h4v2h-4zM611 844h8v2h-8zM707 844h12v2h-12zM231 846h4v2h-4zM303 846h4v2h-4zM331 846h4v2h-4zM371 846h4v2h-4zM527 846h4v2h-4zM695 846h4v2h-4zM715 846h4v2h-4zM951 846h4v2h-4zM991 846h8v2h-8zM1019 846h24v2h-24zM1083 846h4v2h-4zM407 848h4v2h-4zM415 848h4v2h-4zM455 848h4v2h-4zM663 848h4v2h-4zM683 848h12v2h-12zM699 848h4v2h-4zM731 848h12v2h-12zM799 848h4v2h-4zM931 848h4v2h-4zM1031 848h4v2h-4zM167 850h4v2h-4zM339 850h4v2h-4zM615 850h4v2h-4zM683 850h4v2h-4zM747 850h4v2h-4zM771 850h20v2h-20zM951 850h4v2h-4zM971 850h8v2h-8zM1019 850h4v2h-4zM1095 850h4v2h-4zM167 852h8v2h-8zM283 852h4v2h-4zM315 852h4v2h-4zM359 852h4v2h-4zM423 852h8v2h-8zM471 852h20v2h-20zM527 852h4v2h-4zM591 852h8v2h-8zM623 852h8v2h-8zM663 852h4v2h-4zM699 852h4v2h-4zM711 852h4v2h-4zM723 852h4v2h-4zM763 852h36v2h-36zM807 852h12v2h-12zM911 852h4v2h-4zM919 852h12v2h-12zM935 852h4v2h-4zM955 852h4v2h-4zM975 852h4v2h-4zM991 852h16v2h-16zM1063 852h4v2h-4zM167 854h12v2h-12zM263 854h4v2h-4zM271 854h4v2h-4zM307 854h8v2h-8zM407 854h8v2h-8zM443 854h4v2h-4zM455 854h8v2h-8zM467 854h4v2h-4zM475 854h4v2h-4zM491 854h12v2h-12zM523 854h4v2h-4zM539 854h8v2h-8zM555 854h4v2h-4zM631 854h4v2h-4zM671 854h8v2h-8zM683 854h8v2h-8zM759 854h44v2h-44zM851 854h16v2h-16zM931 854h4v2h-4zM971 854h4v2h-4zM1019 854h4v2h-4zM1059 854h12v2h-12zM1103 854h1v2h-1zM167 856h16v2h-16zM251 856h4v2h-4zM283 856h8v2h-8zM311 856h20v2h-20zM339 856h8v2h-8zM351 856h8v2h-8zM367 856h4v2h-4zM403 856h4v2h-4zM455 856h28v2h-28zM487 856h20v2h-20zM547 856h8v2h-8zM571 856h8v2h-8zM595 856h8v2h-8zM627 856h4v2h-4zM659 856h4v2h-4zM671 856h4v2h-4zM687 856h4v2h-4zM711 856h4v2h-4zM727 856h8v2h-8zM755 856h16v2h-16zM791 856h16v2h-16zM811 856h8v2h-8zM867 856h4v2h-4zM907 856h4v2h-4zM923 856h8v2h-8zM1003 856h4v2h-4zM1027 856h4v2h-4zM167 858h20v2h-20zM247 858h8v2h-8zM319 858h4v2h-4zM375 858h4v2h-4zM387 858h4v2h-4zM443 858h4v2h-4zM451 858h16v2h-16zM471 858h40v2h-40zM519 858h8v2h-8zM675 858h4v2h-4zM683 858h8v2h-8zM703 858h4v2h-4zM755 858h12v2h-12zM795 858h12v2h-12zM819 858h4v2h-4zM867 858h8v2h-8zM891 858h4v2h-4zM935 858h8v2h-8zM979 858h4v2h-4zM995 858h8v2h-8zM1019 858h8v2h-8zM1071 858h12v2h-12zM167 860h24v2h-24zM227 860h4v2h-4zM267 860h8v2h-8zM287 860h4v2h-4zM315 860h8v2h-8zM339 860h8v2h-8zM399 860h4v2h-4zM435 860h16v2h-16zM455 860h28v2h-28zM487 860h4v2h-4zM495 860h4v2h-4zM503 860h16v2h-16zM523 860h8v2h-8zM571 860h4v2h-4zM583 860h4v2h-4zM607 860h8v2h-8zM619 860h12v2h-12zM675 860h12v2h-12zM751 860h12v2h-12zM799 860h16v2h-16zM827 860h4v2h-4zM879 860h4v2h-4zM1023 860h16v2h-16zM1047 860h8v2h-8zM1071 860h4v2h-4zM1099 860h4v2h-4zM167 862h28v2h-28zM219 862h12v2h-12zM279 862h4v2h-4zM315 862h4v2h-4zM331 862h4v2h-4zM343 862h4v2h-4zM371 862h4v2h-4zM435 862h40v2h-40zM479 862h28v2h-28zM511 862h8v2h-8zM591 862h4v2h-4zM603 862h8v2h-8zM655 862h4v2h-4zM739 862h4v2h-4zM751 862h12v2h-12zM799 862h12v2h-12zM859 862h4v2h-4zM927 862h4v2h-4zM939 862h8v2h-8zM963 862h4v2h-4zM971 862h4v2h-4zM987 862h4v2h-4zM999 862h12v2h-12zM1035 862h8v2h-8zM1047 862h8v2h-8zM171 864h24v2h-24zM215 864h4v2h-4zM239 864h4v2h-4zM283 864h8v2h-8zM363 864h4v2h-4zM399 864h8v2h-8zM435 864h4v2h-4zM447 864h12v2h-12zM467 864h16v2h-16zM491 864h20v2h-20zM515 864h8v2h-8zM555 864h4v2h-4zM567 864h4v2h-4zM623 864h8v2h-8zM643 864h8v2h-8zM667 864h20v2h-20zM703 864h4v2h-4zM751 864h8v2h-8zM803 864h8v2h-8zM859 864h4v2h-4zM883 864h4v2h-4zM955 864h4v2h-4zM967 864h4v2h-4zM175 866h20v2h-20zM223 866h4v2h-4zM275 866h4v2h-4zM283 866h8v2h-8zM339 866h8v2h-8zM379 866h4v2h-4zM387 866h4v2h-4zM395 866h4v2h-4zM439 866h8v2h-8zM451 866h44v2h-44zM499 866h8v2h-8zM527 866h4v2h-4zM543 866h4v2h-4zM587 866h4v2h-4zM603 866h4v2h-4zM639 866h12v2h-12zM671 866h4v2h-4zM727 866h4v2h-4zM743 866h16v2h-16zM803 866h12v2h-12zM827 866h4v2h-4zM859 866h4v2h-4zM891 866h12v2h-12zM951 866h4v2h-4zM991 866h4v2h-4zM1015 866h4v2h-4zM1023 866h8v2h-8zM1043 866h4v2h-4zM1079 866h16v2h-16zM1103 866h1v2h-1zM179 868h16v2h-16zM239 868h4v2h-4zM263 868h4v2h-4zM327 868h8v2h-8zM363 868h4v2h-4zM387 868h8v2h-8zM423 868h8v2h-8zM463 868h16v2h-16zM491 868h20v2h-20zM539 868h4v2h-4zM647 868h4v2h-4zM679 868h12v2h-12zM751 868h8v2h-8zM803 868h12v2h-12zM927 868h4v2h-4zM947 868h12v2h-12zM963 868h12v2h-12zM983 868h12v2h-12zM1011 868h4v2h-4zM183 870h12v2h-12zM247 870h8v2h-8zM323 870h4v2h-4zM355 870h8v2h-8zM391 870h4v2h-4zM447 870h4v2h-4zM455 870h8v2h-8zM467 870h16v2h-16zM487 870h20v2h-20zM515 870h4v2h-4zM563 870h4v2h-4zM667 870h4v2h-4zM679 870h4v2h-4zM691 870h4v2h-4zM715 870h12v2h-12zM743 870h4v2h-4zM751 870h8v2h-8zM803 870h12v2h-12zM855 870h12v2h-12zM875 870h8v2h-8zM903 870h16v2h-16zM935 870h4v2h-4zM963 870h4v2h-4zM983 870h4v2h-4zM991 870h4v2h-4zM1019 870h4v2h-4zM1079 870h8v2h-8zM187 872h8v2h-8zM243 872h4v2h-4zM303 872h4v2h-4zM335 872h4v2h-4zM367 872h4v2h-4zM463 872h24v2h-24zM491 872h16v2h-16zM575 872h4v2h-4zM615 872h4v2h-4zM667 872h8v2h-8zM683 872h16v2h-16zM735 872h4v2h-4zM751 872h8v2h-8zM803 872h12v2h-12zM895 872h4v2h-4zM903 872h4v2h-4zM987 872h4v2h-4zM995 872h4v2h-4zM1027 872h4v2h-4zM1039 872h8v2h-8zM1103 872h1v2h-1zM191 874h4v2h-4zM275 874h4v2h-4zM323 874h4v2h-4zM347 874h12v2h-12zM363 874h4v2h-4zM371 874h8v2h-8zM395 874h4v2h-4zM435 874h8v2h-8zM463 874h12v2h-12zM479 874h4v2h-4zM487 874h4v2h-4zM531 874h4v2h-4zM587 874h20v2h-20zM619 874h4v2h-4zM635 874h4v2h-4zM651 874h12v2h-12zM747 874h16v2h-16zM799 874h12v2h-12zM859 874h4v2h-4zM899 874h8v2h-8zM923 874h8v2h-8zM1011 874h4v2h-4zM1095 874h4v2h-4zM235 876h16v2h-16zM255 876h8v2h-8zM347 876h4v2h-4zM391 876h8v2h-8zM471 876h16v2h-16zM491 876h4v2h-4zM571 876h12v2h-12zM591 876h4v2h-4zM599 876h4v2h-4zM615 876h8v2h-8zM651 876h12v2h-12zM687 876h4v2h-4zM711 876h12v2h-12zM743 876h4v2h-4zM751 876h12v2h-12zM799 876h16v2h-16zM891 876h8v2h-8zM967 876h4v2h-4zM991 876h4v2h-4zM1023 876h8v2h-8zM1067 876h16v2h-16zM1091 876h4v2h-4zM263 878h8v2h-8zM287 878h4v2h-4zM295 878h4v2h-4zM331 878h12v2h-12zM363 878h4v2h-4zM387 878h8v2h-8zM487 878h4v2h-4zM503 878h8v2h-8zM519 878h4v2h-4zM535 878h8v2h-8zM555 878h4v2h-4zM575 878h8v2h-8zM627 878h8v2h-8zM639 878h4v2h-4zM647 878h4v2h-4zM655 878h4v2h-4zM695 878h4v2h-4zM711 878h4v2h-4zM727 878h16v2h-16zM751 878h16v2h-16zM795 878h12v2h-12zM811 878h4v2h-4zM827 878h4v2h-4zM863 878h4v2h-4zM891 878h4v2h-4zM903 878h12v2h-12zM927 878h4v2h-4zM971 878h12v2h-12zM1019 878h8v2h-8zM1055 878h4v2h-4zM1067 878h4v2h-4zM1079 878h4v2h-4zM1095 878h4v2h-4zM331 880h4v2h-4zM351 880h4v2h-4zM371 880h4v2h-4zM395 880h4v2h-4zM459 880h4v2h-4zM491 880h4v2h-4zM523 880h12v2h-12zM543 880h4v2h-4zM591 880h4v2h-4zM635 880h4v2h-4zM679 880h16v2h-16zM703 880h12v2h-12zM755 880h16v2h-16zM791 880h16v2h-16zM819 880h12v2h-12zM927 880h4v2h-4zM967 880h4v2h-4zM979 880h8v2h-8zM991 880h4v2h-4zM999 880h4v2h-4zM1023 880h4v2h-4zM1043 880h4v2h-4zM1079 880h4v2h-4zM223 882h4v2h-4zM231 882h4v2h-4zM239 882h12v2h-12zM291 882h8v2h-8zM311 882h4v2h-4zM351 882h4v2h-4zM423 882h4v2h-4zM455 882h4v2h-4zM471 882h4v2h-4zM491 882h12v2h-12zM511 882h8v2h-8zM523 882h8v2h-8zM623 882h4v2h-4zM647 882h8v2h-8zM667 882h4v2h-4zM679 882h12v2h-12zM723 882h4v2h-4zM731 882h4v2h-4zM759 882h44v2h-44zM819 882h4v2h-4zM907 882h4v2h-4zM975 882h4v2h-4zM1027 882h4v2h-4zM1035 882h4v2h-4zM1051 882h4v2h-4zM267 884h4v2h-4zM295 884h4v2h-4zM319 884h4v2h-4zM347 884h4v2h-4zM355 884h4v2h-4zM383 884h8v2h-8zM499 884h4v2h-4zM511 884h4v2h-4zM575 884h4v2h-4zM603 884h4v2h-4zM611 884h4v2h-4zM623 884h4v2h-4zM639 884h12v2h-12zM695 884h4v2h-4zM743 884h4v2h-4zM755 884h4v2h-4zM763 884h36v2h-36zM891 884h12v2h-12zM935 884h12v2h-12zM951 884h4v2h-4zM959 884h4v2h-4zM967 884h8v2h-8zM991 884h8v2h-8zM1031 884h4v2h-4zM1051 884h8v2h-8zM1083 884h8v2h-8zM239 886h4v2h-4zM319 886h4v2h-4zM383 886h4v2h-4zM507 886h4v2h-4zM631 886h4v2h-4zM647 886h4v2h-4zM699 886h4v2h-4zM771 886h20v2h-20zM811 886h12v2h-12zM335 888h4v2h-4zM447 888h4v2h-4zM523 888h4v2h-4zM539 888h4v2h-4zM547 888h4v2h-4zM615 888h4v2h-4zM759 888h4v2h-4zM867 888h4v2h-4zM903 888h4v2h-4zM451 890h4v2h-4zM679 890h8v2h-8zM935 890h4v2h-4zM963 890h8v2h-8zM311 892h4v2h-4zM391 892h4v2h-4zM615 892h4v2h-4zM727 892h4v2h-4zM787 892h4v2h-4zM851 892h8v2h-8z"/>
<path fill="#0070ff" d="M555 852h4v2h-4zM1095 852h4v2h-4zM291 854h8v2h-8zM483 854h8v2h-8zM603 854h4v2h-4zM899 854h4v2h-4zM643 856h4v2h-4zM771 856h20v2h-20zM863 856h4v2h-4zM1011 856h12v2h-12zM391 858h8v2h-8zM415 858h8v2h-8zM611 858h8v2h-8zM627 858h8v2h-8zM731 858h4v2h-4zM767 858h28v2h-28zM879 858h4v2h-4zM955 858h16v2h-16zM235 860h4v2h-4zM307 860h8v2h-8zM631 860h4v2h-4zM747 860h4v2h-4zM763 860h12v2h-12zM795 860h4v2h-4zM855 860h4v2h-4zM863 860h4v2h-4zM1039 860h8v2h-8zM339 862h4v2h-4zM671 862h4v2h-4zM707 862h4v2h-4zM735 862h4v2h-4zM763 862h12v2h-12zM779 862h8v2h-8zM791 862h8v2h-8zM975 862h4v2h-4zM1067 862h4v2h-4zM379 864h4v2h-4zM759 864h12v2h-12zM799 864h4v2h-4zM1003 864h4v2h-4zM1055 864h8v2h-8zM1103 864h1v2h-1zM703 866h4v2h-4zM711 866h4v2h-4zM719 866h4v2h-4zM759 866h12v2h-12zM787 866h4v2h-4zM795 866h8v2h-8zM863 866h4v2h-4zM943 866h4v2h-4zM999 866h4v2h-4zM375 868h4v2h-4zM759 868h16v2h-16zM779 868h12v2h-12zM795 868h8v2h-8zM1019 868h16v2h-16zM267 870h4v2h-4zM363 870h4v2h-4zM403 870h12v2h-12zM587 870h4v2h-4zM635 870h8v2h-8zM759 870h12v2h-12zM787 870h4v2h-4zM795 870h8v2h-8zM251 872h8v2h-8zM263 872h4v2h-4zM535 872h8v2h-8zM571 872h4v2h-4zM587 872h8v2h-8zM607 872h4v2h-4zM699 872h12v2h-12zM759 872h16v2h-16zM799 872h4v2h-4zM907 872h4v2h-4zM967 872h12v2h-12zM1035 872h4v2h-4zM1047 872h4v2h-4zM391 874h4v2h-4zM499 874h4v2h-4zM627 874h8v2h-8zM763 874h8v2h-8zM775 874h4v2h-4zM887 874h8v2h-8zM979 874h4v2h-4zM1059 874h4v2h-4zM327 876h4v2h-4zM383 876h4v2h-4zM611 876h4v2h-4zM727 876h4v2h-4zM763 876h16v2h-16zM795 876h4v2h-4zM815 876h4v2h-4zM851 876h4v2h-4zM883 876h4v2h-4zM923 876h4v2h-4zM959 876h4v2h-4zM1043 876h4v2h-4zM291 878h4v2h-4zM419 878h4v2h-4zM599 878h16v2h-16zM767 878h12v2h-12zM787 878h4v2h-4zM1047 878h4v2h-4zM1059 878h4v2h-4zM243 880h4v2h-4zM339 880h8v2h-8zM447 880h4v2h-4zM455 880h4v2h-4zM639 880h4v2h-4zM771 880h20v2h-20zM959 880h4v2h-4zM235 882h4v2h-4zM343 882h8v2h-8zM415 882h4v2h-4zM695 882h8v2h-8zM915 882h4v2h-4zM1023 882h4v2h-4zM379 884h4v2h-4zM451 884h4v2h-4zM571 884h4v2h-4zM919 884h16v2h-16z"/>
</svg><!--/HEAT-->
<svg class="a" style="left:36px;top:748px" width="1124" height="272" viewBox="36 748 1124 272">
<rect x="65" y="750" width="2.5" height="240" fill="#000"/>
<rect x="65" y="790" width="2.5" height="19" fill="#e8e800"/><rect x="65" y="809" width="2.5" height="30" fill="#20e0c0"/><rect x="65" y="842" width="2.5" height="53" fill="#0000ff"/><rect x="65" y="895" width="2.5" height="49" fill="#10e080"/>
<rect x="65" y="990" width="1" height="30" fill="#000"/>
<rect x="51" y="990" width="1053" height="1" fill="#000"/>
<rect x="54" y="809.0" width="11" height="1" fill="#222"/>
<rect x="54" y="869.0" width="11" height="1" fill="#222"/>
<rect x="54" y="929.0" width="11" height="1" fill="#222"/>
<rect x="59" y="769.5" width="6" height="1" fill="#222"/>
<rect x="59" y="789.5" width="6" height="1" fill="#222"/>
<rect x="59" y="829.5" width="6" height="1" fill="#222"/>
<rect x="59" y="849.5" width="6" height="1" fill="#222"/>
<rect x="59" y="889.5" width="6" height="1" fill="#222"/>
<rect x="59" y="909.5" width="6" height="1" fill="#222"/>
<rect x="59" y="949.5" width="6" height="1" fill="#222"/>
<rect x="59" y="969.5" width="6" height="1" fill="#222"/>
<g font-family="Liberation Sans" font-size="14" fill="#111">
<text x="38.5" y="763">0</text>
<text x="38.5" y="815">3</text>
<text x="38.5" y="875">6</text>
<text x="38.5" y="935">9</text>
<text x="38.5" y="995">0</text>
</g>
<path d="M71.2 991v6M78.9 991v6M86.5 991v9M94.1 991v6M101.8 991v6M109.4 991v6M117.1 991v6M124.7 991v12M132.3 991v6M140.0 991v6M147.6 991v6M155.3 991v6M162.9 991v9M170.5 991v6M178.2 991v6M185.8 991v6M193.5 991v6M201.1 991v12M208.7 991v6M216.4 991v6M224.0 991v6M231.7 991v6M239.3 991v9M246.9 991v6M254.6 991v6M262.2 991v6M269.9 991v6M277.5 991v12M285.1 991v6M292.8 991v6M300.4 991v6M308.1 991v6M315.7 991v9M323.3 991v6M331.0 991v6M338.6 991v6M346.3 991v6M353.9 991v12M361.5 991v6M369.2 991v6M376.8 991v6M384.5 991v6M392.1 991v9M399.7 991v6M407.4 991v6M415.0 991v6M422.7 991v6M430.3 991v12M437.9 991v6M445.6 991v6M453.2 991v6M460.9 991v6M468.5 991v9M476.1 991v6M483.8 991v6M491.4 991v6M499.1 991v6M506.7 991v12M514.3 991v6M522.0 991v6M529.6 991v6M537.3 991v6M544.9 991v9M552.5 991v6M560.2 991v6M567.8 991v6M575.5 991v6M583.1 991v12M590.7 991v6M598.4 991v6M606.0 991v6M613.7 991v6M621.3 991v9M628.9 991v6M636.6 991v6M644.2 991v6M651.9 991v6M659.5 991v12M667.1 991v6M674.8 991v6M682.4 991v6M690.1 991v6M697.7 991v9M705.3 991v6M713.0 991v6M720.6 991v6M728.3 991v6M735.9 991v12M743.5 991v6M751.2 991v6M758.8 991v6M766.5 991v6M774.1 991v9M781.7 991v6M789.4 991v6M797.0 991v6M804.7 991v6M812.3 991v12M819.9 991v6M827.6 991v6M835.2 991v6M842.9 991v6M850.5 991v9M858.1 991v6M865.8 991v6M873.4 991v6M881.1 991v6M888.7 991v12M896.3 991v6M904.0 991v6M911.6 991v6M919.3 991v6M926.9 991v9M934.5 991v6M942.2 991v6M949.8 991v6M957.5 991v6M965.1 991v12M972.7 991v6M980.4 991v6M988.0 991v6M995.7 991v6M1003.3 991v9M1010.9 991v6M1018.6 991v6M1026.2 991v6M1033.9 991v6M1041.5 991v12M1049.1 991v6M1056.8 991v6M1064.4 991v6M1072.1 991v6M1079.7 991v9M1087.3 991v6M1095.0 991v6M1102.6 991v6" stroke="#333" stroke-width="1.4" fill="none"/>
<g font-family="Liberation Sans" font-size="14" fill="#111" letter-spacing="0.8">
<text x="112.7" y="1014.5">1m</text>
<text x="192.8" y="1014.5">2m</text>
<text x="269.2" y="1014.5">3m</text>
<text x="345.6" y="1014.5">4m</text>
<text x="422.0" y="1014.5">5m</text>
<text x="498.4" y="1014.5">6m</text>
<text x="574.8" y="1014.5">7m</text>
<text x="651.2" y="1014.5">8m</text>
<text x="727.6" y="1014.5">9m</text>
<text x="804.0" y="1014.5">10m</text>
<text x="880.4" y="1014.5">11m</text>
<text x="956.8" y="1014.5">12m</text>
<text x="1033.2" y="1014.5">13m</text>
</g>
<path d="M138.0 1003 L145.5 991 L153.0 1003Z M144.0 1003 h3 v11.5 h-3z" fill="#ff3434"/>
<path d="M255.5 1003 L263 991 L270.5 1003Z M261.5 1003 h3 v11.5 h-3z" fill="#ff3434"/>
<path d="M613.9 1003 L621.4 991 L628.9 1003Z M619.9 1003 h3 v11.5 h-3z" fill="#ff3434"/>
<path d="M735.9 1003 L743.4 991 L750.9 1003Z M741.9 1003 h3 v11.5 h-3z" fill="#ff3434"/>
<path d="M848.5 1003 L856 991 L863.5 1003Z M854.5 1003 h3 v11.5 h-3z" fill="#ff3434"/>
<path d="M969.5 1003 L977 991 L984.5 1003Z M975.5 1003 h3 v11.5 h-3z" fill="#ff3434"/>
<path d="M1007 1003 L1013.4 992 L1019.8 1003Z" fill="#0000e0"/>
<path d="M739 1002 V992 M734.5 996.5 L739 992 L743.5 996.5" stroke="#2030e0" stroke-width="1.5" fill="none"/>
<path d="M1013.5 762 V990" stroke="#0000d0" stroke-width="1" stroke-dasharray="6 4"/>
<path d="M53 935 H64 M59.5 930.5 L64 935 L59.5 939.5" stroke="#1a1aff" stroke-width="1.6" fill="none"/>
<rect x="1106" y="750.0" width="54" height="19.6" fill="#ff0000"/>
<rect x="1106" y="769.3" width="54" height="19.6" fill="#ff3800"/>
<rect x="1106" y="788.6" width="54" height="19.6" fill="#ff7000"/>
<rect x="1106" y="807.9" width="54" height="19.6" fill="#ffa800"/>
<rect x="1106" y="827.1" width="54" height="19.6" fill="#ffff00"/>
<rect x="1106" y="846.4" width="54" height="19.6" fill="#c0ff00"/>
<rect x="1106" y="865.7" width="54" height="19.6" fill="#00ec00"/>
<rect x="1106" y="885.0" width="54" height="19.6" fill="#00ff88"/>
<rect x="1106" y="904.3" width="54" height="19.6" fill="#00ffc0"/>
<rect x="1106" y="923.6" width="54" height="19.6" fill="#00ffff"/>
<rect x="1106" y="942.9" width="54" height="19.6" fill="#00b8ff"/>
<rect x="1106" y="962.1" width="54" height="19.6" fill="#0070ff"/>
<rect x="1106" y="981.4" width="54" height="19.6" fill="#0000ff"/>
<rect x="1106" y="1000.7" width="54" height="19.6" fill="#000000"/>
<g font-family="Liberation Sans" font-size="14.5" fill="#fff" stroke="#222" stroke-width="1.8" paint-order="stroke" stroke-linejoin="round">
<text x="1107" y="765.0">&gt;25%</text>
<text x="1107" y="784.3">&gt;20%</text>
<text x="1107" y="803.6">&gt;15%</text>
<text x="1107" y="822.9">&gt;10%</text>
<text x="1107" y="842.1">&gt;5%</text>
<text x="1107" y="861.4">&gt;2%</text>
<text x="1107" y="900.0">&lt;-2%</text>
<text x="1107" y="919.3">&lt;-5%</text>
<text x="1107" y="938.6">&lt;-10%</text>
<text x="1107" y="957.9">&lt;-15%</text>
<text x="1107" y="977.1">&lt;-20%</text>
<text x="1107" y="996.4">&lt;-25%</text>
<text x="1107" y="1015.7">Miss</text>
</g>
<text x="1106.5" y="880.7" font-family="Liberation Sans" font-size="14.5" fill="#111">OK</text>
</svg>
<div class="a" style="left:41px;top:715px;width:240px;height:30px;border-radius:15px;border:2px solid #1e8ff5;background:#dcdcdc"></div>
<div class="a" style="left:41px;top:715px;width:120px;height:30px;border-radius:15px 0 0 15px;background:linear-gradient(90deg,#00a2ff,#0072e2)"></div>
<div class="a" style="left:41px;top:719px;width:120px;text-align:center;color:#fff;font-size:16px;line-height:22px">色谱图</div>
<div class="a" style="left:181.5px;top:719px;color:#1c5ff0;font-size:16px;line-height:22px">全景图</div>
<div class="a" style="left:299px;top:721px;color:#1414f0;font-size:14px;line-height:18px">纵向距离:2.29m/40.18m,12点钟</div>
<svg class="a" style="left:900px;top:722px" width="30" height="16" viewBox="0 0 30 16"><path d="M1 1 h3 v4 h22 v-4 h3 v14 h-3 v-4 h-22 v4 h-3z" fill="#333"/></svg>
<div class="a" style="left:943px;top:715px;width:93px;height:26px;background:#fff;border:1px solid #e0e0e0"></div>
<div class="a" style="left:947px;top:719px;color:#111;font-size:14px;line-height:18px">默认</div>
<svg class="a" style="left:1021px;top:724px" width="12" height="8" viewBox="0 0 12 8"><path d="M1 1.5 L6 6.5 L11 1.5" stroke="#555" stroke-width="1.2" fill="none"/></svg>
<div class="a" style="left:1045px;top:715px;width:60px;height:30px;background:#6b6b6b;color:#f0f0f0;font-size:16px;line-height:30px;text-align:center">1:1</div>
<svg class="a" style="left:1119px;top:716px" width="33" height="28" viewBox="0 0 33 28"><path d="M19 24 H5 A3 3 0 0 1 2 21 V5 A3 3 0 0 1 5 2 H25 A3 3 0 0 1 28 5 V12" fill="none" stroke="#3a3a3a" stroke-width="2.6"/><circle cx="9.5" cy="8.5" r="2" fill="#3a3a3a"/><path d="M6 20 L11 13 L15 17 L18 14 L20 16 V20Z" fill="#3a3a3a"/><path d="M25 13 V25 M20.5 20.5 L25 25 L29.5 20.5" fill="none" stroke="#3a3a3a" stroke-width="2.6"/></svg>
<svg class="a" style="left:1171px;top:716px" width="28" height="28" viewBox="0 0 28 28"><path d="M11 3 H4 A2 2 0 0 0 2 5 V24 A2 2 0 0 0 4 26 H23 A2 2 0 0 0 25 24 V17" fill="none" stroke="#3a3a3a" stroke-width="2.4"/><rect x="17" y="2" width="9" height="9" rx="2" fill="none" stroke="#3a3a3a" stroke-width="2.2"/><path d="M7 21 L16 12 M9 12 H16 V19" fill="none" stroke="#3a3a3a" stroke-width="2"/></svg>
<svg class="a" style="left:1162px;top:748px" width="48" height="190" viewBox="1162 748 48 190">
 <g fill="none" stroke="#333" stroke-width="2.2" stroke-linecap="round" stroke-linejoin="round">
  <path d="M1186 763 L1190 767 L1177 780 L1172 781 L1173 776Z"/><path d="M1172 781 C1175 785 1180 783 1184 779 C1188 776 1191 779 1195 782"/>
  <path d="M1174.5 808.5 H1196 M1180 808 V804 H1190 V808 M1177 811 L1179 832 H1191 L1193 811 M1182 815 V828 M1185 815 V828 M1188 815 V828"/>
  <rect x="1170.5" y="849.5" width="29" height="29" rx="3"/><path d="M1177 850 V859 H1192 V850 M1187.5 853 V856"/>
  <circle cx="1180.5" cy="906.5" r="9.5"/><path d="M1180.5 901.5 V911.5 M1175.5 906.5 H1185.5" stroke-width="2.6"/><path d="M1187.5 913.5 L1197 923" stroke-width="4"/>
 </g>
 <circle cx="1197.5" cy="779.5" r="4" fill="#333"/>
 <path d="M1162 788 L1170 796 H1162Z" fill="#111"/>
</svg>
<!--/CMAP-->

<!-- ===== video panel ===== -->
<div class="a ttl" style="left:1216px;top:709px;width:589px;height:37px"></div>
<div class="a acc" style="left:1223px;top:719px"></div>
<div class="a pt" style="left:1240px;top:720px">视频图像（<span style="letter-spacing:1.4px">5112/13739</span>）</div>
<!--VIDEO-->
<svg class="a" style="left:1216px;top:749px" width="589" height="272" viewBox="1216 749 589 272">
 <defs>
  <radialGradient id="vglow" cx="1513" cy="889" r="190" gradientUnits="userSpaceOnUse">
   <stop offset="0.62" stop-color="#2a2a0e"/><stop offset="0.8" stop-color="#161607"/><stop offset="1" stop-color="#000"/>
  </radialGradient>
  <radialGradient id="vbase" cx="1508" cy="886" r="125" gradientUnits="userSpaceOnUse">
   <stop offset="0" stop-color="#000"/><stop offset="0.06" stop-color="#303030"/><stop offset="0.2" stop-color="#9c9ca0"/><stop offset="0.38" stop-color="#c0c498"/><stop offset="0.6" stop-color="#d4dc50"/><stop offset="1" stop-color="#c8d838"/>
  </radialGradient>
  <radialGradient id="vyel" cx="1595" cy="862" r="50" gradientUnits="userSpaceOnUse">
   <stop offset="0" stop-color="#f8f818" stop-opacity="1"/><stop offset="1" stop-color="#e8ee30" stop-opacity="0"/>
  </radialGradient>
  <radialGradient id="vdark" cx="1508" cy="884" r="24" gradientUnits="userSpaceOnUse">
   <stop offset="0" stop-color="#000"/><stop offset="0.35" stop-color="#141414"/><stop offset="1" stop-color="#606060" stop-opacity="0"/>
  </radialGradient>
  <linearGradient id="vroad" x1="0" y1="886" x2="0" y2="1010" gradientUnits="userSpaceOnUse">
   <stop offset="0" stop-color="#505048"/><stop offset="0.3" stop-color="#9a9a88"/><stop offset="1" stop-color="#b4b4a8"/>
  </linearGradient>
  <clipPath id="vclip"><circle cx="1513.7" cy="889" r="118"/></clipPath>
 </defs>
 <rect x="1216" y="749" width="589" height="272" fill="#000"/>
 <circle cx="1513" cy="889" r="190" fill="url(#vglow)"/>
 <circle cx="1513.7" cy="889" r="125" fill="#12120a"/>
 <g clip-path="url(#vclip)">
  <rect x="1390" y="765" width="250" height="250" fill="url(#vbase)"/>
  <path d="M1390 765 H1640 V826 H1390Z" fill="#d8e08c"/>
  <ellipse cx="1512" cy="796" rx="85" ry="20" fill="#eceeb8" opacity="0.6"/>
  <path d="M1390 826 H1640 V836 H1390Z" fill="#e0e870" opacity="0.5"/>
  <ellipse cx="1595" cy="865" rx="48" ry="55" fill="url(#vyel)"/>
  <ellipse cx="1425" cy="875" rx="35" ry="50" fill="#dce640" opacity="0.55"/>
  <path d="M1505 886 L1512 886 L1600 1010 L1420 1010Z" fill="url(#vroad)"/>
  <path d="M1505 886 L1420 1010 L1392 990 L1392 925Z" fill="#a0a070" opacity="0.75"/>
  <path d="M1512 886 L1600 1010 L1636 970 L1636 920Z" fill="#a8a878" opacity="0.75"/>
  <path d="M1445 990 L1480 935 M1582 992 L1548 938" stroke="#d4d840" stroke-width="9" opacity="0.55"/>
  <g fill="none" stroke="#f4f4d0" stroke-width="1.3" opacity="0.18">
   <circle cx="1508" cy="886" r="45"/><circle cx="1508" cy="886" r="62"/><circle cx="1508" cy="886" r="80"/><circle cx="1508" cy="886" r="98"/>
  </g>
  <circle cx="1508" cy="884" r="24" fill="url(#vdark)"/>
  <path d="M1604 893 L1601 914" stroke="#203080" stroke-width="2"/>
 </g>
 <g fill="none" stroke="#d8d8d0" stroke-width="1.2">
  <path d="M1697 801 A19 19 0 1 1 1710 801"/><path d="M1703.5 766 V797 M1697 801 L1703.5 796 L1710 801"/>
 </g>
 <path d="M1699 802 L1703.5 795 L1708 802Z" fill="#fff"/>
</svg>
<!--/VIDEO-->

<div class="a" style="left:35px;top:1022px;width:1176px;height:5px;background:#e9e9e9"></div>

<!-- right sidebar -->
<div id="rs" class="a"></div>
<!--SIDE-->
<div class="a" style="left:1810px;top:210px;width:110px;height:90px;background:#fff"></div>
<svg class="a" style="left:1850px;top:142px" width="32" height="29" viewBox="0 0 32 29"><g fill="none" stroke="#8c8c8c" stroke-width="1.6"><rect x="2.5" y="1.5" width="19" height="18" rx="2"/><rect x="10" y="7.5" width="19" height="18.5" rx="2"/></g></svg>
<div class="a ri" style="left:1809px;top:188px">二维分析</div>
<svg class="a" style="left:1849px;top:232px" width="32" height="29" viewBox="0 0 32 29"><g fill="none" stroke="#1a80f0" stroke-width="1.9" stroke-linejoin="round"><path d="M9.5 2 H22 L28.5 14 L22 26.5 H9.5 L2.5 14Z"/><path d="M2.5 14 H16 L22 2 M16 14 L22 26.5"/></g></svg>
<div class="a ri" style="left:1809px;top:278px;color:#1a7cf0">三维分析</div>
<svg class="a" style="left:1850px;top:322px" width="30" height="29" viewBox="0 0 30 29"><g fill="none" stroke="#8c8c8c" stroke-width="1.8"><rect x="1.5" y="13.5" width="6" height="13.5" rx="1"/><rect x="12" y="2" width="6" height="25" rx="1"/><rect x="22.5" y="9.5" width="6" height="17.5" rx="1"/></g></svg>
<div class="a ri" style="left:1809px;top:368px">图表分析</div>
<svg class="a" style="left:1850px;top:411px" width="30" height="31" viewBox="0 0 30 31"><g fill="none" stroke="#8c8c8c" stroke-width="1.9" stroke-linecap="round"><path d="M13 28.5 H6 A4 4 0 0 1 2 24.5 V6 A4 4 0 0 1 6 2 H19 A4 4 0 0 1 23 6 V13"/><path d="M9 2.5 H16"/><path d="M7 10 H16 M7 15 H12"/><circle cx="20" cy="22" r="4.5"/><path d="M23.5 25.5 L27 29"/></g></svg>
<div class="a ri" style="left:1809px;top:458px">缺陷预览</div>
<!--/SIDE-->

</body></html>
